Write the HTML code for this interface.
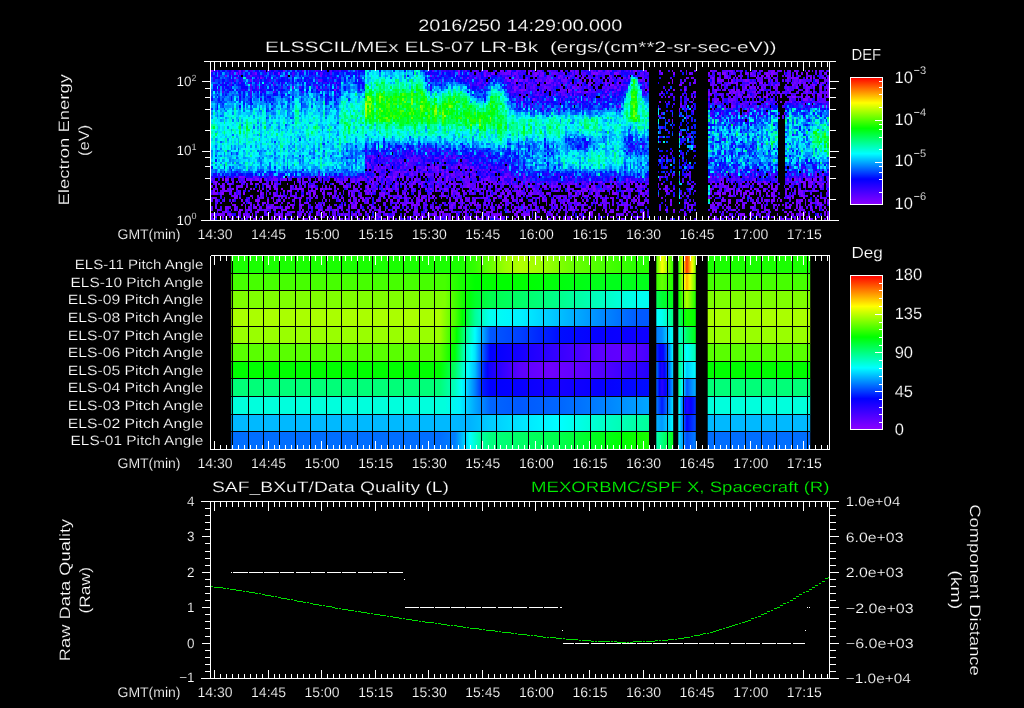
<!DOCTYPE html>
<html><head><meta charset="utf-8"><title>ELS plot</title>
<style>
html,body{margin:0;padding:0;background:#000;}
svg{display:block;will-change:transform;font-family:'Liberation Sans', sans-serif;}
text{text-rendering:geometricPrecision;}
</style></head>
<body>
<svg width="1024" height="708" viewBox="0 0 1024 708" font-family='"Liberation Sans", sans-serif'>
<rect width="1024" height="708" fill="#000"/>
<defs><linearGradient id="cb" x1="0" y1="0" x2="0" y2="1">
<stop offset="0" stop-color="#ff0000"/><stop offset="0.2" stop-color="#ffff00"/><stop offset="0.4" stop-color="#00ff00"/>
<stop offset="0.6" stop-color="#00ffff"/><stop offset="0.8" stop-color="#0000ff"/><stop offset="1" stop-color="#8c00ff"/>
</linearGradient></defs>
<text x="418.2" y="31" font-size="16.5" text-anchor="start" fill="#fff" stroke="#000" stroke-width="0.2" textLength="204" lengthAdjust="spacingAndGlyphs">2016/250 14:29:00.000</text>
<text x="265" y="51.5" font-size="15" text-anchor="start" fill="#fff" stroke="#000" stroke-width="0.2" textLength="511.6" lengthAdjust="spacingAndGlyphs">ELSSCIL/MEx ELS-07 LR-Bk  (ergs/(cm**2-sr-sec-eV))</text>
<g transform="translate(211.3 71.176) scale(1.75 2.3516)" stroke-width="1.02" fill="none" shape-rendering="crispEdges">
<path stroke="#8500ff" d="M0 0h1M141 0h1M157 0h1M165 0h1M170 0h1M182 0h1M200 0h1M205 0h1M221 0h1M242 0h1M248 0h1M256 0h1M285 0h1M321 0h1M327 0h1M341 0h1M38 1h1M141 1h1M181 1h1M185 1h1M218 1h1M220 1h1M230 1h2M264 1h1M292 1h2M308 1h1M317 1h1M320 1h1M334 1h1M340 1h1M351 1h1M125 2h1M156 2h1M158 2h1M185 2h1M199 2h1M227 2h1M299 2h1M310 2h1M314 2h1M317 2h2M320 2h1M323 2h1M335 2h1M28 3h1M168 3h1M198 3h1M208 3h1M212 3h1M271 3h1M286 3h1M311 3h1M332 3h1M334 3h1M340 3h1M342 3h1M170 4h1M173 4h2M176 4h1M191 4h1M193 4h1M213 4h1M216 4h1M227 4h1M263 4h1M284 4h1M289 4h1M295 4h1M297 4h1M305 4h1M318 4h1M336 4h1M35 5h1M191 5h2M205 5h1M232 5h1M261 5h1M275 5h1M297 5h1M307 5h1M313 5h2M336 5h1M343 5h1M346 5h1M349 5h1M176 6h1M216 6h1M225 6h1M228 6h2M267 6h2M291 6h1M322 6h1M332 6h1M338 6h1M343 6h2M60 7h1M206 7h1M305 7h1M323 7h1M334 7h1M348 7h1M70 8h1M173 8h1M177 8h1M179 8h1M204 8h2M216 8h1M264 8h1M270 8h1M288 8h1M297 8h1M314 8h1M340 8h1M352 8h1M204 9h1M209 9h2M214 9h1M225 9h1M276 9h1M296 9h1M298 9h2M303 9h1M340 9h1M348 9h1M207 10h1M226 10h1M285 10h1M301 10h1M320 10h1M343 10h1M215 11h1M310 11h1M313 11h1M316 11h2M323 11h1M325 11h1M332 11h2M341 11h1M352 11h1M177 12h1M184 12h1M199 12h1M208 12h1M289 12h1M338 12h3M288 13h1M331 13h1M233 15h1M297 15h1M343 15h1M267 16h1M271 16h1M306 16h1M114 34h1M133 37h1M89 39h1M126 40h1M142 40h1M99 41h1M122 41h1M128 41h1M169 41h1M93 42h1M102 42h1M115 42h1M129 42h1M131 42h1M166 42h1M309 42h1M94 43h1M107 43h1M134 43h1M148 43h1M122 44h1M131 44h2M349 44h1M16 45h1M35 45h1M46 45h1M67 45h1M93 45h1M96 45h1M100 45h2M104 45h1M109 45h1M128 45h1M130 45h1M134 45h2M146 45h1M158 45h1M165 45h1M167 45h2M178 45h1M285 45h1M306 45h1M339 45h1M6 46h1M8 46h1M26 46h1M28 46h1M49 46h1M61 46h1M104 46h1M116 46h1M134 46h1M157 46h1M237 46h1M291 46h1M329 46h1M333 46h1M336 46h1M340 46h1M344 46h1M348 46h1M2 47h1M34 47h1M50 47h1M66 47h1M81 47h1M83 47h1M92 47h1M115 47h2M128 47h1M134 47h1M136 47h1M159 47h1M171 47h1M180 47h1M191 47h1M222 47h1M239 47h1M241 47h1M316 47h1M337 47h1M342 47h2M2 48h1M4 48h1M23 48h1M34 48h1M43 48h1M47 48h1M55 48h1M69 48h1M74 48h1M92 48h1M115 48h1M119 48h1M137 48h1M140 48h1M147 48h1M156 48h2M159 48h1M169 48h1M177 48h1M187 48h1M203 48h1M208 48h1M216 48h1M224 48h1M240 48h1M242 48h1M255 48h1M257 48h1M290 48h1M292 48h1M309 48h1M312 48h1M317 48h1M334 48h1M347 48h1M349 48h1M15 49h1M31 49h1M36 49h1M48 49h1M57 49h1M67 49h1M79 49h1M81 49h1M89 49h1M120 49h1M128 49h1M146 49h1M155 49h1M174 49h1M190 49h1M194 49h1M199 49h1M204 49h1M215 49h1M218 49h1M226 49h1M229 49h1M247 49h1M259 49h1M288 49h1M293 49h1M295 49h1M304 49h1M320 49h1M341 49h2M348 49h1M3 50h1M6 50h2M12 50h1M19 50h1M33 50h1M37 50h1M40 50h1M48 50h1M50 50h3M60 50h1M62 50h2M67 50h1M89 50h1M98 50h1M122 50h1M125 50h1M133 50h1M154 50h1M203 50h1M212 50h2M215 50h1M218 50h1M228 50h1M237 50h1M240 50h1M259 50h1M296 50h2M301 50h1M308 50h1M310 50h1M316 50h1M329 50h1M1 51h1M8 51h1M11 51h1M26 51h1M44 51h2M57 51h1M70 51h1M83 51h1M88 51h1M90 51h1M101 51h1M128 51h1M137 51h1M148 51h1M152 51h1M168 51h1M176 51h1M209 51h1M211 51h1M214 51h1M218 51h1M221 51h1M224 51h1M236 51h1M245 51h1M259 51h2M262 51h1M301 51h1M306 51h1M312 51h1M322 51h1M333 51h1M1 52h1M6 52h1M18 52h1M28 52h1M35 52h1M54 52h1M58 52h2M68 52h1M78 52h1M89 52h1M91 52h1M98 52h1M119 52h1M131 52h1M137 52h1M141 52h1M159 52h1M166 52h1M169 52h1M175 52h1M179 52h1M182 52h1M204 52h1M208 52h1M217 52h1M229 52h2M245 52h1M289 52h2M296 52h1M305 52h1M308 52h2M320 52h1M335 52h1M14 53h1M36 53h1M38 53h1M52 53h1M80 53h1M91 53h1M118 53h1M126 53h2M133 53h1M160 53h1M164 53h2M176 53h1M188 53h1M199 53h1M207 53h1M213 53h1M215 53h1M249 53h1M290 53h1M296 53h1M318 53h1M332 53h1M337 53h1M344 53h1M13 54h1M23 54h1M48 54h1M86 54h1M104 54h1M120 54h1M131 54h1M145 54h1M147 54h1M161 54h2M167 54h1M189 54h1M199 54h1M211 54h1M219 54h1M228 54h1M236 54h1M241 54h1M284 54h1M304 54h1M329 54h1M338 54h1M25 55h2M32 55h1M38 55h1M50 55h1M67 55h1M75 55h1M79 55h1M84 55h1M86 55h1M100 55h1M103 55h1M106 55h1M111 55h1M118 55h1M124 55h1M136 55h1M143 55h1M177 55h1M191 55h1M207 55h2M214 55h1M223 55h1M242 55h1M244 55h1M262 55h1M292 55h1M295 55h2M302 55h1M311 55h1M320 55h1M323 55h1M325 55h1M334 55h1M337 55h1M346 55h1M350 55h1M11 56h1M21 56h1M29 56h1M36 56h2M44 56h1M55 56h1M80 56h1M82 56h1M117 56h1M138 56h1M143 56h1M149 56h1M158 56h1M165 56h1M183 56h1M203 56h1M213 56h1M246 56h1M296 56h1M300 56h1M309 56h2M332 56h1M342 56h1M346 56h1M352 56h1M13 57h1M17 57h1M26 57h1M31 57h1M45 57h1M51 57h1M67 57h1M82 57h1M85 57h1M91 57h1M95 57h1M107 57h1M109 57h1M114 57h1M116 57h1M118 57h1M137 57h1M150 57h1M201 57h1M209 57h1M222 57h1M234 57h1M262 57h1M287 57h1M289 57h1M293 57h1M295 57h1M299 57h1M304 57h1M334 57h1M348 57h1M19 58h1M25 58h1M32 58h2M42 58h1M44 58h1M51 58h1M55 58h1M81 58h1M104 58h1M128 58h1M141 58h2M164 58h1M171 58h1M178 58h1M208 58h1M272 58h1M330 58h1M336 58h1M342 58h1M345 58h1M350 58h1M11 59h1M13 59h1M16 59h1M21 59h1M27 59h1M36 59h1M40 59h1M42 59h1M52 59h1M61 59h2M70 59h2M84 59h1M95 59h2M99 59h1M105 59h1M110 59h2M134 59h1M169 59h1M176 59h1M183 59h1M185 59h1M190 59h1M199 59h1M207 59h1M211 59h1M213 59h1M223 59h1M225 59h1M236 59h1M259 59h2M264 59h1M288 59h1M295 59h1M298 59h1M311 59h1M317 59h1M322 59h1M343 59h1M347 59h1M8 60h1M16 60h1M26 60h1M47 60h1M54 60h1M64 60h1M67 60h1M88 60h1M96 60h1M103 60h1M111 60h1M127 60h1M130 60h3M139 60h1M144 60h1M147 60h1M151 60h2M157 60h1M172 60h1M174 60h2M190 60h1M195 60h1M203 60h1M213 60h1M216 60h2M225 60h1M229 60h1M236 60h1M241 60h1M247 60h1M288 60h1M312 60h1M339 60h1M350 60h1M4 61h2M10 61h1M18 61h1M23 61h1M60 61h1M74 61h1M118 61h1M124 61h1M128 61h1M136 61h1M140 61h1M164 61h2M181 61h1M191 61h1M194 61h1M237 61h1M270 61h1M296 61h1M302 61h3M329 61h1M332 61h1M336 61h1M338 61h1M2 62h1M6 62h1M20 62h1M28 62h1M36 62h1M39 62h2M49 62h1M68 62h1M71 62h1M96 62h1M101 62h1M112 62h1M120 62h2M130 62h1M144 62h1M151 62h2M158 62h1M174 62h1M199 62h1M204 62h2M215 62h1M228 62h2M244 62h1M247 62h1M293 62h1M315 62h1M321 62h1M352 62h1M25 63h1M34 63h1M53 63h1M60 63h1M67 63h1M70 63h1M99 63h1M116 63h1M125 63h1M135 63h1M153 63h2M165 63h1M173 63h1M185 63h1M188 63h1M196 63h1M201 63h1M203 63h1M210 63h1M234 63h1M286 63h1M288 63h1M295 63h2M304 63h1M323 63h1M340 63h1M342 63h1M345 63h1M352 63h1"/>
<path stroke="#7700ff" d="M16 0h1M151 0h1M169 0h1M179 0h1M187 0h1M208 0h1M217 0h1M226 0h1M228 0h1M239 0h1M263 0h1M296 0h2M311 0h1M320 0h1M333 0h1M347 0h1M14 1h1M25 1h1M156 1h1M160 1h2M168 1h1M170 1h1M173 1h1M186 1h1M189 1h1M217 1h1M219 1h1M232 1h1M257 1h1M273 1h1M284 1h1M289 1h1M305 1h1M321 1h1M327 1h1M337 1h1M8 2h1M172 2h1M188 2h1M192 2h1M205 2h1M238 2h1M293 2h2M301 2h1M143 3h1M146 3h1M150 3h1M169 3h1M192 3h1M202 3h1M204 3h1M224 3h1M228 3h1M233 3h1M274 3h1M294 3h1M300 3h1M316 3h1M318 3h1M329 3h1M331 3h1M333 3h1M344 3h1M352 3h1M169 4h1M177 4h1M179 4h2M194 4h1M201 4h2M225 4h1M245 4h1M247 4h1M286 4h1M290 4h3M306 4h1M323 4h1M345 4h1M352 4h1M11 5h1M157 5h1M186 5h1M193 5h1M198 5h1M217 5h1M225 5h1M263 5h1M295 5h2M299 5h2M308 5h1M310 5h1M333 5h1M338 5h1M156 6h1M196 6h1M199 6h1M201 6h1M215 6h1M234 6h1M288 6h1M294 6h1M300 6h1M306 6h1M315 6h1M320 6h1M324 6h1M340 6h1M348 6h1M46 7h1M173 7h2M190 7h1M207 7h1M209 7h1M230 7h1M308 7h1M310 7h1M312 7h1M314 7h1M321 7h1M340 7h2M344 7h1M352 7h1M176 8h1M178 8h1M199 8h1M207 8h1M232 8h1M249 8h1M293 8h1M298 8h1M300 8h2M303 8h1M306 8h1M315 8h1M329 8h1M229 9h1M284 9h1M288 9h1M301 9h1M304 9h1M310 9h1M319 9h1M321 9h1M324 9h1M330 9h1M351 9h2M196 10h1M205 10h1M284 10h1M306 10h2M311 10h1M315 10h1M317 10h1M337 10h1M346 10h3M352 10h1M181 11h1M191 11h1M259 11h1M261 11h1M276 11h1M302 11h1M308 11h1M330 11h1M337 11h1M348 11h1M195 12h1M213 12h1M295 12h1M297 12h1M342 12h1M209 13h1M256 13h1M287 13h1M306 13h1M325 13h1M328 13h1M347 13h1M268 14h1M287 14h1M308 14h1M318 14h1M350 15h1M293 16h1M313 16h1M315 16h1M320 16h1M275 17h1M306 17h1M305 18h1M290 19h1M324 20h1M263 21h1M259 25h1M92 36h1M138 37h1M260 37h1M91 38h1M107 38h1M132 38h1M108 39h1M110 39h1M112 39h1M141 39h1M148 39h1M89 40h2M100 40h2M132 40h1M295 40h1M89 41h1M95 41h1M97 41h1M126 41h1M129 41h1M139 41h1M145 41h1M149 41h1M103 42h1M117 42h1M121 42h2M132 42h1M149 42h1M302 42h1M340 42h1M105 43h2M110 43h2M138 43h1M161 43h1M287 43h1M295 43h1M345 43h1M114 44h1M129 44h1M137 44h1M150 44h1M175 44h1M297 44h1M338 44h1M17 45h2M61 45h1M85 45h1M89 45h1M94 45h1M105 45h1M142 45h2M202 45h1M205 45h1M259 45h1M287 45h1M345 45h1M9 46h1M20 46h1M22 46h1M25 46h1M31 46h1M36 46h2M41 46h2M70 46h1M72 46h1M76 46h2M84 46h1M86 46h1M91 46h1M99 46h1M107 46h1M129 46h1M131 46h1M147 46h1M156 46h1M165 46h2M175 46h1M310 46h1M323 46h1M331 46h1M345 46h1M1 47h1M12 47h1M18 47h1M28 47h1M47 47h1M53 47h2M59 47h1M73 47h2M76 47h1M80 47h1M90 47h1M120 47h2M131 47h1M145 47h1M154 47h1M160 47h1M162 47h1M177 47h1M179 47h1M216 47h1M218 47h1M228 47h1M230 47h1M240 47h1M275 47h1M286 47h2M304 47h1M308 47h1M310 47h1M315 47h1M336 47h1M338 47h1M346 47h1M6 48h1M9 48h2M22 48h1M36 48h1M52 48h1M79 48h1M105 48h2M108 48h1M118 48h1M124 48h1M138 48h1M146 48h1M152 48h1M161 48h1M166 48h2M171 48h1M179 48h1M182 48h1M186 48h1M197 48h1M205 48h1M230 48h1M243 48h1M245 48h1M249 48h1M288 48h1M295 48h1M302 48h1M316 48h1M335 48h1M338 48h2M343 48h1M2 49h1M6 49h2M17 49h1M20 49h1M27 49h1M32 49h2M45 49h1M55 49h1M70 49h1M75 49h3M100 49h1M105 49h1M114 49h1M129 49h1M147 49h1M152 49h1M162 49h1M173 49h1M182 49h1M191 49h1M196 49h1M214 49h1M217 49h1M227 49h1M231 49h1M245 49h1M260 49h1M274 49h1M322 49h1M338 49h2M345 49h1M14 50h1M22 50h1M36 50h1M49 50h1M55 50h1M65 50h1M72 50h1M94 50h1M100 50h2M110 50h1M115 50h1M128 50h1M134 50h1M149 50h1M164 50h1M171 50h1M176 50h1M180 50h1M184 50h1M204 50h1M206 50h1M219 50h1M285 50h1M291 50h1M295 50h1M320 50h2M351 50h1M3 51h1M7 51h1M15 51h1M41 51h1M58 51h1M62 51h1M75 51h1M87 51h1M93 51h1M102 51h1M139 51h1M143 51h2M157 51h1M163 51h1M166 51h1M170 51h1M174 51h1M182 51h1M197 51h1M213 51h1M240 51h1M244 51h1M248 51h1M285 51h1M294 51h2M315 51h1M318 51h1M336 51h2M340 51h1M344 51h2M2 52h1M5 52h1M13 52h1M31 52h1M39 52h1M63 52h2M80 52h1M96 52h2M106 52h1M110 52h1M140 52h1M174 52h1M183 52h1M186 52h1M192 52h1M210 52h1M212 52h1M220 52h1M231 52h1M235 52h1M246 52h1M292 52h2M300 52h1M302 52h1M304 52h1M307 52h1M313 52h1M317 52h1M328 52h1M337 52h1M12 53h1M22 53h1M26 53h1M39 53h2M47 53h1M51 53h1M56 53h1M58 53h1M70 53h1M84 53h2M97 53h2M102 53h1M116 53h1M121 53h1M132 53h1M141 53h1M169 53h1M206 53h1M214 53h1M218 53h1M220 53h1M238 53h1M242 53h1M244 53h1M247 53h1M255 53h1M272 53h1M304 53h1M307 53h1M320 53h2M338 53h1M346 53h1M1 54h1M16 54h1M27 54h1M29 54h1M35 54h1M42 54h1M44 54h1M47 54h1M50 54h1M64 54h1M69 54h1M74 54h2M81 54h1M85 54h1M90 54h1M108 54h1M110 54h2M113 54h1M117 54h1M124 54h1M126 54h1M136 54h1M151 54h1M157 54h1M168 54h1M171 54h2M186 54h2M195 54h1M202 54h1M223 54h1M225 54h1M229 54h1M238 54h1M257 54h1M292 54h1M303 54h1M308 54h1M327 54h1M332 54h1M348 54h1M7 55h1M17 55h1M27 55h1M35 55h1M41 55h1M73 55h1M78 55h1M89 55h1M94 55h2M107 55h1M120 55h1M122 55h1M139 55h2M146 55h1M150 55h1M166 55h1M168 55h1M172 55h1M189 55h1M203 55h2M224 55h1M233 55h1M237 55h1M287 55h1M317 55h1M321 55h1M336 55h1M18 56h1M30 56h1M32 56h1M53 56h2M59 56h1M64 56h1M79 56h1M83 56h1M89 56h1M93 56h1M111 56h3M132 56h1M135 56h1M150 56h1M194 56h2M199 56h1M201 56h1M207 56h1M210 56h1M220 56h1M237 56h1M239 56h1M243 56h1M245 56h1M247 56h1M270 56h2M286 56h1M290 56h1M295 56h1M313 56h1M315 56h1M336 56h1M339 56h1M347 56h2M12 57h1M22 57h1M34 57h2M50 57h1M62 57h1M76 57h1M81 57h1M90 57h1M105 57h1M110 57h1M115 57h1M143 57h1M148 57h1M152 57h2M166 57h1M178 57h1M182 57h1M197 57h1M212 57h1M221 57h1M224 57h1M229 57h1M236 57h2M246 57h1M285 57h2M303 57h1M314 57h1M321 57h1M324 57h1M328 57h1M330 57h1M8 58h2M21 58h1M24 58h1M31 58h1M37 58h1M39 58h1M43 58h1M46 58h1M66 58h1M73 58h1M78 58h1M80 58h1M92 58h1M96 58h1M106 58h1M129 58h1M136 58h2M157 58h1M159 58h1M165 58h1M173 58h1M197 58h1M202 58h1M205 58h1M216 58h1M236 58h1M274 58h1M285 58h1M294 58h1M303 58h1M309 58h1M314 58h1M323 58h1M334 58h1M347 58h1M8 59h1M17 59h1M31 59h1M66 59h1M90 59h1M101 59h1M116 59h2M122 59h1M129 59h1M145 59h1M160 59h1M163 59h1M175 59h1M177 59h1M184 59h1M205 59h2M209 59h1M218 59h1M237 59h1M286 59h2M293 59h1M318 59h1M323 59h1M333 59h1M335 59h1M338 59h1M351 59h1M15 60h1M25 60h1M30 60h1M38 60h1M43 60h1M45 60h2M60 60h1M63 60h1M78 60h1M83 60h2M98 60h1M112 60h1M116 60h2M145 60h1M158 60h3M186 60h1M193 60h1M211 60h1M228 60h1M238 60h1M273 60h1M315 60h1M328 60h1M330 60h2M336 60h1M343 60h1M0 61h1M15 61h1M20 61h1M32 61h1M37 61h1M39 61h2M50 61h2M53 61h1M56 61h1M64 61h2M81 61h2M85 61h1M94 61h1M100 61h1M126 61h2M134 61h1M145 61h1M151 61h1M156 61h1M161 61h3M173 61h1M178 61h3M202 61h1M210 61h2M217 61h1M221 61h1M231 61h1M234 61h1M246 61h2M309 61h1M311 61h1M318 61h1M323 61h1M331 61h1M337 61h1M352 61h1M15 62h1M22 62h1M38 62h1M42 62h1M55 62h1M57 62h1M63 62h1M92 62h1M95 62h1M119 62h1M124 62h1M131 62h1M136 62h1M138 62h1M140 62h1M146 62h2M155 62h1M161 62h1M163 62h1M179 62h1M186 62h1M196 62h1M213 62h1M231 62h1M291 62h1M328 62h1M336 62h1M340 62h1M19 63h1M24 63h1M37 63h1M52 63h1M73 63h1M76 63h1M78 63h1M98 63h1M110 63h1M136 63h1M140 63h1M145 63h1M164 63h1M192 63h1M204 63h1M212 63h1M246 63h1M271 63h1M311 63h1M326 63h1M333 63h1M335 63h1M338 63h1M350 63h1"/>
<path stroke="#6900ff" d="M3 0h1M41 0h1M162 0h1M166 0h1M174 0h1M188 0h1M193 0h1M222 0h1M241 0h1M271 0h1M276 0h1M287 0h1M294 0h1M300 0h1M310 0h1M314 0h1M318 0h2M323 0h3M330 0h1M343 0h1M345 0h1M16 1h1M35 1h1M166 1h2M169 1h1M174 1h1M184 1h1M188 1h1M194 1h3M201 1h1M206 1h1M208 1h1M211 1h1M227 1h1M297 1h1M306 1h1M316 1h1M318 1h1M350 1h1M22 2h1M42 2h1M62 2h1M174 2h1M184 2h1M187 2h1M189 2h1M193 2h1M198 2h1M200 2h1M209 2h1M212 2h1M215 2h1M228 2h1M231 2h1M287 2h1M303 2h1M312 2h1M315 2h1M326 2h1M330 2h1M332 2h1M341 2h2M352 2h1M14 3h1M175 3h1M193 3h1M200 3h1M220 3h1M235 3h1M238 3h1M246 3h1M275 3h1M289 3h1M293 3h1M296 3h1M314 3h1M319 3h1M335 3h1M349 3h2M22 4h1M61 4h1M185 4h1M188 4h1M200 4h1M218 4h1M244 4h1M276 4h1M304 4h1M312 4h1M314 4h1M320 4h1M329 4h1M333 4h2M337 4h1M346 4h1M350 4h1M153 5h1M171 5h1M173 5h1M178 5h1M181 5h1M202 5h1M209 5h3M215 5h1M223 5h1M248 5h1M269 5h1M276 5h1M286 5h2M335 5h1M339 5h1M22 6h1M173 6h1M175 6h1M184 6h1M188 6h1M204 6h1M210 6h1M232 6h1M248 6h1M285 6h2M292 6h1M305 6h1M309 6h1M316 6h2M351 6h1M72 7h1M184 7h1M191 7h2M199 7h1M203 7h1M215 7h1M231 7h1M291 7h1M303 7h1M316 7h1M329 7h1M189 8h1M193 8h1M201 8h2M226 8h1M233 8h1M295 8h1M304 8h1M311 8h1M313 8h1M322 8h1M348 8h1M35 9h1M173 9h1M177 9h1M189 9h1M199 9h2M207 9h1M248 9h1M257 9h1M297 9h1M300 9h1M309 9h1M312 9h1M317 9h1M323 9h1M335 9h1M339 9h1M342 9h1M344 9h1M186 10h1M201 10h1M287 10h1M290 10h1M295 10h1M299 10h1M302 10h1M325 10h1M331 10h1M177 11h1M202 11h2M223 11h1M268 11h1M274 11h1M291 11h1M296 11h1M298 11h1M301 11h1M304 11h1M306 11h2M315 11h1M340 11h1M346 11h1M351 11h1M284 12h1M287 12h2M298 12h1M303 12h1M307 12h1M320 12h1M323 12h1M330 12h1M346 12h1M199 13h1M207 13h1M274 13h1M296 13h1M310 13h2M316 13h2M330 13h1M336 13h1M302 14h2M323 14h1M338 14h1M178 15h1M189 15h1M231 15h1M268 15h1M293 15h1M295 15h1M298 15h1M310 15h2M189 16h1M286 16h1M303 16h1M310 16h1M291 18h1M298 18h1M311 18h1M327 18h1M255 19h1M302 19h1M326 19h1M267 28h1M273 28h1M134 35h1M159 35h1M90 36h1M111 36h1M115 36h2M133 36h1M139 36h1M143 36h1M92 37h1M95 37h1M97 37h1M112 37h1M128 37h1M257 37h1M101 38h1M103 38h1M114 38h1M117 38h1M141 38h1M162 39h1M94 40h1M103 40h1M110 40h1M129 40h1M141 40h1M158 40h1M93 41h1M108 41h1M118 41h2M137 41h1M146 41h1M148 41h1M95 42h1M99 42h1M107 42h1M112 42h1M126 42h1M134 42h1M155 42h1M99 43h1M114 43h1M117 43h1M119 43h1M123 43h1M129 43h1M132 43h1M142 43h1M145 43h1M157 43h1M273 43h1M300 43h1M311 43h1M352 43h1M104 44h2M108 44h2M117 44h1M120 44h1M123 44h2M135 44h1M138 44h1M143 44h1M149 44h1M168 44h2M178 44h1M263 44h1M312 44h1M330 44h1M345 44h1M24 45h1M55 45h1M76 45h1M102 45h1M108 45h1M121 45h1M139 45h1M145 45h1M153 45h1M170 45h1M179 45h1M229 45h1M257 45h1M347 45h1M21 46h1M35 46h1M39 46h1M52 46h1M56 46h1M81 46h1M85 46h1M92 46h1M94 46h1M96 46h1M118 46h1M127 46h1M143 46h3M154 46h1M158 46h1M163 46h1M171 46h2M239 46h1M290 46h1M292 46h1M295 46h1M339 46h1M341 46h1M352 46h1M16 47h1M19 47h1M22 47h1M27 47h1M71 47h1M98 47h1M100 47h1M105 47h1M110 47h2M127 47h1M146 47h2M152 47h2M166 47h1M197 47h1M221 47h1M232 47h1M235 47h1M272 47h1M292 47h1M294 47h1M297 47h1M306 47h1M322 47h1M341 47h1M345 47h1M352 47h1M11 48h1M20 48h1M25 48h2M30 48h2M85 48h1M94 48h1M109 48h1M114 48h1M120 48h1M129 48h1M132 48h1M136 48h1M148 48h1M163 48h1M180 48h1M194 48h1M200 48h1M212 48h1M231 48h1M273 48h1M285 48h1M313 48h1M320 48h1M323 48h1M331 48h1M342 48h1M346 48h1M0 49h1M14 49h1M16 49h1M58 49h1M65 49h1M84 49h1M88 49h1M91 49h1M111 49h1M138 49h1M144 49h2M150 49h1M158 49h2M176 49h1M179 49h2M183 49h1M189 49h1M201 49h1M203 49h1M211 49h1M236 49h1M242 49h2M287 49h1M318 49h1M330 49h1M1 50h1M9 50h2M24 50h1M27 50h1M29 50h1M45 50h1M68 50h1M81 50h3M85 50h1M102 50h1M105 50h2M119 50h1M131 50h1M138 50h1M141 50h1M151 50h2M169 50h1M194 50h1M198 50h1M211 50h1M216 50h1M239 50h1M243 50h1M247 50h1M256 50h1M264 50h1M273 50h1M294 50h1M298 50h1M312 50h1M322 50h1M331 50h1M335 50h1M5 51h2M43 51h1M55 51h1M59 51h1M71 51h1M78 51h1M81 51h2M114 51h1M123 51h1M130 51h1M134 51h1M138 51h1M155 51h1M159 51h1M175 51h1M180 51h1M185 51h1M187 51h1M196 51h1M203 51h2M219 51h1M223 51h1M229 51h1M249 51h1M300 51h1M302 51h1M305 51h1M316 51h1M328 51h1M335 51h1M339 51h1M352 51h1M3 52h1M10 52h1M36 52h1M56 52h1M66 52h1M73 52h1M85 52h1M112 52h1M118 52h1M125 52h1M144 52h1M149 52h1M155 52h1M162 52h1M177 52h1M189 52h1M191 52h1M193 52h1M205 52h1M238 52h1M248 52h1M311 52h1M321 52h1M336 52h1M351 52h1M13 53h1M28 53h1M37 53h1M46 53h1M69 53h1M81 53h1M101 53h1M106 53h3M122 53h1M124 53h1M131 53h1M135 53h1M180 53h1M182 53h1M190 53h1M196 53h1M200 53h2M204 53h1M208 53h1M221 53h2M234 53h1M246 53h1M297 53h1M299 53h1M340 53h1M2 54h1M14 54h1M34 54h1M51 54h1M54 54h1M57 54h1M60 54h1M98 54h1M101 54h1M107 54h1M121 54h1M128 54h1M139 54h1M149 54h1M155 54h2M198 54h1M243 54h1M285 54h1M312 54h1M321 54h1M324 54h1M330 54h1M350 54h1M2 55h2M12 55h1M20 55h1M47 55h1M82 55h1M87 55h1M96 55h1M102 55h1M117 55h1M142 55h1M147 55h1M156 55h1M167 55h1M169 55h1M176 55h1M194 55h1M196 55h1M201 55h1M212 55h1M220 55h1M229 55h1M241 55h1M247 55h1M249 55h1M293 55h1M303 55h1M314 55h1M316 55h1M339 55h1M341 55h1M3 56h1M40 56h1M106 56h1M108 56h1M114 56h2M121 56h1M139 56h1M147 56h1M152 56h1M156 56h1M170 56h1M178 56h1M185 56h1M187 56h1M191 56h1M217 56h1M223 56h1M225 56h2M249 56h1M262 56h1M272 56h1M288 56h2M304 56h2M334 56h2M343 56h1M19 57h1M43 57h1M46 57h1M52 57h1M60 57h1M64 57h1M71 57h1M117 57h1M122 57h1M138 57h1M156 57h1M160 57h1M164 57h1M168 57h2M181 57h1M191 57h1M196 57h1M202 57h1M227 57h1M235 57h1M239 57h1M244 57h1M259 57h1M272 57h1M274 57h1M301 57h1M310 57h1M326 57h1M331 57h1M339 57h1M341 57h2M346 57h1M2 58h1M13 58h1M27 58h1M34 58h1M36 58h1M60 58h1M67 58h1M82 58h1M89 58h1M91 58h1M116 58h1M125 58h1M145 58h1M151 58h1M160 58h1M175 58h1M180 58h1M185 58h1M189 58h1M212 58h1M215 58h1M227 58h1M232 58h1M239 58h1M286 58h1M295 58h2M308 58h1M316 58h1M328 58h1M3 59h2M19 59h1M26 59h1M30 59h1M35 59h1M41 59h1M65 59h1M86 59h1M131 59h1M133 59h1M152 59h1M189 59h1M196 59h1M204 59h1M212 59h1M228 59h2M231 59h2M297 59h1M299 59h1M316 59h1M336 59h2M349 59h1M19 60h1M51 60h2M70 60h1M90 60h1M137 60h1M153 60h1M155 60h1M178 60h2M183 60h1M187 60h1M198 60h1M207 60h1M242 60h1M245 60h1M286 60h1M292 60h1M300 60h1M308 60h1M314 60h1M327 60h1M338 60h1M352 60h1M1 61h1M6 61h2M9 61h1M11 61h1M31 61h1M36 61h1M43 61h2M70 61h1M76 61h2M99 61h1M104 61h1M110 61h1M116 61h1M120 61h1M130 61h1M132 61h1M143 61h1M157 61h1M160 61h1M174 61h1M177 61h1M216 61h1M232 61h1M285 61h1M307 61h2M313 61h1M317 61h1M341 61h1M346 61h1M350 61h1M8 62h1M10 62h1M12 62h1M18 62h1M21 62h1M25 62h1M34 62h1M62 62h1M64 62h1M82 62h1M89 62h1M102 62h1M114 62h1M117 62h1M129 62h1M145 62h1M159 62h1M162 62h1M165 62h1M167 62h1M187 62h1M194 62h1M198 62h1M203 62h1M219 62h1M241 62h1M246 62h1M267 62h1M284 62h1M288 62h1M305 62h1M316 62h1M333 62h1M341 62h1M346 62h1M0 63h2M8 63h1M38 63h1M40 63h1M54 63h1M84 63h1M86 63h1M88 63h1M93 63h1M95 63h1M101 63h1M103 63h1M107 63h1M130 63h1M141 63h1M146 63h1M166 63h1M182 63h1M235 63h1M262 63h1M307 63h1M317 63h1M329 63h2M336 63h1"/>
<path stroke="#5b00ff" d="M52 0h1M59 0h1M68 0h1M126 0h1M145 0h1M150 0h1M156 0h1M175 0h1M181 0h1M184 0h1M186 0h1M192 0h1M199 0h1M206 0h1M209 0h1M219 0h1M225 0h1M233 0h1M268 0h1M288 0h1M293 0h1M302 0h1M313 0h1M334 0h1M348 0h1M352 0h1M62 1h1M68 1h1M131 1h1M147 1h1M152 1h1M165 1h1M197 1h1M209 1h1M213 1h1M221 1h1M225 1h2M245 1h2M249 1h1M274 1h1M290 1h1M309 1h1M322 1h1M329 1h2M345 1h1M151 2h1M159 2h1M175 2h1M245 2h1M309 2h1M328 2h2M336 2h1M340 2h1M26 3h1M153 3h1M174 3h1M180 3h1M209 3h1M211 3h1M216 3h1M236 3h1M272 3h1M285 3h1M290 3h1M298 3h1M302 3h1M312 3h2M321 3h2M330 3h1M347 3h1M62 4h1M154 4h1M183 4h1M186 4h2M192 4h1M195 4h1M210 4h2M221 4h1M229 4h1M233 4h1M237 4h1M270 4h1M300 4h1M307 4h1M313 4h1M322 4h1M326 4h1M338 4h2M342 4h1M351 4h1M16 5h1M70 5h1M152 5h1M172 5h1M183 5h1M196 5h1M201 5h1M207 5h1M216 5h1M226 5h1M228 5h1M309 5h1M320 5h1M323 5h1M329 5h1M332 5h1M334 5h1M341 5h1M348 5h1M350 5h1M152 6h1M180 6h1M185 6h1M189 6h2M194 6h1M208 6h1M236 6h1M246 6h1M307 6h1M323 6h1M333 6h2M336 6h1M352 6h1M26 7h1M155 7h1M172 7h1M178 7h1M182 7h1M193 7h1M200 7h1M208 7h1M213 7h1M224 7h1M226 7h1M228 7h1M233 7h1M248 7h1M270 7h1M286 7h1M289 7h1M307 7h1M309 7h1M322 7h1M328 7h1M332 7h1M339 7h1M342 7h1M347 7h1M351 7h1M22 8h1M61 8h1M192 8h1M200 8h1M210 8h1M223 8h1M259 8h1M261 8h1M286 8h2M289 8h1M292 8h1M323 8h1M335 8h2M339 8h1M171 9h2M181 9h1M184 9h1M186 9h2M198 9h1M201 9h1M213 9h1M218 9h1M227 9h1M275 9h1M287 9h1M326 9h3M334 9h1M349 9h2M178 10h1M185 10h1M188 10h1M200 10h1M202 10h1M291 10h1M297 10h1M310 10h1M340 10h1M350 10h1M225 11h1M257 11h1M264 11h1M299 11h1M305 11h1M331 11h1M335 11h1M344 11h1M350 11h1M183 12h1M192 12h1M272 12h1M292 12h1M296 12h1M299 12h1M311 12h1M319 12h1M349 12h2M174 13h1M259 13h1M290 13h1M297 13h1M299 13h1M305 13h1M308 13h1M312 13h1M318 13h1M339 13h1M343 13h2M348 13h3M178 14h1M271 14h1M297 14h1M304 14h1M321 14h1M274 15h1M299 15h1M302 15h1M304 15h1M314 15h1M317 15h1M184 16h1M297 16h1M267 17h1M301 17h1M317 18h1M314 19h1M272 20h1M286 20h1M267 26h1M268 27h1M314 31h1M246 32h1M276 32h1M91 33h1M95 34h1M124 34h1M136 34h1M263 34h1M96 35h1M147 35h1M89 36h1M136 36h1M93 37h1M100 37h1M114 37h3M118 37h1M124 37h1M129 37h1M157 37h1M88 38h1M113 38h1M116 38h1M145 38h1M262 38h1M122 39h3M153 39h1M96 40h1M112 40h2M135 40h1M140 40h1M145 40h1M156 40h1M159 40h1M94 41h1M98 41h1M110 41h1M114 41h1M124 41h2M140 41h1M144 41h1M152 41h1M162 41h1M273 41h1M96 42h1M114 42h1M127 42h2M141 42h1M151 42h1M153 42h1M158 42h1M165 42h1M300 42h1M346 42h1M92 43h1M96 43h1M104 43h1M109 43h1M128 43h1M135 43h1M146 43h1M162 43h1M175 43h1M308 43h1M88 44h1M99 44h1M113 44h1M115 44h1M125 44h2M141 44h2M145 44h1M196 44h1M261 44h1M272 44h1M289 44h2M309 44h1M342 44h1M13 45h1M25 45h1M36 45h1M58 45h1M97 45h1M112 45h1M115 45h1M124 45h1M137 45h2M148 45h1M157 45h1M163 45h1M171 45h1M256 45h1M263 45h1M271 45h1M273 45h1M288 45h1M290 45h1M292 45h1M298 45h1M305 45h1M333 45h1M348 45h1M352 45h1M0 46h1M11 46h1M17 46h1M23 46h1M34 46h1M40 46h1M44 46h1M79 46h2M83 46h1M87 46h2M90 46h1M102 46h1M109 46h1M112 46h1M117 46h1M130 46h1M141 46h1M146 46h1M178 46h1M181 46h1M183 46h1M228 46h1M256 46h1M297 46h2M301 46h1M309 46h1M315 46h1M321 46h1M334 46h1M342 46h1M3 47h1M8 47h1M14 47h1M52 47h1M60 47h1M64 47h1M72 47h1M103 47h1M113 47h1M132 47h1M138 47h2M151 47h1M158 47h1M168 47h1M184 47h1M204 47h3M212 47h2M227 47h1M234 47h1M237 47h1M246 47h1M269 47h1M290 47h1M303 47h1M330 47h1M339 47h1M17 48h1M37 48h1M50 48h1M75 48h1M82 48h1M95 48h1M97 48h1M112 48h1M116 48h1M130 48h1M142 48h1M145 48h1M149 48h1M154 48h1M162 48h1M173 48h1M192 48h1M206 48h1M214 48h1M234 48h1M238 48h1M307 48h1M329 48h1M332 48h1M341 48h1M348 48h1M351 48h2M53 49h1M63 49h1M92 49h2M97 49h1M110 49h1M113 49h1M139 49h1M148 49h1M175 49h1M177 49h1M195 49h1M197 49h1M208 49h1M237 49h2M244 49h1M246 49h1M290 49h1M292 49h1M294 49h1M298 49h1M302 49h1M305 49h1M313 49h2M323 49h1M335 49h1M352 49h1M2 50h1M59 50h1M90 50h1M130 50h1M143 50h1M147 50h1M150 50h1M158 50h1M167 50h2M178 50h1M183 50h1M191 50h1M205 50h1M217 50h1M223 50h2M238 50h1M244 50h1M258 50h1M260 50h1M286 50h1M290 50h1M315 50h1M323 50h1M328 50h1M336 50h1M344 50h1M9 51h2M28 51h1M32 51h1M52 51h1M56 51h1M64 51h1M79 51h2M103 51h1M111 51h1M116 51h1M118 51h1M126 51h1M133 51h1M146 51h1M162 51h1M173 51h1M184 51h1M206 51h1M210 51h1M212 51h1M220 51h1M222 51h1M231 51h1M276 51h1M289 51h1M298 51h1M311 51h1M313 51h1M321 51h1M343 51h1M15 52h2M29 52h1M43 52h1M48 52h1M70 52h1M88 52h1M100 52h1M109 52h1M132 52h1M139 52h1M145 52h1M147 52h1M167 52h1M170 52h1M176 52h1M178 52h1M181 52h1M184 52h2M187 52h1M227 52h1M232 52h1M260 52h1M270 52h1M285 52h1M287 52h1M298 52h1M333 52h1M342 52h1M11 53h1M45 53h1M60 53h1M67 53h1M72 53h1M104 53h2M110 53h2M157 53h3M167 53h2M171 53h2M175 53h1M198 53h1M202 53h1M212 53h1M235 53h2M239 53h1M286 53h1M295 53h1M329 53h1M331 53h1M352 53h1M0 54h1M7 54h1M21 54h1M28 54h1M40 54h1M59 54h1M72 54h1M79 54h1M82 54h1M88 54h1M96 54h1M105 54h1M118 54h1M140 54h1M142 54h1M152 54h1M154 54h1M174 54h1M184 54h1M191 54h1M197 54h1M207 54h1M220 54h1M231 54h1M235 54h1M314 54h1M351 54h1M0 55h1M46 55h1M56 55h1M63 55h1M65 55h1M81 55h1M110 55h1M114 55h1M145 55h1M158 55h2M161 55h1M174 55h1M183 55h1M187 55h1M190 55h1M195 55h1M225 55h1M240 55h1M248 55h1M259 55h1M291 55h1M300 55h1M309 55h1M318 55h1M330 55h1M335 55h1M345 55h1M352 55h1M5 56h1M22 56h1M26 56h1M50 56h1M88 56h1M98 56h2M109 56h2M118 56h1M141 56h1M160 56h1M168 56h1M171 56h1M174 56h2M184 56h1M205 56h2M209 56h1M224 56h1M229 56h1M236 56h1M241 56h1M244 56h1M303 56h1M312 56h1M320 56h1M345 56h1M350 56h1M2 57h1M80 57h1M98 57h1M123 57h1M136 57h1M145 57h1M155 57h1M172 57h1M184 57h2M193 57h2M207 57h1M213 57h1M225 57h1M233 57h1M245 57h1M291 57h1M322 57h1M336 57h1M0 58h1M10 58h1M14 58h1M28 58h1M50 58h1M57 58h1M59 58h1M62 58h1M68 58h1M74 58h1M85 58h1M111 58h1M114 58h1M121 58h1M155 58h1M163 58h1M179 58h1M188 58h1M206 58h1M224 58h1M237 58h1M256 58h1M287 58h1M292 58h1M300 58h1M304 58h1M321 58h1M337 58h1M340 58h1M0 59h1M5 59h1M20 59h1M22 59h1M28 59h1M32 59h1M50 59h1M67 59h1M69 59h1M72 59h1M74 59h1M77 59h1M83 59h1M93 59h1M103 59h1M126 59h1M137 59h1M148 59h1M172 59h2M180 59h1M194 59h1M198 59h1M201 59h2M214 59h1M256 59h1M273 59h1M301 59h1M309 59h1M342 59h1M3 60h1M6 60h2M49 60h1M61 60h1M72 60h1M75 60h1M95 60h1M104 60h1M122 60h1M128 60h1M163 60h1M169 60h2M176 60h1M181 60h1M192 60h1M235 60h1M239 60h1M246 60h1M249 60h1M264 60h1M267 60h1M318 60h1M344 60h1M16 61h1M21 61h1M38 61h1M42 61h1M62 61h1M69 61h1M95 61h1M103 61h1M121 61h1M123 61h1M133 61h1M158 61h1M193 61h1M226 61h1M233 61h1M235 61h1M291 61h1M299 61h1M334 61h2M0 62h1M14 62h1M23 62h1M47 62h1M50 62h1M70 62h1M78 62h1M91 62h1M107 62h1M115 62h1M132 62h1M135 62h1M178 62h1M185 62h1M191 62h1M209 62h1M295 62h1M298 62h1M302 62h1M308 62h1M313 62h1M318 62h1M320 62h1M347 62h1M11 63h2M27 63h1M42 63h1M45 63h1M56 63h1M58 63h1M69 63h1M74 63h1M80 63h1M105 63h1M108 63h1M119 63h1M127 63h1M133 63h1M148 63h1M152 63h1M157 63h1M163 63h1M206 63h1M215 63h1M242 63h1M291 63h1M325 63h1M343 63h1"/>
<path stroke="#4d00ff" d="M12 0h1M18 0h1M23 0h1M73 0h1M154 0h1M176 0h1M194 0h1M196 0h1M227 0h1M232 0h1M237 0h1M244 0h1M246 0h2M286 0h1M292 0h1M295 0h1M303 0h1M329 0h1M339 0h1M349 0h1M11 1h1M24 1h1M46 1h1M63 1h1M149 1h1M172 1h1M212 1h1M223 1h2M241 1h1M243 1h1M271 1h1M298 1h1M302 1h1M319 1h1M332 1h1M347 1h2M141 2h1M148 2h1M152 2h2M164 2h1M203 2h1M206 2h1M216 2h1M220 2h1M223 2h1M235 2h1M242 2h1M244 2h1M246 2h1M284 2h2M302 2h1M308 2h1M348 2h2M29 3h1M68 3h1M71 3h1M187 3h2M190 3h2M199 3h1M215 3h1M217 3h1M219 3h1M226 3h1M262 3h1M13 4h1M131 4h1M145 4h1M153 4h1M167 4h1M190 4h1M197 4h1M203 4h1M228 4h1M232 4h1M234 4h1M246 4h1M249 4h1M302 4h1M309 4h1M328 4h1M332 4h1M340 4h1M147 5h2M167 5h1M182 5h1M189 5h1M220 5h1M231 5h1M268 5h1M273 5h1M291 5h1M293 5h1M298 5h1M316 5h1M324 5h1M11 6h1M35 6h1M148 6h1M171 6h1M178 6h1M181 6h1M203 6h1M205 6h1M218 6h1M235 6h1M302 6h1M314 6h1M328 6h1M339 6h1M342 6h1M347 6h1M50 7h1M65 7h1M153 7h1M169 7h1M175 7h1M180 7h1M183 7h1M189 7h1M194 7h1M204 7h1M210 7h2M219 7h2M223 7h1M227 7h1M229 7h1M304 7h1M330 7h1M333 7h1M338 7h1M350 7h1M174 8h2M180 8h1M184 8h2M187 8h1M195 8h1M225 8h1M246 8h2M284 8h1M308 8h1M310 8h1M318 8h1M330 8h2M337 8h1M341 8h1M6 9h1M22 9h1M52 9h1M194 9h1M205 9h1M208 9h1M212 9h1M215 9h3M219 9h1M230 9h1M307 9h2M320 9h1M338 9h1M341 9h1M177 10h1M179 10h1M189 10h1M194 10h1M223 10h2M231 10h2M256 10h1M263 10h1M271 10h1M292 10h1M300 10h1M318 10h1M332 10h2M344 10h1M187 11h1M206 11h1M222 11h1M231 11h1M271 11h1M287 11h1M312 11h1M329 11h1M334 11h1M336 11h1M339 11h1M347 11h1M185 12h1M191 12h1M201 12h1M216 12h1M223 12h1M228 12h1M275 12h1M286 12h1M331 12h1M333 12h1M335 12h1M348 12h1M210 13h1M261 13h1M270 13h1M295 13h1M309 13h1M313 13h1M334 13h1M340 13h1M346 13h1M351 13h1M182 14h1M186 14h1M285 14h1M288 14h2M292 14h1M298 14h1M301 14h1M327 14h1M333 14h1M345 14h1M199 15h1M270 15h1M305 15h1M307 15h1M316 15h1M326 15h1M338 15h1M348 15h1M352 15h1M198 16h1M301 16h1M337 16h1M198 17h1M303 17h1M311 17h1M257 18h1M275 18h1M285 18h1M297 18h1M263 19h1M271 19h1M329 19h1M326 20h1M261 21h1M299 21h1M257 24h1M273 27h1M272 28h1M292 29h1M101 33h1M124 33h2M132 34h1M111 35h1M262 35h1M91 36h1M97 36h1M121 36h1M138 36h1M145 36h1M155 36h1M258 36h1M99 37h1M101 37h1M117 37h1M119 37h1M123 37h1M127 37h1M136 37h1M139 37h1M142 37h1M149 37h1M92 38h1M95 38h1M108 38h1M119 38h1M130 38h1M144 38h1M88 39h1M91 39h1M95 39h1M98 39h1M105 39h1M113 39h1M119 39h1M144 39h1M154 39h1M114 40h1M130 40h1M134 40h1M335 40h1M345 40h1M90 41h2M101 41h1M113 41h1M117 41h1M120 41h1M138 41h1M142 41h2M160 41h1M167 41h1M260 41h1M89 42h1M94 42h1M104 42h1M120 42h1M139 42h1M143 42h2M150 42h1M164 42h1M169 42h1M308 42h1M108 43h1M113 43h1M116 43h1M120 43h1M127 43h1M133 43h1M140 43h1M149 43h1M160 43h1M170 43h1M288 43h1M318 43h1M329 43h1M61 44h1M83 44h1M93 44h1M97 44h2M134 44h1M136 44h1M140 44h1M156 44h1M158 44h1M167 44h1M170 44h1M259 44h1M273 44h1M307 44h1M320 44h2M339 44h1M9 45h1M29 45h1M33 45h1M43 45h1M52 45h1M62 45h1M69 45h1M81 45h1M87 45h1M90 45h1M111 45h1M114 45h1M149 45h2M166 45h1M175 45h1M182 45h1M216 45h1M228 45h1M309 45h1M311 45h1M336 45h1M338 45h1M12 46h1M15 46h1M18 46h1M30 46h1M45 46h1M50 46h1M55 46h1M59 46h1M74 46h1M95 46h1M98 46h1M103 46h1M111 46h1M114 46h1M136 46h1M140 46h1M149 46h1M159 46h1M161 46h1M186 46h1M203 46h1M207 46h1M243 46h1M248 46h2M269 46h1M284 46h2M289 46h1M299 46h1M302 46h1M328 46h1M335 46h1M347 46h1M32 47h1M39 47h1M58 47h1M93 47h2M96 47h1M117 47h1M125 47h2M130 47h1M133 47h1M144 47h1M161 47h1M164 47h1M167 47h1M181 47h1M183 47h1M188 47h1M194 47h2M209 47h1M220 47h1M223 47h1M225 47h1M244 47h1M284 47h2M312 47h2M318 47h1M331 47h1M333 47h1M347 47h2M7 48h1M29 48h1M32 48h1M39 48h1M58 48h1M98 48h1M113 48h1M125 48h2M133 48h1M144 48h1M150 48h1M155 48h1M165 48h1M172 48h1M201 48h1M204 48h1M207 48h1M222 48h1M237 48h1M248 48h1M262 48h1M291 48h1M297 48h1M299 48h1M306 48h1M324 48h1M328 48h1M5 49h1M10 49h1M35 49h1M50 49h2M56 49h1M124 49h1M136 49h1M142 49h1M149 49h1M165 49h2M172 49h1M209 49h1M219 49h1M222 49h1M224 49h2M228 49h1M232 49h1M275 49h1M291 49h1M306 49h1M308 49h1M347 49h1M46 50h2M57 50h1M64 50h1M66 50h1M77 50h1M91 50h1M93 50h1M96 50h1M114 50h1M124 50h1M132 50h1M137 50h1M140 50h1M155 50h2M163 50h1M165 50h1M173 50h1M186 50h1M190 50h1M199 50h1M214 50h1M221 50h1M226 50h1M245 50h1M303 50h1M348 50h1M16 51h1M18 51h1M37 51h1M84 51h1M89 51h1M92 51h1M106 51h1M109 51h1M115 51h1M119 51h1M140 51h1M153 51h1M160 51h1M164 51h1M177 51h1M198 51h1M200 51h1M217 51h1M234 51h2M237 51h2M242 51h2M290 51h2M293 51h1M296 51h1M331 51h1M338 51h1M0 52h1M33 52h1M45 52h1M67 52h1M115 52h1M124 52h1M157 52h1M161 52h1M165 52h1M215 52h1M221 52h1M268 52h1M288 52h1M324 52h1M352 52h1M5 53h1M23 53h1M31 53h1M41 53h1M64 53h1M120 53h1M137 53h2M155 53h1M163 53h1M174 53h1M181 53h1M195 53h1M225 53h1M284 53h1M313 53h1M315 53h1M322 53h1M328 53h1M336 53h1M348 53h1M55 54h2M95 54h1M112 54h1M115 54h1M134 54h1M138 54h1M146 54h1M205 54h1M216 54h1M222 54h1M226 54h1M239 54h1M244 54h1M345 54h1M349 54h1M37 55h1M39 55h1M71 55h1M119 55h1M127 55h1M149 55h1M173 55h1M182 55h1M198 55h3M273 55h1M275 55h1M308 55h1M312 55h1M61 56h1M87 56h1M102 56h2M136 56h2M142 56h1M148 56h1M196 56h1M200 56h1M208 56h1M219 56h1M231 56h2M234 56h1M276 56h1M328 56h1M344 56h1M24 57h1M29 57h1M33 57h1M39 57h1M55 57h1M70 57h1M78 57h1M99 57h1M121 57h1M126 57h1M134 57h1M139 57h1M142 57h1M146 57h1M151 57h1M162 57h1M204 57h1M210 57h1M273 57h1M275 57h1M290 57h1M317 57h1M347 57h1M5 58h1M35 58h1M38 58h1M72 58h1M93 58h1M99 58h1M105 58h1M112 58h1M117 58h1M119 58h1M126 58h1M139 58h1M144 58h1M153 58h1M174 58h1M176 58h1M182 58h1M194 58h2M199 58h2M219 58h1M225 58h1M240 58h1M242 58h1M288 58h1M329 58h1M29 59h1M63 59h1M78 59h1M87 59h1M91 59h1M94 59h1M113 59h1M146 59h1M149 59h1M155 59h1M161 59h1M219 59h1M246 59h1M268 59h2M284 59h1M310 59h1M326 59h1M20 60h1M22 60h1M33 60h1M40 60h1M44 60h1M69 60h1M92 60h1M97 60h1M105 60h1M138 60h1M141 60h2M227 60h1M270 60h1M294 60h1M319 60h1M19 61h1M49 61h1M78 61h1M80 61h1M84 61h1M89 61h1M117 61h1M183 61h1M197 61h1M206 61h1M240 61h1M243 61h1M249 61h1M301 61h1M312 61h1M16 62h1M66 62h1M103 62h1M127 62h1M150 62h1M160 62h1M166 62h1M169 62h1M211 62h1M217 62h1M222 62h1M245 62h1M297 62h1M351 62h1M20 63h1M46 63h1M71 63h1M77 63h1M89 63h1M91 63h1M94 63h1M115 63h1M118 63h1M128 63h2M143 63h1M193 63h1M221 63h1M239 63h1M289 63h1M300 63h1M302 63h1"/>
<path stroke="#3f00ff" d="M22 0h1M30 0h1M32 0h1M36 0h1M60 0h1M131 0h1M133 0h1M140 0h1M149 0h1M152 0h1M171 0h1M178 0h1M195 0h1M212 0h1M214 0h1M218 0h1M223 0h1M261 0h1M335 0h1M23 1h1M43 1h1M58 1h1M151 1h1M155 1h1M157 1h2M176 1h2M198 1h3M203 1h1M222 1h1M233 1h1M248 1h1M256 1h1M286 1h1M294 1h1M296 1h1M310 1h1M313 1h1M323 1h1M4 2h1M21 2h1M28 2h1M46 2h1M65 2h1M84 2h1M128 2h1M157 2h1M166 2h1M168 2h1M170 2h1M177 2h1M182 2h2M194 2h1M204 2h1M210 2h1M224 2h1M247 2h2M290 2h1M295 2h2M344 2h1M20 3h1M60 3h1M171 3h1M173 3h1M184 3h1M186 3h1M189 3h1M197 3h1M214 3h1M230 3h1M248 3h2M287 3h1M295 3h1M317 3h1M33 4h1M140 4h1M168 4h1M172 4h1M178 4h1M189 4h1M219 4h1M235 4h1M268 4h1M287 4h1M298 4h1M301 4h1M303 4h1M330 4h1M341 4h1M21 5h1M26 5h1M55 5h1M65 5h1M72 5h1M124 5h1M131 5h1M150 5h1M154 5h1M175 5h1M184 5h1M194 5h1M197 5h1M227 5h1M234 5h1M285 5h1M290 5h1M294 5h1M305 5h1M319 5h1M331 5h1M337 5h1M10 6h1M30 6h1M36 6h1M59 6h1M150 6h1M169 6h1M182 6h1M192 6h1M195 6h1M198 6h1M207 6h1M212 6h1M221 6h1M230 6h1M237 6h1M273 6h1M303 6h2M311 6h1M313 6h1M22 7h1M40 7h1M148 7h1M170 7h1M177 7h1M185 7h1M187 7h2M225 7h1M237 7h1M249 7h1M258 7h1M293 7h2M298 7h1M315 7h1M327 7h1M331 7h1M4 8h1M26 8h1M62 8h1M182 8h1M218 8h1M230 8h1M271 8h1M290 8h1M309 8h1M319 8h1M332 8h1M344 8h1M347 8h1M28 9h1M36 9h1M170 9h1M175 9h2M178 9h1M180 9h1M196 9h1M211 9h1M286 9h1M302 9h1M347 9h1M22 10h1M70 10h1M171 10h1M181 10h1M184 10h1M198 10h1M208 10h1M212 10h1M215 10h2M229 10h1M247 10h1M262 10h1M269 10h1M274 10h1M294 10h1M309 10h1M328 10h1M22 11h1M173 11h1M175 11h1M182 11h1M200 11h1M300 11h1M309 11h1M174 12h1M187 12h1M215 12h1M300 12h1M315 12h1M317 12h1M332 12h1M341 12h1M187 13h1M190 13h1M215 13h1M220 13h1M222 13h1M268 13h1M289 13h1M292 13h1M298 13h1M303 13h2M320 13h1M322 13h1M329 13h1M335 13h1M341 13h1M352 13h1M184 14h1M264 14h1M290 14h1M299 14h1M305 14h1M337 14h1M350 14h1M352 14h1M182 15h1M223 15h1M269 15h1M284 15h1M309 15h1M327 15h1M256 16h1M311 16h1M274 17h1M307 17h1M285 19h1M303 19h1M313 19h1M257 20h1M289 20h1M339 20h1M290 21h1M296 21h1M297 22h1M298 23h1M267 24h1M274 24h1M284 25h1M268 26h1M256 28h1M291 28h1M270 29h1M243 30h1M242 31h1M95 33h1M103 33h1M106 33h1M111 33h1M120 33h1M122 33h1M239 33h1M88 34h1M105 34h1M107 34h1M115 34h1M123 34h1M151 34h1M240 34h1M275 34h1M98 35h1M123 35h1M103 36h1M118 36h1M127 36h1M130 36h1M140 36h1M154 36h1M156 36h1M276 36h1M299 36h1M89 37h1M102 37h1M105 37h1M113 37h1M134 37h1M137 37h1M99 38h1M104 38h1M106 38h1M109 38h1M120 38h1M127 38h1M133 38h1M143 38h1M146 38h1M157 38h1M286 38h1M92 39h1M102 39h1M114 39h2M125 39h1M128 39h1M131 39h1M147 39h1M167 39h1M99 40h1M116 40h1M125 40h1M136 40h1M138 40h2M144 40h1M150 40h1M155 40h1M166 40h1M175 40h1M96 41h1M105 41h1M109 41h1M111 41h2M127 41h1M151 41h1M109 42h1M111 42h1M130 42h1M154 42h1M156 42h1M90 43h1M103 43h1M141 43h1M147 43h1M154 43h1M159 43h1M165 43h1M167 43h1M169 43h1M185 43h1M271 43h1M30 44h1M74 44h1M101 44h1M103 44h1M106 44h1M116 44h1M119 44h1M128 44h1M139 44h1M155 44h1M163 44h1M174 44h1M198 44h1M206 44h1M231 44h1M264 44h1M271 44h1M285 44h1M294 44h1M304 44h1M315 44h1M318 44h1M333 44h1M347 44h1M4 45h1M15 45h1M26 45h1M57 45h1M64 45h1M66 45h1M71 45h1M77 45h1M103 45h1M117 45h1M126 45h1M132 45h1M140 45h1M160 45h2M164 45h1M169 45h1M172 45h2M260 45h1M270 45h1M293 45h1M301 45h1M304 45h1M319 45h2M329 45h1M334 45h1M351 45h1M1 46h1M16 46h1M24 46h1M33 46h1M62 46h1M64 46h1M67 46h1M73 46h1M82 46h1M119 46h1M133 46h1M138 46h1M150 46h1M155 46h1M160 46h1M180 46h1M198 46h1M206 46h1M215 46h1M225 46h1M238 46h1M242 46h1M245 46h1M286 46h2M300 46h1M305 46h1M320 46h1M31 47h1M37 47h1M79 47h1M84 47h1M88 47h2M101 47h1M123 47h1M150 47h1M156 47h1M170 47h1M196 47h1M229 47h1M262 47h1M301 47h1M314 47h1M329 47h1M332 47h1M350 47h1M1 48h1M12 48h1M57 48h1M73 48h1M77 48h1M89 48h1M91 48h1M100 48h1M102 48h1M135 48h1M139 48h1M141 48h1M164 48h1M168 48h1M176 48h1M188 48h1M191 48h1M195 48h1M202 48h1M213 48h1M218 48h1M223 48h1M233 48h1M276 48h1M301 48h1M319 48h1M37 49h1M46 49h1M59 49h1M104 49h1M130 49h2M133 49h2M170 49h1M184 49h1M186 49h1M193 49h1M235 49h1M255 49h1M303 49h1M327 49h1M349 49h1M11 50h1M70 50h1M92 50h1M99 50h1M104 50h1M126 50h1M135 50h1M153 50h1M162 50h1M185 50h1M220 50h1M225 50h1M227 50h1M231 50h1M311 50h1M343 50h1M51 51h1M97 51h1M99 51h1M105 51h1M110 51h1M124 51h1M129 51h1M135 51h1M169 51h1M172 51h1M186 51h1M188 51h1M195 51h1M207 51h1M227 51h1M239 51h1M273 51h1M342 51h1M346 51h1M11 52h1M37 52h1M81 52h1M90 52h1M101 52h1M138 52h1M148 52h1M150 52h1M153 52h2M171 52h1M188 52h1M239 52h1M249 52h1M261 52h1M330 52h1M338 52h1M29 53h1M35 53h1M42 53h1M48 53h1M78 53h1M96 53h1M142 53h1M144 53h1M178 53h1M187 53h1M197 53h1M209 53h1M219 53h1M259 53h1M269 53h1M306 53h1M317 53h1M330 53h1M26 54h1M32 54h1M70 54h1M89 54h1M125 54h1M141 54h1M150 54h1M153 54h1M183 54h1M185 54h1M201 54h1M248 54h1M268 54h1M289 54h1M6 55h1M10 55h1M157 55h1M181 55h1M202 55h1M234 55h1M271 55h1M301 55h1M306 55h1M342 55h1M2 56h1M43 56h1M47 56h1M62 56h1M104 56h2M126 56h1M144 56h1M169 56h1M204 56h1M227 56h1M32 57h1M47 57h1M61 57h1M74 57h1M111 57h1M125 57h1M131 57h1M133 57h1M171 57h1M175 57h1M177 57h1M199 57h1M205 57h1M208 57h1M211 57h1M214 57h1M243 57h1M256 57h1M349 57h1M22 58h1M40 58h1M63 58h1M107 58h1M122 58h1M130 58h1M152 58h1M186 58h1M270 58h1M289 58h1M310 58h1M348 58h1M9 59h1M14 59h1M33 59h1M55 59h1M143 59h1M156 59h1M167 59h1M181 59h2M186 59h1M276 59h1M312 59h1M9 60h1M50 60h1M56 60h1M150 60h1M165 60h1M202 60h1M316 60h1M2 61h2M25 61h1M30 61h1M61 61h1M73 61h1M96 61h1M98 61h1M125 61h1M135 61h1M148 61h1M192 61h1M292 61h1M108 62h1M122 62h1M128 62h1M157 62h1M201 62h1M212 62h1M242 62h1M255 62h1M294 62h1M325 62h1M6 63h1M17 63h1M43 63h1M112 63h1M131 63h1M147 63h1M159 63h1M162 63h1M179 63h1M236 63h1M255 63h1M267 63h1M276 63h1M287 63h1M292 63h1"/>
<path stroke="#3100ff" d="M11 0h1M15 0h1M33 0h1M64 0h1M71 0h1M82 0h1M124 0h1M132 0h1M136 0h2M144 0h1M177 0h1M197 0h1M203 0h1M216 0h1M236 0h1M243 0h1M298 0h1M309 0h1M351 0h1M12 1h1M30 1h1M47 1h1M79 1h1M123 1h1M137 1h1M144 1h1M153 1h1M164 1h1M178 1h1M183 1h1M187 1h1M214 1h1M239 1h1M312 1h1M20 2h1M23 2h3M56 2h1M130 2h1M133 2h1M147 2h1M163 2h1M167 2h1M191 2h1M201 2h1M213 2h1M217 2h1M286 2h1M306 2h1M1 3h1M21 3h1M36 3h1M126 3h2M148 3h1M152 3h1M163 3h1M177 3h1M181 3h1M196 3h1M205 3h1M221 3h1M223 3h1M232 3h1M323 3h1M338 3h1M348 3h1M11 4h1M17 4h1M25 4h2M37 4h1M59 4h1M63 4h1M67 4h1M147 4h1M181 4h1M204 4h1M207 4h1M220 4h1M223 4h1M335 4h1M41 5h1M64 5h1M168 5h1M212 5h1M221 5h1M224 5h1M303 5h2M318 5h1M321 5h1M352 5h1M1 6h1M58 6h1M60 6h1M70 6h1M151 6h1M153 6h1M170 6h1M177 6h1M191 6h1M193 6h1M197 6h1M219 6h2M231 6h1M233 6h1M287 6h1M293 6h1M295 6h2M318 6h1M345 6h1M44 7h1M125 7h1M154 7h1M181 7h1M196 7h1M198 7h1M212 7h1M214 7h1M216 7h1M236 7h1M246 7h1M271 7h1M300 7h1M319 7h1M11 8h1M18 8h1M30 8h1M36 8h1M84 8h1M169 8h1M171 8h2M183 8h1M190 8h1M194 8h1M211 8h1M220 8h2M235 8h2M268 8h1M296 8h1M305 8h1M316 8h1M328 8h1M350 8h1M169 9h1M174 9h1M183 9h1M202 9h1M220 9h2M232 9h1M246 9h1M306 9h1M329 9h1M16 10h1M172 10h1M174 10h1M187 10h1M222 10h1M234 10h1M246 10h1M248 10h1M289 10h1M322 10h1M193 11h1M210 11h1M284 11h1M288 11h1M292 11h1M295 11h1M319 11h1M321 11h1M171 12h1M188 12h1M193 12h1M309 12h1M337 12h1M347 12h1M179 13h1M189 13h1M198 13h1M203 13h1M205 13h1M271 13h1M300 13h1M319 13h1M332 13h1M338 13h1M345 13h1M176 14h1M194 14h1M198 14h1M206 14h1M215 14h1M220 14h1M233 14h1M284 14h1M295 14h1M306 14h1M314 14h3M328 14h1M332 14h1M335 14h1M342 14h1M349 14h1M174 15h1M225 15h1M232 15h1M255 15h1M263 15h1M287 15h1M318 15h1M333 15h2M341 15h1M182 16h1M193 16h1M222 16h1M289 16h1M296 16h1M189 17h1M231 17h1M262 17h1M271 17h1M286 17h1M291 17h1M286 18h1M292 18h1M306 18h1M315 18h1M324 18h1M256 19h1M272 19h1M295 19h1M306 19h1M308 19h1M293 20h1M274 21h1M287 21h1M304 21h1M299 23h1M261 26h1M332 27h1M286 29h1M247 31h1M298 31h1M123 32h1M115 33h1M126 33h1M307 33h1M91 34h1M103 34h1M112 34h1M122 34h1M126 34h2M153 34h1M175 34h1M293 34h1M107 35h1M109 35h1M113 35h2M116 35h1M124 35h1M133 35h1M138 35h1M155 35h1M269 35h1M88 36h1M93 36h1M110 36h1M112 36h2M119 36h1M124 36h2M131 36h1M135 36h1M150 36h1M269 36h1M91 37h1M98 37h1M107 37h2M111 37h1M122 37h1M125 37h1M130 37h1M148 37h1M161 37h1M163 37h1M96 38h2M100 38h1M105 38h1M118 38h1M122 38h1M134 38h1M149 38h1M151 38h1M172 38h1M175 38h1M255 38h1M258 38h1M269 38h1M97 39h1M99 39h1M116 39h1M120 39h1M145 39h1M168 39h1M284 39h1M92 40h2M105 40h2M109 40h1M115 40h1M120 40h1M131 40h1M147 40h2M152 40h1M169 40h1M272 40h1M299 40h1M100 41h1M121 41h1M135 41h2M158 41h2M164 41h1M172 41h1M290 41h1M299 41h2M319 41h1M330 41h1M335 41h1M337 41h2M91 42h2M97 42h2M105 42h2M108 42h1M124 42h1M135 42h1M137 42h1M146 42h1M157 42h1M175 42h1M180 42h1M293 42h1M89 43h1M95 43h1M112 43h1M122 43h1M126 43h1M131 43h1M156 43h1M192 43h1M319 43h1M323 43h1M331 43h3M340 43h1M348 43h1M4 44h1M34 44h1M38 44h1M65 44h1M96 44h1M102 44h1M144 44h1M146 44h1M154 44h1M159 44h1M172 44h1M177 44h1M192 44h1M212 44h1M298 44h1M322 44h1M344 44h1M40 45h1M51 45h1M53 45h2M68 45h1M78 45h1M83 45h2M86 45h1M92 45h1M107 45h1M113 45h1M125 45h1M131 45h1M133 45h1M155 45h1M181 45h1M198 45h1M203 45h1M209 45h1M220 45h1M223 45h1M267 45h1M299 45h2M308 45h1M312 45h1M314 45h1M332 45h1M341 45h2M344 45h1M346 45h1M27 46h1M65 46h1M100 46h2M125 46h2M135 46h1M169 46h1M174 46h1M187 46h1M194 46h1M199 46h1M202 46h1M209 46h1M212 46h1M214 46h1M219 46h1M227 46h1M241 46h1M273 46h1M294 46h1M306 46h1M308 46h1M17 47h1M49 47h1M106 47h1M114 47h1M118 47h1M122 47h1M149 47h1M174 47h1M185 47h1M189 47h2M192 47h1M201 47h2M210 47h2M248 47h2M302 47h1M317 47h1M323 47h1M328 47h1M344 47h1M349 47h1M18 48h1M38 48h1M53 48h1M84 48h1M93 48h1M101 48h1M110 48h1M174 48h1M196 48h1M209 48h1M215 48h1M221 48h1M235 48h1M344 48h1M78 49h1M101 49h1M103 49h1M118 49h1M121 49h1M126 49h1M143 49h1M160 49h1M185 49h1M187 49h1M198 49h1M210 49h1M248 49h1M286 49h1M289 49h1M299 49h1M331 49h1M351 49h1M31 50h1M88 50h1M111 50h2M116 50h1M159 50h1M192 50h1M249 50h1M272 50h1M293 50h1M333 50h1M349 50h1M0 51h1M14 51h1M21 51h1M49 51h1M147 51h1M194 51h1M208 51h1M216 51h1M226 51h1M263 51h1M268 51h1M307 51h1M309 51h1M341 51h1M14 52h1M41 52h1M75 52h1M92 52h1M99 52h1M135 52h1M209 52h1M216 52h1M219 52h1M247 52h1M332 52h1M348 52h1M130 53h1M140 53h1M193 53h1M232 53h1M237 53h1M264 53h1M271 53h1M298 53h1M339 53h1M5 54h1M38 54h1M49 54h1M92 54h1M164 54h2M177 54h1M190 54h1M214 54h1M224 54h1M288 54h1M307 54h1M328 54h1M19 55h1M21 55h1M72 55h1M88 55h1M112 55h1M185 55h1M218 55h1M270 55h1M81 56h1M128 56h1M133 56h1M155 56h1M218 56h1M222 56h1M291 56h1M317 56h1M329 56h1M27 57h1M56 57h1M102 57h1M130 57h1M157 57h2M219 57h1M238 57h1M276 57h1M316 57h1M352 57h1M103 58h1M138 58h1M147 58h1M161 58h1M68 59h1M127 59h1M136 59h1M168 59h1M178 59h1M187 59h1M235 59h1M272 59h1M115 60h1M180 60h1M206 60h1M260 60h1M290 60h1M45 61h1M55 61h1M72 61h1M75 61h1M88 61h1M108 61h1M115 61h1M185 61h1M297 61h1M94 62h1M113 62h1M133 62h1M154 62h1M183 62h1M208 62h1M221 62h1M327 62h1M332 62h1M155 63h1M232 63h1M328 63h1"/>
<path stroke="#2300ff" d="M1 0h1M9 0h1M29 0h1M56 0h1M61 0h1M63 0h1M70 0h1M72 0h1M77 0h1M134 0h1M155 0h1M189 0h1M202 0h1M213 0h1M215 0h1M230 0h2M238 0h1M240 0h1M301 0h1M4 1h1M10 1h1M15 1h1M17 1h1M20 1h1M33 1h1M52 1h1M65 1h1M148 1h1M163 1h1M175 1h1M205 1h1M207 1h1M229 1h1M235 1h1M238 1h1M240 1h1M299 1h1M12 2h2M26 2h1M38 2h1M59 2h1M68 2h1M137 2h1M143 2h1M149 2h1M155 2h1M169 2h1M171 2h1M173 2h1M180 2h2M195 2h1M197 2h1M207 2h1M219 2h1M221 2h1M229 2h1M243 2h1M249 2h1M346 2h1M12 3h1M15 3h1M22 3h1M32 3h1M59 3h1M73 3h1M83 3h1M129 3h1M134 3h1M140 3h1M149 3h1M155 3h2M166 3h1M176 3h1M179 3h1M195 3h1M201 3h1M207 3h1M229 3h1M237 3h1M247 3h1M256 3h1M1 4h1M10 4h1M32 4h1M44 4h1M55 4h1M84 4h1M125 4h1M129 4h1M133 4h1M143 4h1M148 4h1M150 4h1M158 4h1M171 4h1M182 4h1M196 4h1M198 4h1M208 4h1M222 4h1M236 4h1M308 4h1M310 4h1M6 5h1M8 5h1M30 5h1M68 5h1M156 5h1M180 5h1M188 5h1M195 5h1M199 5h1M219 5h1M246 5h1M289 5h1M306 5h1M344 5h1M5 6h1M25 6h1M33 6h1M149 6h1M155 6h1M172 6h1M206 6h1M214 6h1M319 6h1M321 6h1M23 7h1M25 7h1M28 7h1M195 7h1M232 7h1M235 7h1M343 7h1M6 8h1M14 8h1M17 8h1M20 8h1M25 8h1M29 8h1M39 8h1M64 8h1M71 8h1M156 8h1M170 8h1M181 8h1M188 8h1M209 8h1M212 8h1M217 8h1M224 8h1M24 9h1M30 9h1M39 9h1M70 9h1M185 9h1M192 9h1M206 9h1M224 9h1M226 9h1M235 9h1M270 9h1M313 9h1M315 9h1M175 10h1M192 10h1M204 10h1M209 10h3M214 10h1M218 10h2M288 10h1M303 10h1M176 11h1M185 11h1M213 11h1M217 11h1M219 11h1M270 11h1M176 12h1M178 12h1M206 12h1M220 12h1M232 12h1M264 12h1M268 12h1M270 12h2M293 12h1M302 12h1M344 12h1M176 13h1M184 13h2M193 13h1M213 13h1M217 13h1M286 13h1M294 13h1M301 13h1M321 13h1M179 14h1M192 14h1M208 14h1M212 14h1M218 14h1M225 14h1M260 14h1M270 14h1M309 14h1M311 14h1M331 14h1M183 15h1M194 15h2M205 15h1M213 15h1M229 15h1M276 15h1M306 15h1M308 15h1M313 15h1M344 15h1M346 15h1M34 16h1M212 16h1M312 16h1M328 16h1M341 16h1M192 17h1M260 17h1M270 17h1M289 17h1M292 17h1M312 17h1M299 18h1M304 18h1M268 19h1M296 19h1M300 19h1M300 20h1M305 20h1M271 21h1M300 21h1M306 21h1M305 22h1M308 22h1M310 22h1M271 23h1M263 24h1M271 26h1M302 26h1M257 28h1M293 29h1M256 30h1M269 30h1M213 31h1M245 31h1M268 31h1M309 31h1M115 32h1M118 32h1M121 32h1M214 32h1M238 32h1M241 32h1M286 32h1M93 33h1M130 33h1M99 34h1M104 34h1M109 34h1M111 34h1M119 34h1M130 34h1M140 34h1M142 34h1M238 34h1M121 35h1M154 35h1M268 35h1M307 35h1M96 36h1M101 36h2M122 36h1M141 36h1M146 36h1M153 36h1M256 36h1M292 36h1M311 36h1M88 37h1M90 37h1M143 37h1M275 37h1M98 38h1M111 38h1M115 38h1M125 38h1M131 38h1M136 38h1M139 38h1M152 38h1M154 38h1M166 38h1M267 38h1M335 38h1M93 39h1M103 39h1M107 39h1M117 39h1M140 39h1M142 39h1M146 39h1M159 39h1M164 39h1M169 39h1M175 39h1M256 39h1M293 39h1M108 40h1M118 40h1M121 40h1M128 40h1M133 40h1M143 40h1M162 40h2M171 40h1M178 40h1M259 40h1M269 40h1M102 41h1M130 41h1M150 41h1M161 41h1M166 41h1M178 41h1M310 41h1M101 42h1M125 42h1M138 42h1M168 42h1M173 42h1M305 42h1M307 42h1M311 42h1M339 42h1M344 42h1M349 42h1M61 43h1M88 43h1M91 43h1M98 43h1M115 43h1M118 43h1M121 43h1M125 43h1M144 43h1M150 43h1M168 43h1M186 43h1M255 43h1M260 43h1M314 43h1M322 43h1M15 44h1M51 44h1M73 44h1M91 44h1M133 44h1M151 44h1M166 44h1M184 44h1M190 44h1M222 44h1M230 44h1M300 44h1M306 44h1M314 44h1M337 44h1M0 45h2M5 45h2M11 45h1M14 45h1M19 45h1M21 45h1M32 45h1M34 45h1M37 45h1M48 45h1M74 45h1M79 45h1M106 45h1M123 45h1M136 45h1M141 45h1M156 45h1M162 45h1M185 45h1M194 45h1M213 45h1M230 45h1M235 45h1M240 45h1M245 45h1M249 45h1M286 45h1M303 45h1M307 45h1M321 45h1M331 45h1M337 45h1M340 45h1M4 46h1M32 46h1M105 46h1M122 46h1M137 46h1M151 46h1M162 46h1M167 46h2M170 46h1M176 46h2M193 46h1M222 46h1M236 46h1M240 46h1M244 46h1M246 46h1M288 46h1M296 46h1M316 46h1M330 46h1M349 46h1M36 47h1M56 47h1M62 47h1M82 47h1M108 47h1M119 47h1M172 47h1M182 47h1M187 47h1M214 47h1M226 47h1M231 47h1M236 47h1M238 47h1M274 47h1M288 47h1M320 47h1M335 47h1M64 48h1M78 48h1M90 48h1M185 48h1M193 48h1M333 48h1M106 49h1M156 49h1M213 49h1M233 49h1M264 49h1M344 49h1M103 50h1M123 50h1M148 50h1M174 50h1M188 50h1M233 50h1M261 50h1M317 50h1M31 51h1M98 51h1M158 51h1M178 51h1M202 51h1M4 52h1M51 52h1M71 52h1M84 52h1M93 52h1M123 52h1M234 52h1M273 52h1M275 52h1M16 53h1M74 53h1M134 53h1M189 53h1M302 53h1M20 54h1M122 54h1M180 54h1M237 54h1M4 55h1M13 55h1M92 55h1M63 56h1M74 56h1M122 56h1M257 56h1M217 57h1M232 57h1M270 57h1M56 58h1M61 58h1M100 58h1M168 58h1M196 58h1M204 58h1M211 58h1M248 58h1M57 59h1M208 59h1M243 59h1M249 59h1M10 60h1M31 60h1M36 60h1M57 60h1M80 60h1M121 60h1M341 60h1M12 61h1M101 61h2M271 61h1M348 61h1M76 62h1M224 62h1M249 62h1M317 62h1M113 63h1M120 63h1M167 63h1"/>
<path stroke="#1500ff" d="M2 0h1M17 0h1M21 0h1M25 0h1M39 0h1M46 0h1M49 0h1M54 0h1M62 0h1M67 0h1M76 0h1M86 0h1M129 0h1M135 0h1M172 0h1M207 0h1M220 0h1M224 0h1M234 0h1M305 0h1M0 1h1M22 1h1M27 1h1M31 1h1M37 1h1M42 1h1M51 1h1M54 1h1M61 1h1M82 1h1M84 1h1M125 1h4M138 1h1M159 1h1M190 1h1M204 1h1M216 1h1M234 1h1M236 1h2M247 1h1M287 1h1M0 2h2M14 2h1M29 2h1M63 2h2M67 2h1M73 2h1M135 2h1M138 2h1M142 2h1M150 2h1M154 2h1M160 2h1M165 2h1M222 2h1M264 2h1M347 2h1M3 3h1M17 3h1M33 3h1M41 3h1M54 3h1M70 3h1M145 3h1M147 3h1M167 3h1M16 4h1M24 4h1M31 4h1M51 4h1M69 4h1M144 4h1M151 4h2M155 4h2M159 4h1M162 4h1M165 4h1M184 4h1M199 4h1M230 4h1M238 4h1M28 5h1M31 5h1M40 5h1M46 5h1M59 5h1M66 5h1M69 5h1M73 5h1M85 5h1M151 5h1M166 5h1M170 5h1M200 5h1M204 5h1M208 5h1M235 5h1M255 5h1M311 5h1M345 5h1M2 6h1M18 6h1M40 6h1M54 6h2M63 6h1M68 6h1M123 6h1M154 6h1M174 6h1M224 6h1M2 7h1M4 7h1M6 7h1M8 7h1M33 7h1M43 7h1M63 7h1M151 7h1M167 7h2M217 7h1M234 7h1M335 7h1M2 8h1M66 8h1M72 8h1M125 8h1M150 8h1M152 8h1M215 8h1M222 8h1M228 8h1M231 8h1M317 8h1M9 9h1M154 9h1M188 9h1M191 9h1M195 9h1M233 9h1M322 9h1M345 9h1M73 10h1M170 10h1M183 10h1M199 10h1M217 10h1M225 10h1M258 10h1M276 10h1M308 10h1M186 11h1M199 11h1M201 11h1M208 11h1M216 11h1M218 11h1M227 11h1M16 12h1M28 12h1M65 12h1M186 12h1M194 12h1M198 12h1M210 12h1M212 12h1M222 12h1M224 12h3M233 12h1M294 12h1M313 12h1M321 12h1M172 13h1M191 13h1M200 13h2M208 13h1M211 13h1M226 13h1M228 13h1M231 13h1M293 13h1M333 13h1M342 13h1M65 14h1M174 14h1M205 14h1M207 14h1M222 14h1M261 14h1M300 14h1M320 14h1M334 14h1M210 15h1M212 15h1M217 15h1M291 15h1M322 15h1M330 15h1M339 15h1M342 15h1M345 15h1M179 16h1M192 16h1M201 16h1M207 16h1M216 16h1M270 16h1M276 16h1M288 16h1M290 16h1M348 16h1M31 17h1M285 17h1M288 17h1M316 17h1M319 17h1M334 17h1M341 17h1M267 18h1M286 19h2M298 19h1M309 19h1M322 19h1M338 19h1M310 20h1M259 21h1M310 21h1M341 21h1M299 22h1M264 23h1M268 23h1M308 23h1M256 25h1M291 27h1M239 28h2M261 28h1M213 30h2M268 30h1M93 31h1M239 31h1M246 31h1M275 31h1M297 31h1M101 32h1M107 32h1M128 32h1M144 32h1M175 32h1M213 32h1M240 32h1M308 32h1M88 33h1M107 33h1M113 33h1M128 33h1M135 33h1M241 33h1M323 33h1M102 34h1M149 34h1M256 34h1M94 35h1M105 35h1M110 35h1M112 35h1M118 35h1M129 35h1M148 35h2M152 35h1M163 35h1M170 35h1M175 35h1M293 35h1M106 36h1M117 36h1M120 36h1M126 36h1M137 36h1M144 36h1M151 36h1M158 36h2M164 36h1M167 36h1M260 36h1M263 36h1M319 36h1M104 37h1M110 37h1M131 37h1M135 37h1M150 37h1M152 37h1M158 37h1M160 37h1M170 37h1M175 37h1M263 37h1M288 37h1M123 38h1M128 38h1M167 38h1M173 38h1M285 38h1M339 38h1M90 39h1M101 39h1M104 39h1M106 39h1M111 39h1M121 39h1M132 39h1M134 39h2M138 39h1M151 39h1M157 39h2M270 39h1M340 39h1M119 40h1M122 40h1M160 40h1M172 40h1M257 40h1M267 40h1M270 40h1M323 40h1M334 40h1M337 40h1M343 40h2M104 41h1M131 41h1M147 41h1M154 41h2M165 41h1M173 41h1M175 41h1M257 41h1M287 41h1M292 41h1M295 41h1M305 41h1M52 42h1M118 42h2M133 42h1M140 42h1M147 42h1M152 42h1M160 42h3M167 42h1M172 42h1M178 42h1M272 42h1M290 42h1M310 42h1M319 42h1M337 42h1M14 43h1M97 43h1M100 43h1M102 43h1M152 43h1M155 43h1M173 43h1M194 43h1M230 43h1M236 43h1M269 43h1M293 43h1M299 43h1M310 43h1M317 43h1M337 43h1M1 44h2M16 44h1M33 44h1M63 44h1M85 44h2M90 44h1M110 44h2M148 44h1M152 44h2M160 44h2M171 44h1M189 44h1M191 44h1M197 44h1M200 44h1M214 44h1M219 44h1M269 44h2M286 44h1M292 44h1M299 44h1M303 44h1M329 44h1M350 44h1M2 45h2M8 45h1M12 45h1M20 45h1M23 45h1M27 45h1M38 45h1M45 45h1M56 45h1M60 45h1M70 45h1M72 45h1M95 45h1M98 45h1M188 45h1M191 45h1M210 45h1M219 45h1M225 45h1M232 45h1M237 45h1M239 45h1M241 45h1M295 45h1M297 45h1M318 45h1M38 46h1M66 46h1M71 46h1M97 46h1M148 46h1M191 46h2M195 46h2M205 46h1M210 46h1M217 46h2M307 46h1M312 46h2M318 46h1M337 46h1M0 47h1M102 47h1M143 47h1M165 47h1M169 47h1M200 47h1M203 47h1M217 47h1M247 47h1M258 47h1M289 47h1M298 47h1M300 47h1M56 48h1M123 48h1M128 48h1M170 48h1M178 48h1M232 48h1M305 48h1M336 48h1M29 49h1M60 49h1M94 49h1M122 49h1M125 49h1M135 49h1M212 49h1M220 49h1M301 49h1M332 49h1M336 49h1M76 50h1M196 50h1M241 50h1M352 50h1M19 51h1M132 51h1M150 51h2M52 52h1M55 52h1M160 52h1M264 52h1M205 53h1M351 53h1M109 54h1M194 54h1M204 54h1M213 54h1M232 54h1M272 54h1M215 55h1M76 56h1M92 56h1M73 57h1M92 57h1M345 57h1M109 58h1M260 58h1M108 59h1M121 59h1M296 59h1M120 60h1M140 60h1M13 61h1M141 61h1M146 61h1M212 61h1M56 62h1M80 62h1M2 63h1M41 63h1M109 63h1M132 63h1M309 63h1"/>
<path stroke="#0700ff" d="M4 0h1M6 0h2M10 0h1M13 0h2M26 0h1M34 0h2M38 0h1M40 0h1M47 0h1M65 0h1M69 0h1M84 0h2M87 0h1M96 0h1M125 0h1M138 0h1M142 0h1M146 0h2M161 0h1M173 0h1M183 0h1M235 0h1M2 1h1M36 1h1M39 1h1M50 1h1M57 1h1M59 1h1M66 1h1M72 1h1M77 1h2M122 1h1M124 1h1M129 1h1M132 1h1M135 1h2M145 1h1M171 1h1M179 1h1M228 1h1M328 1h1M10 2h1M16 2h1M19 2h1M33 2h1M75 2h1M131 2h1M136 2h1M140 2h1M144 2h1M146 2h1M161 2h2M179 2h1M186 2h1M234 2h1M237 2h1M241 2h1M334 2h1M2 3h1M4 3h1M25 3h1M27 3h1M35 3h1M40 3h1M43 3h1M46 3h1M55 3h1M63 3h1M69 3h1M128 3h1M130 3h1M138 3h1M157 3h1M160 3h1M306 3h1M6 4h1M40 4h1M46 4h1M53 4h1M64 4h2M72 4h2M76 4h1M142 4h1M205 4h1M285 4h1M299 4h1M319 4h1M38 5h1M71 5h1M82 5h1M84 5h1M86 5h1M145 5h1M176 5h2M179 5h1M185 5h1M213 5h1M222 5h1M230 5h1M245 5h1M8 6h1M12 6h1M15 6h1M17 6h1M29 6h1M56 6h1M72 6h1M86 6h1M213 6h1M9 7h1M11 7h1M17 7h4M36 7h2M52 7h1M61 7h1M86 7h1M149 7h2M171 7h1M176 7h1M186 7h1M245 7h1M10 8h1M28 8h1M33 8h1M40 8h1M51 8h1M54 8h1M57 8h1M69 8h1M149 8h1M206 8h1M227 8h1M229 8h1M307 8h1M54 9h1M72 9h1M146 9h1M197 9h1M223 9h1M247 9h1M249 9h1M28 10h1M35 10h2M40 10h2M62 10h1M65 10h1M155 10h1M190 10h1M206 10h1M16 11h1M18 11h1M32 11h2M40 11h1M46 11h1M66 11h1M72 11h1M170 11h1M172 11h1M179 11h1M184 11h1M190 11h1M197 11h1M212 11h1M214 11h1M226 11h1M229 11h2M0 12h1M11 12h1M22 12h1M70 12h1M156 12h1M182 12h1M200 12h1M205 12h1M207 12h1M217 12h1M221 12h1M314 12h1M22 13h1M31 13h1M71 13h1M175 13h1M178 13h1M192 13h1M194 13h1M212 13h1M227 13h1M284 13h1M34 14h1M180 14h1M189 14h1M191 14h1M201 14h1M224 14h1M226 14h1M231 14h1M276 14h1M348 14h1M16 15h1M180 15h1M214 15h1M216 15h1M224 15h1M292 15h1M300 15h1M315 15h1M320 15h1M340 15h1M176 16h1M180 16h1M206 16h1M226 16h1M284 16h1M307 16h1M322 16h1M329 16h1M335 16h1M350 16h1M352 16h1M201 17h1M263 17h1M295 17h1M313 17h1M329 17h1M290 18h1M294 18h1M309 18h1M313 18h1M316 18h1M319 18h1M328 18h1M338 18h1M292 19h1M319 19h1M348 19h1M290 20h1M298 21h1M302 21h2M268 22h1M272 22h1M287 22h1M306 22h1M275 23h1M284 23h2M287 23h1M293 23h1M296 23h1M302 23h1M321 23h1M295 24h1M298 24h1M272 27h1M275 27h1M303 27h1M212 29h2M238 29h1M240 29h1M255 29h1M268 29h1M98 30h1M238 30h1M273 30h1M289 30h1M303 30h1M95 31h1M123 31h1M190 31h1M214 31h1M240 31h1M274 31h1M88 32h1M95 32h1M98 32h1M106 32h1M112 32h1M192 32h1M195 32h1M209 32h2M297 32h1M299 32h1M109 33h1M134 33h1M139 33h1M158 33h1M169 33h1M181 33h1M192 33h1M209 33h1M246 33h1M262 33h1M291 33h1M321 33h1M93 34h1M98 34h1M113 34h1M118 34h1M128 34h1M138 34h1M145 34h1M157 34h1M170 34h1M181 34h1M260 34h1M303 34h1M332 34h1M91 35h1M93 35h1M99 35h1M119 35h1M125 35h1M130 35h1M153 35h1M173 35h1M183 35h1M192 35h1M237 35h1M245 35h1M290 35h1M297 35h1M301 35h1M100 36h1M105 36h1M108 36h2M114 36h1M128 36h1M132 36h1M142 36h1M148 36h1M161 36h1M175 36h1M190 36h1M297 36h1M328 36h1M330 36h1M94 37h1M96 37h1M109 37h1M145 37h2M151 37h1M159 37h1M162 37h1M168 37h1M285 37h1M293 37h1M90 38h1M93 38h2M121 38h1M124 38h1M126 38h1M135 38h1M165 38h1M170 38h1M257 38h1M271 38h1M291 38h1M297 38h1M331 38h1M340 38h1M94 39h1M96 39h1M109 39h1M143 39h1M150 39h1M160 39h1M165 39h1M192 39h1M260 39h1M290 39h1M334 39h1M347 39h1M88 40h1M102 40h1M104 40h1M117 40h1M137 40h1M151 40h1M153 40h1M164 40h1M167 40h1M192 40h1M255 40h1M273 40h1M275 40h1M288 40h1M290 40h1M298 40h1M301 40h1M311 40h1M123 41h1M163 41h1M174 41h1M196 41h1M268 41h1M272 41h1M275 41h1M306 41h1M312 41h1M328 41h1M339 41h1M344 41h1M136 42h1M171 42h1M192 42h1M262 42h1M270 42h1M291 42h1M329 42h1M345 42h1M7 43h1M36 43h1M124 43h1M153 43h1M158 43h1M164 43h1M171 43h1M177 43h1M181 43h1M187 43h1M189 43h1M208 43h1M210 43h1M228 43h1M302 43h1M305 43h1M330 43h1M11 44h1M13 44h1M17 44h1M22 44h2M25 44h1M39 44h3M52 44h1M67 44h1M70 44h2M89 44h1M112 44h1M157 44h1M165 44h1M187 44h1M202 44h1M204 44h1M216 44h1M249 44h1M284 44h1M296 44h1M313 44h1M336 44h1M340 44h1M351 44h2M28 45h1M31 45h1M39 45h1M73 45h1M82 45h1M91 45h1M119 45h1M176 45h1M180 45h1M184 45h1M195 45h2M201 45h1M206 45h2M214 45h1M236 45h1M238 45h1M258 45h1M328 45h1M343 45h1M89 46h1M124 46h1M153 46h1M197 46h1M204 46h1M211 46h1M213 46h1M220 46h1M223 46h1M226 46h1M232 46h1M304 46h1M317 46h1M215 47h1M219 47h1M242 47h1M296 47h1M311 47h1M321 47h1M104 48h1M121 48h1M131 48h1M211 48h1M96 49h1M99 49h1M309 49h1M246 50h1M271 50h1M122 51h1M232 51h1M272 51h1M114 52h1M244 52h1M99 54h1M342 54h1M54 55h1M86 58h1M343 58h1M102 59h1M193 59h1M348 59h1M82 60h1M67 61h1M208 61h1M345 61h1M96 63h1"/>
<path stroke="#000dff" d="M28 0h1M43 0h1M51 0h1M74 0h2M110 0h1M121 0h1M168 0h1M229 0h1M5 1h1M19 1h1M26 1h1M45 1h1M56 1h1M64 1h1M70 1h2M75 1h1M81 1h1M87 1h1M134 1h1M142 1h1M154 1h1M215 1h1M244 1h1M269 1h1M27 2h1M37 2h1M43 2h1M50 2h1M66 2h1M70 2h1M79 2h2M82 2h1M112 2h1M127 2h1M132 2h1M145 2h1M176 2h1M190 2h1M10 3h1M16 3h1M30 3h1M51 3h1M53 3h1M61 3h1M64 3h2M76 3h1M78 3h2M84 3h1M122 3h1M125 3h1M133 3h1M141 3h1M144 3h1M154 3h1M161 3h1M218 3h1M227 3h1M7 4h1M12 4h1M28 4h1M30 4h1M38 4h2M41 4h1M43 4h1M49 4h1M56 4h2M82 4h1M85 4h1M122 4h1M126 4h1M137 4h1M139 4h1M141 4h1M146 4h1M160 4h1M231 4h1M344 4h1M4 5h1M9 5h1M13 5h1M15 5h1M17 5h2M22 5h1M25 5h1M34 5h1M43 5h1M52 5h1M54 5h1M58 5h1M61 5h1M63 5h1M142 5h1M144 5h1M158 5h1M161 5h1M169 5h1M236 5h3M322 5h1M6 6h2M16 6h1M65 6h1M73 6h1M84 6h1M125 6h1M130 6h2M157 6h1M167 6h1M226 6h1M249 6h1M349 6h1M1 7h1M29 7h1M31 7h1M68 7h1M70 7h1M76 7h1M84 7h1M146 7h1M197 7h1M202 7h1M205 7h1M247 7h1M1 8h1M7 8h1M12 8h1M19 8h1M23 8h2M32 8h1M34 8h1M38 8h1M41 8h1M50 8h1M52 8h1M55 8h1M60 8h1M68 8h1M76 8h1M87 8h1M234 8h1M15 9h2M18 9h1M26 9h1M29 9h1M37 9h1M57 9h1M60 9h2M73 9h1M153 9h1M234 9h1M260 9h1M3 10h1M8 10h1M18 10h1M30 10h1M37 10h1M44 10h1M63 10h1M66 10h1M149 10h1M173 10h1M191 10h1M195 10h1M230 10h1M233 10h1M236 10h1M11 11h1M26 11h1M70 11h1M152 11h1M156 11h1M183 11h1M189 11h1M194 11h1M198 11h1M232 11h1M4 12h1M30 12h1M35 12h1M68 12h1M180 12h1M189 12h1M203 12h1M235 12h1M305 12h1M318 12h1M65 13h1M171 13h1M182 13h1M188 13h1M195 13h2M214 13h1M229 13h1M232 13h1M307 13h1M337 13h1M18 14h1M22 14h2M51 14h1M195 14h3M200 14h1M204 14h1M210 14h1M213 14h1M216 14h1M219 14h1M291 14h1M294 14h1M310 14h1M329 14h2M346 14h2M3 15h1M191 15h1M201 15h1M226 15h1M260 15h1M286 15h1M303 15h1M321 15h1M323 15h1M328 15h1M332 15h1M3 16h1M175 16h1M188 16h1M202 16h1M205 16h1M208 16h1M215 16h1M223 16h1M232 16h1M272 16h1M275 16h1M300 16h1M319 16h1M321 16h1M336 16h1M338 16h1M349 16h1M188 17h1M191 17h1M290 17h1M294 17h1M296 17h2M308 17h1M315 17h1M336 17h1M274 18h1M287 18h1M300 18h1M320 18h2M344 18h1M348 18h1M289 19h1M310 19h1M317 19h1M271 20h1M288 20h1M294 21h1M302 22h1M286 23h1M306 23h1M339 23h2M258 24h1M306 24h1M336 24h1M285 25h1M289 25h1M312 25h1M336 25h1M341 25h1M263 26h1M296 26h1M239 27h1M284 27h1M338 27h1M238 28h1M271 28h1M297 28h1M306 28h1M190 29h1M204 29h1M236 29h1M239 29h1M245 29h1M274 29h1M206 30h1M215 30h1M288 30h1M290 30h1M298 30h1M302 30h1M101 31h1M119 31h1M143 31h1M170 31h1M175 31h1M237 31h1M270 31h1M93 32h1M105 32h1M108 32h1M113 32h1M143 32h1M181 32h1M190 32h1M239 32h1M291 32h1M304 32h1M311 32h1M100 33h1M104 33h1M114 33h1M136 33h1M138 33h1M143 33h1M145 33h1M170 33h1M243 33h1M298 33h1M303 33h1M305 33h1M309 33h1M87 34h1M90 34h1M92 34h1M94 34h1M97 34h1M100 34h1M110 34h1M116 34h1M139 34h1M144 34h1M239 34h1M248 34h1M257 34h1M268 34h1M276 34h1M318 34h1M88 35h1M95 35h1M128 35h1M139 35h1M143 35h1M145 35h2M158 35h1M168 35h2M194 35h1M303 35h1M315 35h1M94 36h1M129 36h1M152 36h1M168 36h1M171 36h1M173 36h2M243 36h1M307 36h1M309 36h1M77 37h1M120 37h2M126 37h1M132 37h1M147 37h1M154 37h2M174 37h1M183 37h1M264 37h1M2 38h1M129 38h1M147 38h2M155 38h2M160 38h1M169 38h1M293 38h1M306 38h1M342 38h1M136 39h2M139 39h1M152 39h1M155 39h1M178 39h1M257 39h1M291 39h1M300 39h1M313 39h1M319 39h1M341 39h3M91 40h1M98 40h1M107 40h1M149 40h1M157 40h1M161 40h1M165 40h1M292 40h2M318 40h1M322 40h1M338 40h1M350 40h1M0 41h1M88 41h1M92 41h1M106 41h2M115 41h1M153 41h1M156 41h1M168 41h1M179 41h1M264 41h1M294 41h1M298 41h1M316 41h1M320 41h1M345 41h1M11 42h1M110 42h1M195 42h1M269 42h1M284 42h1M289 42h1M304 42h1M306 42h1M314 42h1M322 42h1M333 42h1M347 42h1M352 42h1M27 43h1M33 43h2M42 43h1M48 43h1M130 43h1M139 43h1M163 43h1M197 43h2M203 43h1M206 43h1M222 43h1M225 43h1M249 43h1M257 43h1M284 43h1M290 43h1M312 43h2M315 43h1M320 43h1M339 43h1M6 44h1M12 44h1M20 44h2M28 44h1M45 44h1M48 44h1M181 44h1M185 44h1M201 44h1M205 44h1M223 44h1M233 44h1M243 44h2M248 44h1M308 44h1M310 44h1M323 44h1M10 45h1M22 45h1M63 45h1M65 45h1M154 45h1M159 45h1M177 45h1M183 45h1M197 45h1M215 45h1M218 45h1M226 45h1M310 45h1M330 45h1M335 45h1M349 45h1M75 46h1M185 46h1M190 46h1M201 46h1M221 46h1M231 46h1M235 46h1M260 46h1M319 46h1M351 46h1M9 47h1M124 47h1M198 47h2M207 47h1M224 47h1M245 47h1M68 48h1M25 49h1M108 49h1M221 49h1M339 50h1M125 51h1M103 53h1M106 54h1M158 54h1M290 54h1M20 56h1M123 59h1M150 59h1M92 61h1M155 61h1M310 62h1M160 63h2M264 63h1"/>
<path stroke="#0026ff" d="M37 0h1M44 0h1M50 0h1M57 0h2M79 0h1M104 0h1M139 0h1M245 0h1M8 1h1M29 1h1M34 1h1M48 1h1M67 1h1M74 1h1M80 1h1M86 1h1M115 1h1M2 2h1M47 2h1M52 2h1M57 2h2M69 2h1M134 2h1M202 2h1M236 2h1M351 2h1M9 3h1M38 3h1M42 3h1M57 3h1M62 3h1M67 3h1M72 3h1M82 3h1M87 3h1M124 3h1M131 3h1M135 3h2M139 3h1M162 3h1M165 3h1M206 3h1M4 4h1M9 4h1M35 4h1M42 4h1M50 4h1M54 4h1M66 4h1M68 4h1M128 4h1M134 4h2M164 4h1M166 4h1M175 4h1M32 5h1M48 5h1M50 5h1M56 5h1M76 5h1M81 5h1M83 5h1M128 5h1M146 5h1M149 5h1M203 5h1M249 5h1M3 6h1M14 6h1M28 6h1M42 6h1M46 6h1M52 6h1M62 6h1M87 6h1M128 6h1M133 6h1M146 6h1M165 6h1M183 6h1M247 6h1M10 7h1M30 7h1M51 7h1M54 7h2M58 7h1M73 7h1M131 7h1M147 7h1M152 7h1M166 7h1M9 8h1M16 8h1M65 8h1M153 8h1M155 8h1M157 8h1M167 8h1M196 8h1M2 9h1M4 9h1M8 9h1M21 9h1M40 9h1M51 9h1M63 9h1M66 9h1M85 9h1M150 9h1M156 9h1M179 9h1M222 9h1M231 9h1M6 10h1M21 10h1M26 10h1M156 10h1M182 10h1M203 10h1M220 10h1M235 10h1M0 11h1M4 11h1M30 11h1M65 11h1M67 11h1M153 11h1M155 11h1M188 11h1M204 11h1M233 11h2M6 12h1M21 12h1M33 12h2M44 12h1M46 12h1M51 12h1M60 12h1M66 12h1M78 12h1M170 12h1M202 12h1M204 12h1M209 12h1M229 12h2M343 12h1M4 13h2M16 13h1M18 13h1M33 13h1M44 13h1M173 13h1M180 13h2M197 13h1M221 13h1M224 13h1M230 13h1M235 13h1M273 13h1M3 14h1M6 14h1M70 14h2M181 14h1M214 14h1M223 14h1M230 14h1M319 14h1M340 14h1M351 14h1M43 15h1M176 15h1M190 15h1M204 15h1M331 15h1M335 15h1M0 16h1M173 16h1M177 16h1M187 16h1M197 16h1M209 16h1M217 16h2M221 16h1M234 16h1M295 16h1M298 16h2M304 16h1M317 16h2M331 16h1M334 16h1M340 16h1M180 17h1M184 17h1M208 17h3M233 17h1M298 17h1M331 17h1M349 17h1M182 18h1M189 18h1M198 18h1M212 18h1M293 18h1M295 18h1M332 18h2M337 18h1M339 18h1M312 19h1M351 19h1M31 20h1M274 20h1M296 20h1M312 20h1M317 20h1M350 20h1M276 21h1M291 21h1M301 21h1M313 21h1M319 21h1M329 21h1M351 21h1M290 22h1M300 22h1M303 22h1M309 22h1M314 22h1M276 23h1M272 24h1M276 24h1M285 24h1M260 25h1M287 25h1M302 25h1M304 25h1M306 25h1M275 26h2M291 26h1M238 27h1M295 27h1M207 28h1M260 28h1M276 28h1M286 28h1M50 29h1M98 29h1M202 29h1M209 29h1M216 29h1M249 29h1M269 29h1M275 29h1M297 29h1M300 29h1M309 29h1M36 30h1M118 30h1M202 30h1M207 30h1M210 30h1M246 30h2M310 30h1M64 31h1M88 31h1M91 31h1M98 31h1M105 31h1M112 31h1M118 31h1M128 31h1M142 31h1M169 31h1M179 31h1M205 31h1M210 31h2M244 31h1M248 31h1M304 31h1M328 31h1M82 32h1M102 32h1M111 32h1M114 32h1M124 32h2M132 32h1M208 32h1M211 32h1M243 32h1M301 32h3M309 32h1M92 33h1M98 33h1M121 33h1M146 33h1M148 33h3M155 33h1M157 33h1M164 33h1M175 33h1M206 33h1M213 33h1M240 33h1M249 33h1M273 33h1M319 33h1M77 34h1M86 34h1M121 34h1M134 34h2M143 34h1M154 34h3M166 34h1M169 34h1M179 34h1M183 34h1M190 34h1M236 34h1M242 34h1M244 34h1M247 34h1M272 34h1M290 34h1M296 34h2M306 34h3M334 34h1M11 35h1M92 35h1M104 35h1M120 35h1M137 35h1M144 35h1M162 35h1M164 35h1M172 35h1M179 35h1M242 35h1M247 35h1M286 35h1M289 35h1M302 35h1M310 35h1M50 36h1M80 36h1M98 36h1M147 36h1M160 36h1M162 36h1M180 36h2M195 36h1M295 36h1M301 36h1M103 37h1M140 37h1M153 37h1M156 37h1M166 37h2M173 37h1M195 37h1M289 37h1M323 37h1M335 37h1M82 38h1M89 38h1M137 38h2M150 38h1M163 38h1M178 38h1M190 38h1M261 38h1M299 38h1M170 39h1M172 39h1M183 39h1M245 39h1M249 39h1M271 39h1M276 39h1M288 39h1M292 39h1M305 39h1M318 39h1M330 39h1M345 39h1M352 39h1M146 40h1M185 40h1M198 40h1M297 40h1M300 40h1M310 40h1M313 40h2M319 40h1M7 41h1M36 41h1M43 41h1M171 41h1M182 41h1M236 41h1M258 41h1M309 41h1M343 41h1M70 42h1M77 42h1M163 42h1M183 42h1M206 42h1M288 42h1M294 42h1M299 42h1M332 42h1M334 42h1M11 43h1M13 43h1M26 43h1M29 43h1M32 43h1M50 43h2M143 43h1M166 43h1M172 43h1M176 43h1M178 43h1M184 43h1M190 43h2M202 43h1M205 43h1M213 43h1M219 43h1M229 43h1M239 43h1M262 43h1M303 43h1M334 43h1M344 43h1M346 43h1M8 44h2M18 44h1M31 44h1M46 44h1M54 44h3M78 44h1M84 44h1M92 44h1M182 44h2M193 44h1M199 44h1M208 44h1M213 44h1M224 44h3M236 44h1M239 44h1M241 44h1M288 44h1M291 44h1M331 44h1M334 44h1M348 44h1M30 45h1M47 45h1M49 45h1M75 45h1M80 45h1M88 45h1M190 45h1M204 45h1M217 45h1M221 45h1M224 45h1M227 45h1M234 45h1M243 45h1M248 45h1M294 45h1M142 46h1M182 46h1M188 46h2M229 46h1M234 46h1M303 46h1M314 46h1M322 46h1M97 47h1M173 47h1M186 47h1M193 47h1M272 48h1M97 50h1M202 50h1M300 50h1M233 51h1M255 51h1M71 54h1M235 56h1M274 59h1"/>
<path stroke="#0040ff" d="M5 0h1M8 0h1M24 0h1M80 0h1M83 0h1M127 0h1M130 0h1M143 0h1M211 0h1M9 1h1M40 1h1M69 1h1M73 1h1M83 1h1M85 1h1M193 1h1M5 2h1M7 2h1M18 2h1M30 2h1M32 2h1M36 2h1M54 2h2M61 2h1M71 2h1M74 2h1M76 2h1M126 2h1M6 3h1M8 3h1M39 3h1M56 3h1M85 3h1M164 3h1M0 4h1M2 4h2M5 4h1M8 4h1M15 4h1M21 4h1M27 4h1M29 4h1M34 4h1M60 4h1M71 4h1M78 4h1M127 4h1M130 4h1M136 4h1M209 4h1M10 5h1M14 5h1M36 5h2M44 5h2M57 5h1M62 5h1M87 5h1M133 5h1M141 5h1M155 5h1M162 5h1M244 5h1M247 5h1M24 6h1M32 6h1M38 6h1M61 6h1M83 6h1M129 6h1M145 6h1M158 6h1M161 6h1M15 7h2M24 7h1M34 7h1M38 7h2M64 7h1M66 7h1M75 7h1M78 7h1M83 7h1M134 7h1M156 7h2M262 7h1M3 8h1M15 8h1M27 8h1M31 8h1M42 8h3M46 8h1M63 8h1M123 8h1M131 8h1M148 8h1M158 8h1M237 8h1M0 9h1M43 9h1M58 9h1M78 9h1M84 9h1M151 9h1M168 9h1M228 9h1M236 9h1M12 10h1M25 10h1M32 10h3M39 10h1M43 10h1M50 10h3M71 10h1M151 10h1M197 10h1M228 10h1M2 11h1M7 11h1M31 11h1M60 11h1M62 11h2M68 11h1M71 11h1M171 11h1M174 11h1M180 11h1M192 11h1M196 11h1M205 11h1M207 11h1M236 11h1M248 11h1M3 12h1M14 12h1M18 12h1M31 12h2M67 12h1M175 12h1M197 12h1M218 12h1M234 12h1M7 13h1M20 13h1M35 13h1M51 13h1M66 13h1M223 13h1M233 13h2M21 14h1M40 14h1M66 14h1M72 14h1M171 14h1M193 14h1M235 14h1M275 14h1M286 14h1M336 14h1M6 15h1M18 15h1M31 15h1M44 15h1M51 15h1M57 15h1M68 15h1M171 15h1M184 15h1M186 15h1M198 15h1M203 15h1M215 15h1M221 15h2M227 15h1M336 15h1M7 16h1M22 16h1M31 16h2M51 16h1M65 16h1M71 16h1M174 16h1M185 16h1M210 16h1M291 16h1M294 16h1M339 16h1M32 17h1M174 17h3M178 17h1M186 17h1M193 17h1M196 17h1M205 17h1M212 17h1M215 17h2M287 17h1M293 17h1M335 17h1M184 18h1M208 18h1M216 18h1M303 18h1M310 18h1M334 18h1M340 18h1M346 18h1M191 19h2M273 19h1M293 19h1M304 19h1M333 19h1M345 19h1M45 20h1M287 20h1M302 20h1M315 20h1M319 20h1M346 20h1M312 21h1M317 21h1M340 21h1M72 22h1M260 22h1M284 22h1M289 22h1M293 22h1M312 22h1M315 22h1M332 22h1M42 23h1M255 23h1M289 23h2M300 23h1M310 23h2M315 23h1M338 23h1M341 23h1M239 24h1M256 24h1M259 24h1M292 24h1M314 24h1M329 24h1M334 24h1M238 25h1M286 25h1M296 25h1M338 25h1M274 26h1M289 26h1M305 26h1M309 26h1M328 26h1M334 26h1M242 27h1M290 27h1M299 27h1M306 27h1M312 27h1M334 27h1M339 27h1M113 28h1M223 28h1M243 28h1M290 28h1M295 28h1M299 28h1M310 28h1M314 28h1M328 28h1M340 28h1M205 29h2M243 29h1M290 29h1M318 29h1M340 29h1M95 30h1M175 30h1M190 30h1M208 30h1M216 30h1M236 30h2M239 30h3M275 30h1M309 30h1M110 31h1M121 31h1M124 31h1M134 31h1M184 31h1M204 31h1M207 31h3M216 31h1M285 31h1M290 31h1M299 31h1M303 31h1M310 31h1M330 31h1M341 31h1M92 32h1M136 32h1M149 32h1M151 32h1M176 32h1M179 32h1M184 32h1M203 32h1M206 32h1M247 32h1M285 32h1M296 32h1M314 32h1M319 32h1M334 32h1M15 33h1M97 33h1M105 33h1M119 33h1M123 33h1M127 33h1M133 33h1M151 33h1M159 33h1M166 33h2M210 33h3M238 33h1M242 33h1M244 33h1M286 33h1M331 33h1M335 33h1M3 34h1M64 34h1M89 34h1M101 34h1M131 34h1M133 34h1M146 34h1M152 34h1M158 34h3M168 34h1M173 34h1M193 34h1M197 34h1M214 34h1M246 34h1M289 34h1M14 35h1M75 35h1M79 35h1M82 35h1M89 35h1M97 35h1M101 35h1M108 35h1M127 35h1M136 35h1M140 35h1M151 35h1M160 35h1M167 35h1M177 35h1M180 35h1M195 35h1M239 35h1M249 35h1M287 35h1M296 35h1M304 35h1M308 35h1M319 35h1M322 35h1M334 35h1M336 35h1M2 36h1M68 36h1M99 36h1M104 36h1M149 36h1M163 36h1M166 36h1M169 36h1M179 36h1M193 36h1M239 36h1M27 37h1M58 37h1M74 37h1M79 37h2M106 37h1M141 37h1M144 37h1M165 37h1M169 37h1M172 37h1M239 37h1M295 37h1M297 37h1M304 37h1M310 37h1M312 37h1M340 37h1M344 37h1M352 37h1M102 38h1M158 38h1M164 38h1M168 38h1M264 38h1M284 38h1M287 38h1M77 39h1M156 39h1M161 39h1M171 39h1M173 39h1M176 39h1M236 39h1M264 39h1M267 39h1M287 39h1M296 39h1M309 39h1M328 39h1M337 39h2M351 39h1M154 40h1M199 40h1M236 40h1M249 40h1M285 40h1M291 40h1M306 40h1M309 40h1M330 40h1M333 40h1M347 40h1M10 41h1M33 41h1M157 41h1M192 41h1M239 41h1M246 41h1M259 41h1M274 41h1M288 41h2M291 41h1M293 41h1M311 41h1M331 41h1M347 41h1M2 42h1M28 42h1M43 42h1M75 42h1M174 42h1M182 42h1M191 42h1M202 42h1M218 42h1M228 42h1M287 42h1M296 42h1M316 42h1M320 42h1M336 42h1M2 43h1M5 43h1M15 43h2M21 43h2M28 43h1M35 43h1M44 43h1M46 43h1M55 43h1M76 43h1M78 43h1M80 43h1M82 43h1M179 43h1M183 43h1M188 43h1M195 43h1M200 43h1M204 43h1M217 43h1M227 43h1M233 43h1M243 43h1M245 43h1M258 43h1M292 43h1M309 43h1M350 43h1M19 44h1M53 44h1M58 44h1M68 44h1M81 44h1M87 44h1M179 44h1M203 44h1M211 44h1M218 44h1M227 44h2M237 44h1M302 44h1M328 44h1M50 45h1M174 45h1M186 45h1M192 45h2M212 45h1M222 45h1M233 45h1M317 45h1M184 46h1M208 46h1M224 46h1M129 47h1M178 47h1M208 47h1M233 47h1M228 48h1M222 50h1M306 54h1M177 58h1M245 59h1M168 60h1"/>
<path stroke="#0059ff" d="M27 0h1M42 0h1M115 0h1M119 0h2M122 0h1M128 0h1M1 1h1M18 1h1M130 1h1M133 1h1M6 2h1M34 2h2M45 2h1M48 2h1M53 2h1M60 2h1M87 2h1M110 2h1M122 2h1M129 2h1M0 3h1M37 3h1M50 3h1M58 3h1M80 3h1M102 3h1M132 3h1M142 3h1M151 3h1M243 3h1M14 4h1M18 4h2M36 4h1M45 4h1M48 4h1M52 4h1M74 4h1M80 4h1M86 4h1M123 4h1M163 4h1M2 5h2M5 5h1M12 5h1M20 5h1M33 5h1M47 5h1M67 5h1M77 5h1M126 5h1M129 5h1M132 5h1M136 5h2M143 5h1M164 5h2M4 6h1M9 6h1M19 6h1M26 6h1M31 6h1M44 6h1M57 6h1M71 6h1M78 6h1M85 6h1M126 6h1M132 6h1M137 6h1M202 6h1M7 7h1M35 7h1M41 7h2M48 7h1M57 7h1M59 7h1M67 7h1M77 7h1M85 7h1M87 7h1M123 7h1M132 7h1M0 8h1M8 8h1M37 8h1M47 8h1M58 8h1M67 8h1M73 8h1M78 8h1M83 8h1M86 8h1M151 8h1M208 8h1M7 9h1M11 9h1M13 9h1M25 9h1M41 9h2M46 9h1M50 9h1M59 9h1M65 9h1M68 9h1M71 9h1M83 9h1M129 9h1M148 9h1M152 9h1M0 10h1M2 10h1M4 10h1M7 10h1M9 10h1M14 10h2M17 10h1M29 10h1M31 10h1M46 10h1M54 10h2M60 10h1M72 10h1M148 10h1M150 10h1M152 10h1M157 10h1M227 10h1M249 10h1M6 11h1M10 11h1M12 11h1M17 11h1M20 11h2M25 11h1M28 11h1M34 11h2M41 11h3M55 11h1M87 11h1M150 11h1M154 11h1M169 11h1M209 11h1M224 11h1M246 11h2M249 11h1M1 12h1M10 12h1M12 12h1M17 12h1M24 12h1M36 12h1M43 12h1M52 12h1M63 12h1M172 12h1M227 12h1M231 12h1M249 12h1M2 13h2M6 13h1M8 13h1M21 13h1M30 13h1M36 13h1M156 13h1M169 13h1M216 13h1M5 14h1M41 14h1M46 14h1M52 14h2M59 14h1M63 14h1M175 14h1M183 14h1M185 14h1M187 14h2M203 14h1M209 14h1M211 14h1M217 14h1M229 14h1M232 14h1M5 15h1M22 15h1M35 15h2M40 15h1M52 15h2M70 15h1M185 15h1M187 15h2M197 15h1M209 15h1M218 15h1M228 15h1M289 15h1M301 15h1M337 15h1M2 16h1M16 16h1M27 16h1M35 16h1M43 16h1M67 16h1M72 16h1M186 16h1M190 16h1M199 16h2M203 16h1M213 16h2M219 16h2M224 16h1M231 16h1M269 16h1M305 16h1M316 16h1M346 16h1M351 16h1M18 17h1M51 17h1M179 17h1M187 17h1M194 17h1M199 17h1M214 17h1M221 17h1M309 17h1M339 17h1M345 17h1M348 17h1M351 17h2M35 18h1M43 18h1M65 18h1M191 18h1M193 18h1M206 18h2M215 18h1M219 18h2M263 18h1M268 18h1M271 18h1M288 18h1M307 18h1M336 18h1M347 18h1M352 18h1M5 19h1M184 19h1M294 19h1M315 19h1M334 19h1M352 19h1M32 20h1M46 20h1M65 20h1M256 20h1M291 20h1M299 20h1M309 20h1M314 20h1M338 20h1M341 20h1M345 20h1M269 21h1M285 21h1M292 21h1M297 21h1M311 21h1M332 21h1M334 21h1M342 21h1M348 21h1M46 22h1M259 22h1M263 22h1M298 22h1M318 22h1M322 22h1M329 22h1M334 22h1M339 22h1M259 23h1M262 23h1M292 23h1M295 23h1M316 23h1M343 23h1M24 24h1M296 24h1M310 24h2M323 24h1M333 24h1M63 25h1M268 25h1M272 25h1M322 25h1M83 26h1M225 26h1M238 26h1M256 26h1M317 26h1M337 26h1M12 27h1M240 27h1M263 27h1M294 27h1M130 28h1M204 28h1M209 28h1M213 28h1M225 28h1M236 28h1M242 28h1M247 28h1M249 28h1M307 28h1M175 29h1M180 29h1M203 29h1M208 29h1M210 29h2M224 29h1M242 29h1M246 29h2M285 29h1M291 29h1M295 29h1M306 29h1M314 29h1M338 29h1M5 30h1M66 30h1M93 30h2M107 30h1M114 30h2M130 30h1M149 30h1M169 30h1M177 30h1M179 30h1M183 30h1M195 30h1M204 30h2M212 30h1M218 30h1M224 30h1M235 30h1M242 30h1M244 30h1M260 30h1M274 30h1M293 30h1M311 30h1M63 31h1M77 31h1M79 31h1M92 31h1M99 31h1M114 31h1M125 31h1M136 31h1M146 31h1M174 31h1M180 31h1M183 31h1M192 31h1M194 31h1M215 31h1M238 31h1M243 31h1M311 31h1M103 32h1M117 32h1M120 32h1M122 32h1M126 32h1M135 32h1M138 32h1M147 32h1M164 32h1M177 32h1M180 32h1M185 32h1M197 32h1M205 32h1M218 32h1M236 32h2M242 32h1M244 32h1M275 32h1M305 32h1M61 33h1M75 33h1M77 33h1M89 33h1M112 33h1M118 33h1M129 33h1M152 33h3M156 33h1M176 33h1M184 33h1M186 33h1M193 33h2M203 33h1M218 33h1M220 33h1M247 33h2M296 33h1M306 33h1M310 33h2M345 33h1M9 34h1M26 34h1M47 34h1M79 34h2M82 34h2M108 34h1M125 34h1M129 34h1M137 34h1M147 34h1M161 34h1M167 34h1M177 34h1M185 34h1M191 34h2M195 34h1M213 34h1M235 34h1M295 34h1M298 34h1M309 34h1M311 34h1M27 35h1M36 35h1M56 35h1M58 35h1M80 35h1M84 35h1M106 35h1M117 35h1M126 35h1M156 35h2M184 35h1M240 35h1M244 35h1M248 35h1M271 35h1M299 35h1M306 35h1M318 35h1M343 35h1M46 36h1M52 36h1M64 36h1M75 36h1M82 36h1M134 36h1M178 36h1M247 36h1M289 36h1M310 36h1M316 36h3M323 36h1M332 36h1M341 36h1M14 37h1M36 37h1M78 37h1M82 37h1M84 37h1M177 37h2M180 37h3M198 37h1M269 37h1M286 37h2M300 37h2M318 37h1M322 37h1M50 38h1M112 38h1M153 38h1M174 38h1M176 38h1M179 38h1M184 38h2M243 38h1M260 38h1M298 38h1M300 38h1M313 38h1M347 38h1M28 39h1M33 39h1M75 39h1M82 39h1M100 39h1M118 39h1M126 39h1M130 39h1M149 39h1M166 39h1M174 39h1M179 39h1M182 39h1M289 39h1M299 39h1M302 39h1M314 39h1M335 39h1M346 39h1M349 39h2M7 40h1M33 40h1M78 40h1M173 40h1M176 40h1M187 40h3M239 40h1M243 40h1M245 40h1M284 40h1M294 40h1M315 40h1M321 40h1M339 40h1M352 40h1M12 41h1M41 41h1M71 41h1M80 41h1M134 41h1M177 41h1M183 41h1M185 41h1M195 41h1M198 41h1M205 41h1M210 41h1M267 41h1M296 41h1M303 41h1M332 41h1M340 41h2M351 41h1M10 42h1M14 42h3M21 42h1M26 42h1M29 42h1M33 42h1M54 42h1M58 42h1M61 42h1M66 42h1M72 42h1M76 42h1M181 42h1M188 42h3M199 42h1M227 42h1M233 42h1M240 42h1M243 42h1M245 42h1M285 42h2M295 42h1M297 42h1M313 42h1M348 42h1M12 43h1M18 43h1M20 43h1M23 43h1M38 43h1M47 43h1M57 43h1M68 43h2M77 43h1M86 43h1M180 43h1M182 43h1M196 43h1M201 43h1M207 43h1M211 43h2M214 43h1M216 43h1M221 43h1M223 43h1M231 43h1M240 43h1M247 43h1M289 43h1M296 43h1M304 43h1M341 43h1M347 43h1M0 44h1M10 44h1M14 44h1M32 44h1M35 44h1M43 44h1M75 44h2M79 44h1M173 44h1M194 44h1M217 44h1M232 44h1M245 44h1M287 44h1M316 44h1M335 44h1M44 45h1M247 45h1M291 45h1M179 46h1M233 46h1M267 46h1M334 47h1M189 48h1M181 49h1M274 50h1"/>
<path stroke="#0073ff" d="M19 0h2M45 0h1M48 0h1M55 0h1M78 0h1M90 0h1M21 1h1M28 1h1M32 1h1M49 1h1M55 1h1M76 1h1M96 1h1M121 1h1M139 1h2M146 1h1M9 2h1M11 2h1M15 2h1M31 2h1M41 2h1M49 2h1M51 2h1M83 2h1M85 2h2M96 2h1M5 3h1M7 3h1M24 3h1M31 3h1M44 3h2M66 3h1M74 3h2M110 3h1M137 3h1M159 3h1M194 3h1M239 3h1M23 4h1M70 4h1M75 4h1M87 4h1M138 4h1M239 4h1M0 5h2M24 5h1M39 5h1M51 5h1M80 5h1M125 5h1M127 5h1M130 5h1M134 5h1M140 5h1M13 6h1M20 6h1M23 6h1M37 6h1M39 6h1M41 6h1M47 6h2M50 6h1M66 6h1M77 6h1M127 6h1M147 6h1M159 6h2M168 6h1M238 6h1M13 7h2M21 7h1M49 7h1M62 7h1M71 7h1M81 7h1M122 7h1M126 7h1M130 7h1M137 7h1M159 7h1M59 8h1M75 8h1M77 8h1M124 8h1M127 8h1M132 8h1M154 8h1M159 8h1M164 8h1M10 9h1M17 9h1M19 9h2M33 9h2M182 9h1M237 9h1M11 10h1M13 10h1M19 10h1M24 10h1M38 10h1M45 10h1M48 10h1M61 10h1M68 10h1M74 10h1M153 10h2M167 10h1M169 10h1M221 10h1M5 11h1M8 11h1M23 11h1M44 11h1M51 11h1M58 11h1M73 11h1M77 11h1M84 11h1M151 11h1M235 11h1M2 12h1M5 12h1M9 12h1M19 12h2M25 12h2M40 12h1M42 12h1M57 12h1M62 12h1M71 12h2M152 12h1M154 12h1M181 12h1M190 12h1M214 12h1M248 12h1M11 13h1M13 13h1M32 13h1M34 13h1M39 13h1M50 13h1M57 13h1M70 13h1M72 13h1M151 13h1M186 13h1M206 13h1M28 14h1M31 14h2M35 14h1M37 14h1M43 14h2M169 14h2M190 14h1M202 14h1M317 14h1M344 14h1M2 15h1M20 15h1M24 15h2M32 15h1M46 15h1M54 15h1M71 15h1M172 15h1M175 15h1M193 15h1M196 15h1M208 15h1M219 15h2M290 15h1M312 15h1M347 15h1M12 16h1M18 16h1M23 16h1M44 16h1M61 16h1M170 16h1M172 16h1M191 16h1M211 16h1M228 16h1M233 16h1M308 16h1M2 17h1M8 17h1M27 17h2M33 17h1M44 17h1M53 17h1M61 17h1M72 17h1M177 17h1M182 17h2M203 17h1M223 17h2M300 17h1M314 17h1M333 17h1M340 17h1M0 18h1M12 18h1M31 18h1M34 18h1M36 18h1M46 18h1M179 18h1M183 18h1M186 18h1M197 18h1M199 18h1M205 18h1M209 18h1M214 18h1M217 18h1M222 18h1M231 18h1M258 18h1M322 18h1M329 18h1M341 18h1M349 18h2M3 19h1M6 19h1M43 19h1M46 19h1M194 19h1M216 19h1M221 19h1M269 19h1M291 19h1M318 19h1M328 19h1M335 19h1M339 19h1M342 19h1M350 19h1M258 20h1M298 20h1M304 20h1M306 20h1M316 20h1M321 20h1M336 20h1M12 21h1M15 21h1M199 21h1M316 21h1M26 22h1M205 22h2M285 22h1M294 22h1M296 22h1M319 22h1M321 22h1M323 22h1M338 22h1M348 22h1M17 23h1M33 23h1M288 23h1M291 23h1M301 23h1M303 23h1M313 23h2M323 23h1M332 23h1M38 24h1M70 24h1M289 24h1M294 24h1M300 24h1M304 24h1M307 24h1M340 24h1M239 25h1M249 25h1M270 25h1M295 25h1M305 25h1M308 25h1M209 26h1M227 26h1M235 26h2M242 26h1M290 26h1M303 26h2M306 26h1M310 26h1M314 26h1M320 26h1M338 26h1M72 27h1M88 27h1M202 27h1M205 27h1M208 27h1M212 27h1M244 27h1M247 27h1M314 27h1M317 27h1M333 27h1M103 28h1M122 28h1M143 28h1M202 28h1M227 28h1M237 28h1M246 28h1M274 28h1M287 28h1M311 28h1M317 28h1M82 29h1M89 29h1M91 29h1M113 29h1M115 29h1M149 29h1M298 29h2M303 29h1M335 29h1M82 30h1M88 30h1M99 30h1M101 30h1M104 30h1M133 30h2M182 30h1M186 30h1M188 30h1M192 30h1M209 30h1M272 30h1M286 30h1M306 30h2M313 30h1M315 30h1M332 30h1M335 30h1M337 30h2M89 31h1M103 31h1M106 31h2M111 31h1M133 31h1M149 31h2M154 31h1M157 31h2M171 31h1M181 31h1M185 31h1M195 31h1M212 31h1M225 31h1M241 31h1M249 31h1M286 31h1M308 31h1M334 31h1M339 31h1M2 32h1M11 32h1M19 32h1M47 32h1M77 32h1M104 32h1M110 32h1M131 32h1M133 32h1M139 32h1M141 32h1M145 32h1M152 32h1M167 32h1M170 32h1M174 32h1M182 32h1M187 32h1M191 32h1M207 32h1M212 32h1M248 32h1M290 32h1M293 32h1M300 32h1M306 32h1M310 32h1M331 32h1M340 32h1M5 33h1M11 33h1M13 33h1M41 33h1M58 33h1M79 33h2M87 33h1M108 33h1M116 33h1M131 33h1M142 33h1M144 33h1M147 33h1M173 33h1M187 33h1M190 33h1M195 33h1M207 33h1M229 33h1M235 33h1M237 33h1M245 33h1M255 33h1M330 33h1M332 33h1M338 33h1M0 34h1M28 34h1M30 34h1M58 34h1M85 34h1M120 34h1M164 34h2M172 34h1M174 34h1M184 34h1M186 34h1M188 34h1M194 34h1M203 34h1M241 34h1M249 34h1M328 34h1M345 34h1M7 35h1M69 35h1M72 35h1M83 35h1M85 35h1M90 35h1M100 35h1M115 35h1M131 35h2M135 35h1M171 35h1M198 35h1M238 35h1M243 35h1M246 35h1M298 35h1M312 35h1M5 36h1M34 36h1M61 36h1M76 36h1M78 36h1M86 36h1M107 36h1M123 36h1M172 36h1M176 36h1M183 36h1M192 36h1M245 36h1M288 36h1M291 36h1M302 36h1M308 36h1M320 36h1M331 36h1M338 36h1M29 37h1M43 37h1M63 37h1M71 37h1M75 37h1M81 37h1M164 37h1M186 37h1M192 37h1M237 37h1M248 37h1M306 37h1M311 37h1M320 37h1M330 37h1M332 37h1M334 37h1M10 38h1M27 38h2M41 38h1M52 38h1M69 38h1M74 38h1M140 38h1M161 38h2M195 38h2M198 38h1M236 38h1M256 38h1M289 38h2M304 38h2M308 38h1M312 38h1M317 38h1M319 38h1M330 38h1M337 38h1M345 38h1M0 39h1M12 39h1M14 39h2M50 39h1M79 39h1M81 39h1M85 39h1M177 39h1M180 39h1M191 39h1M198 39h1M210 39h1M239 39h1M241 39h1M295 39h1M298 39h1M311 39h1M316 39h1M320 39h1M323 39h1M344 39h1M2 40h1M16 40h1M28 40h1M43 40h1M77 40h1M82 40h1M111 40h1M170 40h1M177 40h1M196 40h1M200 40h1M241 40h1M248 40h1M302 40h1M305 40h1M308 40h1M328 40h2M340 40h1M342 40h1M32 41h1M59 41h1M180 41h1M191 41h1M216 41h1M228 41h1M234 41h1M237 41h1M244 41h1M271 41h1M307 41h1M315 41h1M322 41h1M342 41h1M352 41h1M0 42h2M5 42h1M27 42h1M38 42h1M41 42h1M44 42h1M48 42h1M57 42h1M65 42h1M74 42h1M80 42h1M176 42h1M196 42h1M205 42h1M208 42h1M210 42h1M212 42h3M224 42h2M230 42h1M234 42h1M236 42h1M328 42h1M331 42h1M0 43h1M6 43h1M9 43h2M25 43h1M31 43h1M40 43h2M43 43h1M45 43h1M49 43h1M53 43h2M58 43h1M62 43h1M66 43h2M71 43h1M74 43h1M79 43h1M220 43h1M226 43h1M235 43h1M237 43h1M241 43h1M264 43h1M298 43h1M342 43h2M3 44h1M7 44h1M24 44h1M26 44h1M60 44h1M66 44h1M69 44h1M72 44h1M80 44h1M82 44h1M215 44h1M229 44h1M238 44h1M242 44h1M305 44h1M332 44h1M189 45h1M208 45h1M211 45h1M289 45h1M323 45h1M267 51h1M255 52h1"/>
<path stroke="#008cff" d="M53 0h1M81 0h1M98 0h2M102 0h1M107 0h1M112 0h1M114 0h1M123 0h1M3 1h1M7 1h1M13 1h1M89 1h1M102 1h1M117 1h1M119 1h1M3 2h1M77 2h1M99 2h1M121 2h1M124 2h1M13 3h1M49 3h1M123 3h1M77 4h1M79 4h1M81 4h1M112 4h1M132 4h1M161 4h1M7 5h1M23 5h1M49 5h1M75 5h1M79 5h1M123 5h1M139 5h1M159 5h1M34 6h1M45 6h1M64 6h1M69 6h1M75 6h2M82 6h1M138 6h1M140 6h1M142 6h3M245 6h1M5 7h1M53 7h1M79 7h2M82 7h1M124 7h1M133 7h1M142 7h1M165 7h1M5 8h1M79 8h1M82 8h1M145 8h2M165 8h1M168 8h1M12 9h1M31 9h1M45 9h1M47 9h2M53 9h1M67 9h1M75 9h1M79 9h1M81 9h1M86 9h1M125 9h2M155 9h1M1 10h1M10 10h1M27 10h1M47 10h1M58 10h1M125 10h1M168 10h1M9 11h1M14 11h1M19 11h1M24 11h1M27 11h1M36 11h4M48 11h1M52 11h2M59 11h1M64 11h1M69 11h1M195 11h1M228 11h1M7 12h2M45 12h1M50 12h1M54 12h1M73 12h1M79 12h1M173 12h1M179 12h1M247 12h1M0 13h2M10 13h1M12 13h1M19 13h1M25 13h2M28 13h2M37 13h1M40 13h1M45 13h1M53 13h1M62 13h1M148 13h1M170 13h1M177 13h1M202 13h1M218 13h1M225 13h1M248 13h2M2 14h1M20 14h1M25 14h1M29 14h1M36 14h1M39 14h1M55 14h1M62 14h1M172 14h1M8 15h3M12 15h1M14 15h1M27 15h1M34 15h1M62 15h1M65 15h1M72 15h1M173 15h1M177 15h1M179 15h1M181 15h1M192 15h1M202 15h1M206 15h1M211 15h1M230 15h1M285 15h1M329 15h1M14 16h1M38 16h1M42 16h1M63 16h1M66 16h1M196 16h1M229 16h1M309 16h1M323 16h1M330 16h1M342 16h1M5 17h1M22 17h1M35 17h1M43 17h1M45 17h1M50 17h1M65 17h1M67 17h1M173 17h1M181 17h1M202 17h1M206 17h2M217 17h1M222 17h1M226 17h3M230 17h1M232 17h1M318 17h1M3 18h1M6 18h1M44 18h1M53 18h1M63 18h1M66 18h1M71 18h2M174 18h1M180 18h1M190 18h1M192 18h1M196 18h1M200 18h3M223 18h1M233 18h1M284 18h1M301 18h1M331 18h1M343 18h1M351 18h1M24 19h1M32 19h1M44 19h1M50 19h1M72 19h1M182 19h2M202 19h1M217 19h1M234 19h1M267 19h1M321 19h1M323 19h1M332 19h1M341 19h1M344 19h1M0 20h1M8 20h1M34 20h1M36 20h1M42 20h1M70 20h1M72 20h1M216 20h1M223 20h1M313 20h1M5 21h1M31 21h1M206 21h1M225 21h1M228 21h1M314 21h1M339 21h1M344 21h1M349 21h1M34 22h1M56 22h1M301 22h1M311 22h1M337 22h1M340 22h1M28 23h1M322 23h1M329 23h1M352 23h1M9 24h1M26 24h1M42 24h1M63 24h1M202 24h1M255 24h1M287 24h1M302 24h1M312 24h1M316 24h1M328 24h1M332 24h1M11 25h1M43 25h1M122 25h1M223 25h1M242 25h1M247 25h1M269 25h1M299 25h1M303 25h1M314 25h1M321 25h1M329 25h1M349 25h1M72 26h1M190 26h1M202 26h1M234 26h1M243 26h1M247 26h1M285 26h1M298 26h1M307 26h1M311 26h1M329 26h1M332 26h1M26 27h1M28 27h1M143 27h1M151 27h1M170 27h1M175 27h1M211 27h1M235 27h1M246 27h1M285 27h1M310 27h1M329 27h1M50 28h1M139 28h1M149 28h1M210 28h1M212 28h1M217 28h1M224 28h1M235 28h1M241 28h1M258 28h1M293 28h1M298 28h1M302 28h1M318 28h1M2 29h1M9 29h1M47 29h1M56 29h1M64 29h1M103 29h1M118 29h1M130 29h1M133 29h1M138 29h1M169 29h2M183 29h1M225 29h1M227 29h1M237 29h1M248 29h1M284 29h1M311 29h1M313 29h1M332 29h1M34 30h1M91 30h1M103 30h1M106 30h1M112 30h1M123 30h1M140 30h1M145 30h1M151 30h1M181 30h1M184 30h1M187 30h1M196 30h1M203 30h1M211 30h1M217 30h1M219 30h1M221 30h2M227 30h1M245 30h1M287 30h1M297 30h1M308 30h1M341 30h2M45 31h1M47 31h1M55 31h1M72 31h1M80 31h1M100 31h1M102 31h1M131 31h1M135 31h1M138 31h1M152 31h1M155 31h1M172 31h1M177 31h1M188 31h1M202 31h2M206 31h1M217 31h1M236 31h1M267 31h1M284 31h1M301 31h2M305 31h2M332 31h1M340 31h1M13 32h1M22 32h1M25 32h1M44 32h1M46 32h1M58 32h1M64 32h1M69 32h1M80 32h1M89 32h1M99 32h1M109 32h1M116 32h1M119 32h1M129 32h2M142 32h1M146 32h1M161 32h1M169 32h1M178 32h1M183 32h1M202 32h1M216 32h1M249 32h1M288 32h1M307 32h1M322 32h1M341 32h1M32 33h1M36 33h1M45 33h1M52 33h1M69 33h1M82 33h2M86 33h1M96 33h1M165 33h1M179 33h1M182 33h2M185 33h1M191 33h1M197 33h1M202 33h1M205 33h1M208 33h1M214 33h2M223 33h3M234 33h1M285 33h1M290 33h1M292 33h1M297 33h1M308 33h1M2 34h1M4 34h1M15 34h1M18 34h1M44 34h1M50 34h1M52 34h1M56 34h1M61 34h1M74 34h2M78 34h1M81 34h1M106 34h1M141 34h1M150 34h1M162 34h1M171 34h1M204 34h1M209 34h1M225 34h1M237 34h1M243 34h1M245 34h1M299 34h1M302 34h1M310 34h1M314 34h1M319 34h2M335 34h1M0 35h1M2 35h1M12 35h1M28 35h1M57 35h1M64 35h1M74 35h1M86 35h2M141 35h1M161 35h1M166 35h1M181 35h1M185 35h1M189 35h2M196 35h1M202 35h2M213 35h1M285 35h1M294 35h2M316 35h1M339 35h3M0 36h1M7 36h1M31 36h1M33 36h1M38 36h1M41 36h1M58 36h1M77 36h1M79 36h1M81 36h1M83 36h1M157 36h1M165 36h1M186 36h1M189 36h1M194 36h1M207 36h1M233 36h1M238 36h1M242 36h1M249 36h1M286 36h1M290 36h1M293 36h1M303 36h1M333 36h1M339 36h2M342 36h1M346 36h1M10 37h1M18 37h2M37 37h1M46 37h1M48 37h1M52 37h1M57 37h1M68 37h1M76 37h1M176 37h1M185 37h1M187 37h1M210 37h1M213 37h1M236 37h1M245 37h1M284 37h1M291 37h1M299 37h1M309 37h1M321 37h1M339 37h1M348 37h1M6 38h1M12 38h1M26 38h1M36 38h1M43 38h1M56 38h1M77 38h1M80 38h1M159 38h1M177 38h1M189 38h1M192 38h1M247 38h3M309 38h3M334 38h1M338 38h1M349 38h1M352 38h1M5 39h1M18 39h1M43 39h1M52 39h1M55 39h1M78 39h1M163 39h1M181 39h1M185 39h1M193 39h1M195 39h1M200 39h1M235 39h1M243 39h1M294 39h1M310 39h1M312 39h1M315 39h1M317 39h1M46 40h1M74 40h1M80 40h1M186 40h1M190 40h1M194 40h1M287 40h1M331 40h1M341 40h1M348 40h1M4 41h1M18 41h1M22 41h1M26 41h1M28 41h2M52 41h2M58 41h1M60 41h1M66 41h1M69 41h1M74 41h2M82 41h1M85 41h1M176 41h1M184 41h1M200 41h1M204 41h1M213 41h1M227 41h1M241 41h1M286 41h1M297 41h1M318 41h1M323 41h1M3 42h1M6 42h2M13 42h1M17 42h1M36 42h1M42 42h1M46 42h1M51 42h1M60 42h1M78 42h1M84 42h1M87 42h1M184 42h1M193 42h1M201 42h1M203 42h2M207 42h1M209 42h1M222 42h2M237 42h1M239 42h1M247 42h3M292 42h1M301 42h1M315 42h1M317 42h2M342 42h2M351 42h1M1 43h1M17 43h1M19 43h1M39 43h1M52 43h1M60 43h1M65 43h1M70 43h1M75 43h1M81 43h1M83 43h3M199 43h1M209 43h1M215 43h1M218 43h1M234 43h1M301 43h1M351 43h1M5 44h1M57 44h1M59 44h1M62 44h1M77 44h1M180 44h1M186 44h1M209 44h1M234 44h1M240 44h1M247 44h1M293 44h1M319 44h1M343 44h1M231 45h1M242 45h1M244 45h1M200 46h1M216 46h1M247 46h1M267 48h1M267 50h1"/>
<path stroke="#00a6ff" d="M101 0h1M108 0h1M6 1h1M41 1h1M53 1h1M60 1h1M99 1h1M103 1h1M110 1h1M143 1h1M40 2h1M72 2h1M78 2h1M100 2h1M103 2h1M11 3h1M81 3h1M90 3h1M99 3h1M113 3h1M172 3h1M242 3h1M58 4h1M89 4h1M115 4h1M124 4h1M149 4h1M27 5h1M42 5h1M60 5h1M78 5h1M102 5h1M104 5h1M138 5h1M160 5h1M163 5h1M51 6h1M67 6h1M81 6h1M134 6h2M141 6h1M244 6h1M0 7h1M12 7h1M27 7h1M74 7h1M128 7h1M143 7h1M158 7h1M161 7h1M163 7h1M21 8h1M74 8h1M81 8h1M85 8h1M128 8h2M142 8h1M3 9h1M5 9h1M14 9h1M32 9h1M38 9h1M49 9h1M56 9h1M74 9h1M76 9h1M80 9h1M87 9h1M123 9h1M147 9h1M157 9h1M167 9h1M59 10h1M75 10h1M78 10h1M83 10h3M29 11h1M49 11h1M54 11h1M78 11h1M86 11h1M15 12h1M29 12h1M37 12h3M61 12h1M69 12h1M84 12h1M153 12h1M219 12h1M9 13h1M15 13h1M24 13h1M43 13h1M52 13h1M59 13h1M61 13h1M63 13h1M73 13h1M78 13h1M83 13h1M219 13h1M4 14h1M7 14h1M9 14h1M11 14h2M14 14h3M24 14h1M27 14h1M30 14h1M47 14h1M57 14h1M60 14h2M173 14h1M177 14h1M221 14h1M227 14h1M247 14h1M0 15h1M7 15h1M11 15h1M15 15h1M29 15h1M55 15h1M63 15h1M235 15h1M272 15h1M349 15h1M5 16h2M9 16h1M20 16h2M36 16h1M40 16h2M46 16h1M54 16h1M62 16h1M69 16h1M171 16h1M194 16h2M204 16h1M227 16h1M230 16h1M235 16h1M314 16h1M0 17h1M7 17h1M16 17h1M23 17h1M34 17h1M36 17h1M41 17h1M66 17h1M190 17h1M197 17h1M200 17h1M204 17h1M213 17h1M218 17h1M225 17h1M229 17h1M338 17h1M343 17h1M346 17h1M15 18h2M22 18h1M26 18h1M28 18h1M32 18h1M39 18h1M51 18h1M62 18h1M176 18h1M185 18h1M188 18h1M218 18h1M232 18h1M312 18h1M2 19h1M21 19h1M31 19h1M35 19h2M45 19h1M62 19h1M65 19h1M70 19h1M189 19h1M212 19h1M218 19h1M233 19h1M297 19h1M299 19h1M307 19h1M316 19h1M336 19h1M347 19h1M3 20h1M11 20h1M14 20h1M24 20h1M38 20h1M43 20h1M202 20h1M231 20h1M284 20h1M292 20h1M322 20h1M328 20h1M332 20h1M349 20h1M6 21h1M17 21h1M26 21h1M32 21h1M43 21h1M51 21h1M62 21h1M72 21h1M207 21h1M224 21h1M230 21h1M318 21h1M19 22h1M31 22h1M37 22h2M43 22h1M199 22h1M227 22h1M232 22h1M291 22h1M307 22h1M313 22h1M330 22h1M342 22h1M349 22h1M24 23h1M38 23h1M43 23h2M61 23h1M63 23h1M85 23h1M93 23h1M305 23h1M309 23h1M312 23h1M317 23h1M342 23h1M344 23h1M32 24h1M46 24h1M64 24h1M66 24h1M122 24h1M190 24h1M236 24h1M303 24h1M305 24h1M313 24h1M338 24h1M341 24h1M346 24h1M31 25h1M38 25h1M40 25h1M152 25h1M229 25h1M236 25h1M294 25h1M298 25h1M309 25h1M331 25h1M2 26h1M23 26h1M46 26h1M50 26h1M52 26h1M61 26h1M66 26h1M68 26h1M95 26h1M152 26h1M203 26h1M219 26h1M222 26h1M224 26h1M228 26h1M240 26h1M287 26h2M293 26h1M295 26h1M301 26h1M315 26h1M31 27h1M51 27h1M71 27h1M93 27h1M138 27h1M150 27h1M190 27h1M204 27h1M206 27h2M228 27h3M236 27h1M243 27h1M286 27h1M292 27h1M296 27h2M304 27h1M313 27h1M316 27h1M340 27h1M14 28h1M31 28h1M45 28h1M49 28h1M52 28h1M71 28h1M89 28h1M95 28h1M98 28h1M118 28h1M129 28h1M138 28h1M180 28h1M186 28h1M201 28h1M211 28h1M214 28h1M216 28h1M221 28h1M228 28h1M269 28h1M309 28h1M337 28h1M15 29h1M34 29h1M53 29h1M69 29h1M72 29h1M88 29h1M104 29h1M107 29h1M111 29h1M114 29h1M121 29h1M131 29h1M145 29h1M182 29h1M195 29h1M207 29h1M217 29h1M219 29h1M222 29h1M229 29h1M231 29h1M234 29h1M244 29h1M272 29h1M304 29h1M310 29h1M316 29h1M321 29h1M333 29h1M6 30h1M15 30h1M25 30h1M31 30h1M38 30h1M63 30h1M69 30h1M89 30h1M100 30h1M102 30h1M105 30h1M109 30h1M116 30h1M121 30h1M124 30h2M127 30h2M137 30h1M143 30h1M150 30h1M152 30h1M154 30h1M160 30h1M170 30h1M176 30h1M180 30h1M194 30h1M201 30h1M223 30h1M225 30h1M248 30h2M304 30h1M329 30h1M334 30h1M15 31h1M18 31h2M28 31h1M36 31h1M61 31h1M68 31h1M74 31h1M78 31h1M85 31h1M97 31h1M104 31h1M108 31h2M113 31h1M117 31h1M126 31h2M129 31h2M151 31h1M159 31h1M161 31h1M173 31h1M176 31h1M186 31h1M191 31h1M193 31h1M197 31h1M199 31h1M220 31h1M228 31h1M288 31h1M291 31h3M296 31h1M315 31h2M318 31h1M321 31h1M335 31h1M15 32h1M37 32h1M50 32h1M61 32h1M76 32h1M90 32h2M100 32h1M127 32h1M137 32h1M150 32h1M159 32h1M173 32h1M198 32h1M200 32h2M204 32h1M221 32h1M225 32h1M235 32h1M273 32h1M313 32h1M328 32h1M2 33h1M29 33h1M57 33h1M68 33h1M72 33h1M90 33h1M117 33h1M137 33h1M141 33h1M160 33h1M162 33h2M168 33h1M196 33h1M200 33h1M228 33h1M233 33h1M293 33h1M299 33h1M302 33h1M314 33h2M318 33h1M322 33h1M343 33h1M10 34h1M22 34h1M27 34h1M29 34h1M33 34h1M35 34h2M38 34h1M46 34h1M84 34h1M96 34h1M117 34h1M148 34h1M163 34h1M176 34h1M178 34h1M180 34h1M189 34h1M198 34h1M202 34h1M218 34h1M226 34h1M286 34h1M294 34h1M313 34h1M316 34h1M330 34h1M343 34h1M13 35h1M15 35h1M63 35h1M70 35h1M78 35h1M176 35h1M188 35h1M197 35h1M210 35h1M225 35h1M236 35h1M305 35h1M311 35h1M313 35h2M329 35h1M331 35h2M342 35h1M4 36h1M9 36h1M11 36h1M14 36h1M18 36h1M28 36h1M36 36h1M44 36h1M54 36h1M84 36h1M170 36h1M191 36h1M206 36h1M214 36h1M236 36h2M241 36h1M244 36h1M300 36h1M304 36h1M313 36h2M321 36h2M0 37h1M11 37h1M15 37h1M20 37h1M26 37h1M33 37h1M41 37h1M44 37h1M49 37h1M61 37h1M69 37h1M85 37h2M171 37h1M189 37h1M193 37h1M209 37h1M240 37h1M244 37h1M247 37h1M290 37h1M292 37h1M298 37h1M316 37h1M319 37h1M329 37h1M341 37h2M349 37h1M4 38h1M7 38h1M11 38h1M13 38h1M15 38h1M21 38h1M46 38h1M70 38h1M72 38h2M76 38h1M79 38h1M87 38h1M182 38h2M188 38h1M210 38h1M244 38h2M307 38h1M318 38h1M344 38h1M350 38h1M9 39h2M24 39h1M29 39h1M36 39h1M41 39h1M61 39h1M63 39h1M80 39h1M186 39h1M189 39h1M199 39h1M202 39h1M212 39h1M237 39h1M244 39h1M285 39h1M306 39h1M322 39h1M329 39h1M336 39h1M15 40h1M17 40h1M23 40h1M31 40h1M50 40h3M55 40h1M58 40h1M71 40h1M73 40h1M75 40h1M79 40h1M84 40h2M87 40h1M174 40h1M179 40h2M183 40h1M195 40h1M197 40h1M204 40h1M206 40h1M210 40h1M217 40h1M222 40h1M227 40h2M242 40h1M286 40h1M317 40h1M332 40h1M346 40h1M14 41h1M19 41h1M21 41h1M45 41h1M57 41h1M76 41h3M86 41h1M181 41h1M187 41h1M189 41h1M193 41h1M206 41h1M208 41h1M225 41h1M233 41h1M243 41h1M245 41h1M248 41h2M270 41h1M285 41h1M301 41h1M304 41h1M313 41h2M336 41h1M349 41h1M9 42h1M22 42h2M31 42h2M47 42h1M50 42h1M69 42h1M73 42h1M86 42h1M170 42h1M177 42h1M187 42h1M197 42h2M200 42h1M220 42h2M242 42h1M298 42h1M321 42h1M330 42h1M338 42h1M350 42h1M37 43h1M56 43h1M63 43h1M72 43h2M193 43h1M224 43h1M238 43h1M248 43h1M297 43h1M316 43h1M338 43h1M50 44h1M176 44h1M195 44h1M210 44h1M220 44h1M235 44h1M267 44h1M311 44h1M200 45h1M315 45h1M284 51h1M267 52h1"/>
<path stroke="#00bfff" d="M100 0h1M109 0h1M113 0h1M44 1h1M101 1h1M107 1h1M112 1h1M120 1h1M39 2h1M89 2h1M98 2h1M102 2h1M104 2h1M107 2h2M113 2h3M139 2h1M240 2h1M23 3h1M34 3h1M48 3h1M52 3h1M77 3h1M89 3h1M105 3h1M107 3h2M20 4h1M47 4h1M107 4h2M121 4h1M89 5h1M0 6h1M27 6h1M43 6h1M49 6h1M53 6h1M74 6h1M79 6h1M90 6h1M163 6h1M166 6h1M32 7h1M45 7h1M113 7h1M129 7h1M162 7h1M239 7h1M13 8h1M35 8h1M49 8h1M137 8h1M144 8h1M163 8h1M245 8h1M23 9h1M27 9h1M55 9h1M64 9h1M116 9h1M130 9h1M5 10h1M20 10h1M23 10h1M49 10h1M53 10h1M67 10h1M77 10h1M87 10h1M158 10h2M243 10h1M3 11h1M15 11h1M47 11h1M56 11h1M61 11h1M148 11h2M157 11h1M168 11h1M41 12h1M53 12h1M56 12h1M59 12h1M64 12h1M83 12h1M151 12h1M155 12h1M157 12h1M236 12h1M23 13h1M27 13h1M41 13h1M46 13h1M54 13h2M58 13h1M60 13h1M67 13h3M84 13h1M152 13h2M167 13h2M204 13h1M0 14h1M10 14h1M26 14h1M33 14h1M45 14h1M54 14h1M67 14h1M69 14h1M73 14h1M228 14h1M234 14h1M248 14h1M1 15h1M60 15h1M66 15h2M69 15h1M77 15h1M169 15h2M234 15h1M249 15h1M351 15h1M1 16h1M4 16h1M8 16h1M29 16h1M37 16h1M45 16h1M52 16h2M57 16h1M60 16h1M73 16h1M225 16h1M248 16h1M273 16h1M343 16h2M3 17h1M6 17h1M12 17h1M15 17h1M25 17h2M39 17h2M54 17h1M56 17h1M59 17h1M62 17h2M84 17h1M170 17h1M219 17h2M235 17h1M299 17h1M328 17h1M330 17h1M342 17h1M350 17h1M2 18h1M5 18h1M20 18h2M33 18h1M40 18h2M54 18h1M58 18h2M68 18h1M170 18h1M173 18h1M203 18h1M210 18h1M221 18h1M224 18h1M289 18h1M296 18h1M314 18h1M0 19h1M4 19h1M15 19h1M26 19h1M34 19h1M41 19h1M53 19h1M57 19h1M63 19h1M71 19h1M174 19h3M179 19h1M198 19h2M203 19h1M205 19h2M209 19h1M211 19h1M214 19h2M222 19h1M225 19h1M229 19h3M288 19h1M349 19h1M9 20h1M15 20h1M51 20h1M62 20h1M83 20h1M174 20h1M186 20h1M189 20h2M205 20h2M212 20h1M249 20h1M270 20h1M285 20h1M294 20h1M297 20h1M308 20h1M318 20h1M331 20h1M334 20h1M342 20h2M8 21h1M14 21h1M44 21h1M46 21h2M50 21h1M80 21h1M209 21h1M289 21h1M293 21h1M335 21h1M338 21h1M28 22h1M57 22h1M68 22h1M71 22h1M189 22h1M209 22h1M234 22h1M242 22h1M295 22h1M343 22h1M351 22h2M31 23h2M53 23h1M62 23h1M65 23h1M68 23h5M169 23h1M180 23h1M221 23h1M224 23h1M239 23h2M294 23h1M304 23h1M328 23h1M336 23h2M345 23h1M347 23h1M4 24h1M17 24h1M28 24h1M31 24h1M33 24h1M37 24h1M52 24h1M54 24h1M62 24h1M81 24h1M89 24h1M130 24h1M169 24h1M184 24h1M189 24h1M195 24h1M209 24h1M212 24h1M228 24h1M234 24h1M238 24h1M240 24h1M242 24h1M247 24h1M288 24h1M290 24h1M317 24h2M322 24h1M335 24h1M343 24h1M347 24h1M3 25h1M23 25h1M26 25h1M28 25h1M32 25h1M36 25h1M46 25h1M50 25h1M72 25h1M93 25h1M162 25h1M184 25h1M190 25h1M202 25h1M219 25h1M224 25h1M227 25h1M290 25h1M292 25h1M310 25h2M313 25h1M318 25h1M335 25h1M339 25h1M342 25h1M11 26h1M28 26h1M38 26h1M42 26h1M63 26h1M69 26h2M103 26h1M117 26h1M122 26h1M134 26h1M151 26h1M175 26h1M205 26h1M208 26h1M211 26h1M221 26h1M223 26h1M237 26h1M245 26h1M248 26h2M255 26h1M299 26h1M308 26h1M312 26h1M319 26h1M339 26h1M343 26h1M14 27h1M19 27h1M24 27h1M47 27h1M49 27h1M63 27h2M80 27h1M115 27h1M160 27h1M162 27h1M191 27h1M209 27h1M216 27h1M223 27h3M227 27h1M233 27h2M249 27h1M335 27h1M341 27h1M8 28h1M28 28h1M30 28h1M37 28h1M43 28h1M53 28h1M64 28h1M68 28h1M82 28h1M104 28h1M119 28h1M154 28h1M158 28h1M162 28h1M179 28h1M183 28h2M190 28h2M203 28h1M208 28h1M215 28h1M231 28h1M234 28h1M248 28h1M285 28h1M289 28h1M292 28h1M296 28h1M301 28h1M305 28h1M313 28h1M321 28h1M0 29h1M3 29h1M23 29h1M37 29h1M45 29h1M58 29h1M79 29h1M95 29h1M102 29h1M110 29h1M122 29h1M129 29h1M141 29h1M147 29h1M158 29h2M179 29h1M181 29h1M192 29h1M200 29h2M218 29h1M221 29h1M223 29h1M228 29h1M235 29h1M287 29h2M294 29h1M296 29h1M307 29h1M331 29h1M341 29h1M2 30h1M9 30h1M11 30h1M13 30h1M45 30h1M49 30h1M54 30h1M64 30h1M84 30h1M97 30h1M110 30h1M119 30h1M122 30h1M126 30h1M135 30h1M144 30h1M171 30h1M191 30h1M198 30h1M220 30h1M234 30h1M291 30h1M296 30h1M314 30h1M323 30h1M2 31h2M25 31h1M38 31h1M50 31h1M58 31h1M82 31h3M90 31h1M94 31h1M115 31h1M120 31h1M122 31h1M144 31h1M147 31h1M160 31h1M198 31h1M201 31h1M218 31h2M233 31h1M235 31h1M289 31h1M295 31h1M307 31h1M323 31h1M5 32h1M16 32h2M28 32h1M32 32h1M34 32h1M49 32h1M53 32h1M56 32h1M65 32h2M68 32h1M74 32h2M78 32h2M81 32h1M83 32h3M87 32h1M134 32h1M153 32h1M155 32h1M157 32h1M160 32h1M165 32h1M186 32h1M194 32h1M215 32h1M217 32h1M219 32h2M229 32h1M234 32h1M272 32h1M294 32h1M298 32h1M317 32h2M335 32h1M351 32h1M12 33h1M16 33h1M28 33h1M44 33h1M49 33h1M51 33h1M53 33h1M70 33h1M81 33h1M84 33h1M99 33h1M102 33h1M132 33h1M161 33h1M174 33h1M180 33h1M189 33h1M201 33h1M204 33h1M236 33h1M289 33h1M294 33h1M304 33h1M328 33h1M333 33h1M340 33h2M5 34h2M31 34h1M41 34h1M71 34h2M76 34h1M182 34h1M187 34h1M196 34h1M201 34h1M210 34h1M212 34h1M215 34h1M221 34h1M230 34h2M291 34h1M323 34h1M336 34h1M338 34h1M349 34h1M3 35h1M9 35h1M18 35h2M21 35h1M29 35h1M45 35h1M49 35h2M66 35h2M76 35h1M81 35h1M102 35h1M142 35h1M150 35h1M174 35h1M178 35h1M182 35h1M187 35h1M191 35h1M193 35h1M200 35h1M211 35h1M226 35h2M229 35h1M233 35h1M241 35h1M284 35h1M291 35h1M309 35h1M330 35h1M345 35h1M347 35h1M351 35h1M8 36h1M10 36h1M29 36h2M32 36h1M45 36h1M57 36h1M60 36h1M63 36h1M66 36h1M69 36h1M177 36h1M182 36h1M185 36h1M196 36h1M203 36h1M213 36h1M225 36h2M229 36h1M235 36h1M240 36h1M246 36h1M294 36h1M305 36h1M329 36h1M336 36h1M349 36h1M3 37h1M7 37h1M9 37h1M21 37h1M25 37h1M28 37h1M32 37h1M38 37h1M45 37h1M47 37h1M50 37h2M55 37h1M64 37h1M70 37h1M72 37h2M83 37h1M184 37h1M188 37h1M190 37h1M196 37h1M202 37h1M216 37h1M227 37h1M231 37h1M242 37h2M249 37h1M302 37h1M305 37h1M307 37h1M313 37h1M317 37h1M343 37h1M351 37h1M14 38h1M16 38h1M29 38h1M35 38h1M37 38h1M45 38h1M49 38h1M51 38h1M64 38h2M75 38h1M84 38h2M171 38h1M180 38h1M193 38h1M197 38h1M199 38h1M213 38h1M225 38h1M228 38h1M235 38h1M241 38h1M292 38h1M301 38h1M303 38h1M315 38h2M320 38h1M323 38h1M343 38h1M351 38h1M26 39h1M38 39h1M64 39h1M72 39h1M87 39h1M214 39h1M226 39h1M229 39h1M231 39h1M238 39h1M247 39h1M273 39h1M301 39h1M308 39h1M6 40h1M13 40h2M18 40h1M30 40h1M36 40h1M38 40h1M41 40h1M54 40h1M56 40h2M70 40h1M182 40h1M193 40h1M205 40h1M207 40h1M234 40h1M237 40h1M244 40h1M307 40h1M320 40h1M349 40h1M3 41h1M11 41h1M13 41h1M16 41h2M23 41h2M40 41h1M42 41h1M46 41h1M48 41h1M54 41h1M61 41h1M64 41h2M67 41h2M87 41h1M170 41h1M188 41h1M190 41h1M194 41h1M226 41h1M230 41h1M247 41h1M284 41h1M302 41h1M334 41h1M19 42h1M30 42h1M34 42h1M55 42h1M59 42h1M62 42h1M81 42h2M85 42h1M179 42h1M185 42h2M194 42h1M215 42h3M226 42h1M229 42h1M231 42h1M241 42h1M303 42h1M341 42h1M3 43h2M8 43h1M64 43h1M87 43h1M242 43h1M246 43h1M306 43h1M335 43h1M29 44h1M37 44h1M42 44h1M49 44h1M188 44h1M207 44h1M246 44h1M341 44h1"/>
<path stroke="#00d9ff" d="M92 0h1M94 0h1M97 0h1M105 0h2M92 1h1M94 1h2M100 1h1M104 1h1M106 1h1M108 1h1M113 1h2M81 2h1M120 2h1M47 3h1M86 3h1M95 3h1M103 3h1M119 3h3M83 4h1M90 4h1M92 4h1M243 4h1M19 5h1M53 5h1M88 5h1M122 5h1M135 5h1M80 6h1M93 6h1M113 6h1M121 6h2M136 6h1M139 6h1M162 6h1M164 6h1M3 7h1M69 7h1M92 7h1M140 7h1M164 7h1M80 8h1M126 8h1M133 8h1M140 8h1M166 8h1M238 8h1M44 9h1M62 9h1M133 9h1M137 9h1M144 9h2M158 9h2M165 9h1M42 10h1M57 10h1M64 10h1M69 10h1M79 10h1M129 10h2M146 10h1M245 10h1M1 11h1M13 11h1M50 11h1M76 11h1M81 11h2M126 11h1M131 11h1M211 11h1M23 12h1M27 12h1M47 12h1M55 12h1M74 12h1M76 12h1M80 12h1M85 12h1M149 12h2M158 12h1M169 12h1M211 12h1M246 12h1M38 13h1M47 13h1M80 13h2M154 13h1M247 13h1M1 14h1M8 14h1M17 14h1M38 14h1M68 14h1M77 14h1M154 14h1M168 14h1M249 14h1M23 15h1M30 15h1M33 15h1M37 15h2M41 15h2M45 15h1M61 15h1M200 15h1M245 15h1M10 16h1M15 16h1M33 16h1M50 16h1M55 16h1M68 16h1M70 16h1M78 16h1M19 17h1M52 17h1M57 17h1M60 17h1M71 17h1M73 17h1M78 17h1M171 17h1M195 17h1M211 17h1M234 17h1M249 17h1M255 17h1M323 17h1M4 18h1M9 18h1M14 18h1M17 18h3M23 18h1M27 18h1M37 18h1M45 18h1M60 18h2M67 18h1M175 18h1M178 18h1M195 18h1M204 18h1M211 18h1M225 18h1M227 18h1M308 18h1M318 18h1M14 19h1M18 19h2M28 19h1M38 19h1M47 19h1M51 19h1M55 19h1M66 19h1M169 19h1M177 19h1M190 19h1M200 19h1M227 19h2M245 19h1M305 19h1M337 19h1M343 19h1M4 20h1M6 20h1M17 20h1M35 20h1M40 20h1M44 20h1M53 20h1M55 20h1M59 20h1M61 20h1M73 20h1M183 20h1M191 20h1M201 20h1M230 20h1M233 20h1M295 20h1M311 20h1M340 20h1M348 20h1M2 21h1M4 21h1M28 21h1M34 21h1M38 21h1M42 21h1M55 21h1M58 21h1M63 21h1M65 21h1M70 21h1M81 21h1M83 21h1M223 21h1M226 21h1M231 21h2M235 21h1M247 21h1M336 21h1M347 21h1M350 21h1M0 22h1M3 22h1M13 22h1M17 22h1M23 22h1M32 22h2M45 22h1M61 22h2M184 22h1M202 22h1M223 22h2M228 22h1M230 22h1M236 22h1M239 22h1M243 22h1M249 22h1M316 22h1M344 22h1M3 23h2M12 23h1M26 23h1M40 23h1M51 23h1M225 23h1M238 23h1M246 23h2M249 23h1M6 24h1M19 24h1M39 24h1M43 24h2M48 24h1M50 24h1M71 24h1M103 24h1M144 24h1M206 24h1M211 24h1M235 24h1M237 24h1M297 24h1M299 24h1M308 24h2M348 24h1M4 25h1M6 25h1M14 25h1M41 25h2M47 25h3M69 25h1M71 25h1M83 25h1M130 25h2M149 25h1M160 25h1M207 25h1M288 25h1M307 25h1M323 25h1M332 25h1M337 25h1M340 25h1M343 25h1M4 26h2M29 26h1M33 26h1M47 26h1M51 26h1M65 26h1M92 26h2M112 26h1M119 26h1M123 26h1M129 26h1M136 26h1M143 26h1M157 26h1M162 26h1M184 26h1M204 26h1M207 26h1M229 26h1M239 26h1M241 26h1M292 26h1M297 26h1M323 26h1M341 26h2M347 26h1M352 26h1M6 27h1M8 27h1M11 27h1M25 27h1M33 27h1M41 27h1M52 27h2M56 27h1M62 27h1M69 27h1M77 27h1M112 27h1M137 27h1M144 27h2M157 27h1M169 27h1M183 27h2M241 27h1M267 27h1M302 27h1M308 27h1M315 27h1M322 27h1M328 27h1M3 28h1M5 28h1M10 28h1M15 28h1M19 28h1M41 28h1M48 28h1M59 28h1M77 28h1M90 28h1M111 28h1M114 28h1M126 28h1M142 28h1M151 28h1M160 28h1M173 28h1M196 28h1M199 28h1M206 28h1M218 28h1M220 28h1M226 28h1M230 28h1M245 28h1M255 28h1M288 28h1M300 28h1M304 28h1M329 28h2M343 28h1M7 29h1M11 29h1M13 29h1M19 29h1M21 29h2M28 29h1M32 29h1M35 29h2M61 29h1M66 29h1M77 29h1M83 29h1M92 29h1M94 29h1M100 29h1M119 29h1M124 29h2M128 29h1M134 29h1M142 29h3M151 29h1M155 29h2M167 29h1M177 29h1M186 29h1M220 29h1M232 29h2M312 29h1M328 29h1M343 29h1M7 30h1M19 30h1M27 30h2M32 30h1M41 30h1M46 30h1M50 30h1M53 30h1M58 30h1M60 30h2M68 30h1M75 30h1M79 30h1M92 30h1M96 30h1M117 30h1M131 30h1M136 30h1M138 30h2M156 30h1M167 30h1M173 30h2M178 30h1M185 30h1M189 30h1M193 30h1M197 30h1M200 30h1M228 30h1M231 30h1M295 30h1M299 30h1M318 30h1M330 30h1M5 31h1M9 31h1M11 31h1M13 31h1M26 31h1M43 31h1M52 31h3M56 31h2M66 31h2M69 31h1M71 31h1M87 31h1M96 31h1M132 31h1M139 31h1M141 31h1M145 31h1M153 31h1M164 31h1M166 31h1M168 31h1M182 31h1M189 31h1M196 31h1M200 31h1M230 31h1M234 31h1M300 31h1M337 31h1M342 31h1M349 31h1M351 31h1M1 32h1M3 32h1M7 32h1M12 32h1M14 32h1M18 32h1M36 32h1M41 32h2M45 32h1M52 32h1M63 32h1M67 32h1M86 32h1M140 32h1M154 32h1M158 32h1M171 32h1M189 32h1M193 32h1M227 32h1M231 32h1M245 32h1M274 32h1M284 32h1M321 32h1M329 32h1M332 32h2M337 32h2M0 33h1M25 33h2M33 33h2M37 33h1M47 33h1M50 33h1M56 33h1M60 33h1M64 33h2M71 33h1M74 33h1M78 33h1M94 33h1M110 33h1M140 33h1M188 33h1M199 33h1M219 33h1M227 33h1M231 33h1M274 33h1M284 33h1M301 33h1M313 33h1M317 33h1M336 33h1M342 33h1M37 34h1M54 34h1M206 34h1M211 34h1M216 34h1M227 34h1M288 34h1M300 34h2M312 34h1M315 34h1M317 34h1M339 34h2M342 34h1M347 34h1M5 35h1M10 35h1M24 35h1M30 35h1M35 35h1M44 35h1M46 35h1M48 35h1M51 35h1M55 35h1M59 35h1M68 35h1M71 35h1M77 35h1M122 35h1M186 35h1M212 35h1M216 35h1M220 35h1M300 35h1M328 35h1M333 35h1M335 35h1M338 35h1M348 35h1M350 35h1M6 36h1M12 36h2M16 36h1M27 36h1M37 36h1M43 36h1M55 36h1M59 36h1M74 36h1M87 36h1M187 36h1M198 36h1M200 36h1M209 36h2M212 36h1M216 36h1M234 36h1M248 36h1M284 36h2M287 36h1M306 36h1M315 36h1M334 36h1M350 36h1M2 37h1M4 37h1M12 37h1M17 37h1M22 37h1M34 37h1M39 37h1M67 37h1M87 37h1M194 37h1M199 37h1M206 37h1M208 37h1M308 37h1M314 37h1M338 37h1M0 38h1M17 38h3M22 38h1M24 38h1M32 38h1M38 38h1M40 38h1M58 38h1M61 38h1M67 38h2M78 38h1M83 38h1M86 38h1M186 38h1M191 38h1M194 38h1M239 38h1M242 38h1M246 38h1M288 38h1M296 38h1M322 38h1M333 38h1M348 38h1M2 39h2M7 39h1M16 39h1M21 39h1M27 39h1M30 39h1M45 39h1M51 39h1M53 39h2M69 39h1M74 39h1M83 39h2M194 39h1M204 39h1M216 39h1M240 39h1M246 39h1M286 39h1M321 39h1M332 39h2M0 40h1M4 40h1M9 40h1M12 40h1M21 40h1M27 40h1M40 40h1M53 40h1M61 40h1M63 40h1M181 40h1M226 40h1M231 40h1M262 40h1M303 40h1M312 40h1M316 40h1M9 41h1M27 41h1M30 41h1M35 41h1M37 41h1M50 41h1M79 41h1M197 41h1M203 41h1M222 41h1M229 41h1M231 41h1M235 41h1M308 41h1M317 41h1M321 41h1M348 41h1M12 42h1M24 42h1M39 42h2M45 42h1M49 42h1M63 42h1M67 42h2M235 42h1M244 42h1M246 42h1M24 43h1M59 43h1M174 43h1M244 43h1M291 43h1M27 44h1M36 44h1M268 48h1M284 56h1"/>
<path stroke="#00f2ff" d="M89 0h1M93 0h1M103 0h1M90 1h1M98 1h1M105 1h1M109 1h1M90 2h1M92 2h2M97 2h1M118 2h1M123 2h1M93 3h2M101 3h1M115 3h1M241 3h1M96 4h1M104 4h1M110 4h1M116 4h1M100 5h1M103 5h1M107 5h1M240 5h1M115 6h1M124 6h1M107 7h1M127 7h1M136 7h1M139 7h1M144 7h2M244 7h1M48 8h1M56 8h1M130 8h1M134 8h1M239 8h1M69 9h1M77 9h1M82 9h1M131 9h2M134 9h1M56 10h1M76 10h1M80 10h2M123 10h1M131 10h1M147 10h1M45 11h1M57 11h1M74 11h1M79 11h2M83 11h1M125 11h1M128 11h1M239 11h1M243 11h1M49 12h1M81 12h1M196 12h1M14 13h1M17 13h1M42 13h1M77 13h1M79 13h1M236 13h1M245 13h1M13 14h1M19 14h1M42 14h1M49 14h1M78 14h1M81 14h1M85 14h1M341 14h1M4 15h1M17 15h1M19 15h1M21 15h1M26 15h1M28 15h1M39 15h1M47 15h1M50 15h1M59 15h1M82 15h2M11 16h1M26 16h1M47 16h1M59 16h1M77 16h1M84 16h1M151 16h1M178 16h1M181 16h1M333 16h1M345 16h1M11 17h1M14 17h1M20 17h2M30 17h1M37 17h1M47 17h1M55 17h1M69 17h1M310 17h1M322 17h1M337 17h1M347 17h1M11 18h1M25 18h1M47 18h1M50 18h1M52 18h1M69 18h2M80 18h2M172 18h1M213 18h1M228 18h1M230 18h1M245 18h1M323 18h1M345 18h1M1 19h1M8 19h1M16 19h1M23 19h1M27 19h1M37 19h1M39 19h2M42 19h1M61 19h1M68 19h1M85 19h1M170 19h1M180 19h2M193 19h1M210 19h1M219 19h1M223 19h2M232 19h1M301 19h1M1 20h1M7 20h1M26 20h1M37 20h1M50 20h1M54 20h1M57 20h1M63 20h1M66 20h1M68 20h1M84 20h1M175 20h1M179 20h2M184 20h1M188 20h1M197 20h2M207 20h2M210 20h1M227 20h1M234 20h1M246 20h1M301 20h1M320 20h1M351 20h1M0 21h1M3 21h1M9 21h1M21 21h1M23 21h1M33 21h1M37 21h1M40 21h1M54 21h1M68 21h2M86 21h1M174 21h1M189 21h1M192 21h1M212 21h1M221 21h1M234 21h1M236 21h1M295 21h1M315 21h1M2 22h1M4 22h1M6 22h1M8 22h1M11 22h1M27 22h1M39 22h2M51 22h2M64 22h2M67 22h1M69 22h1M87 22h1M180 22h1M231 22h1M235 22h1M238 22h1M240 22h1M255 22h1M304 22h1M317 22h1M336 22h1M341 22h1M347 22h1M6 23h1M8 23h1M13 23h1M15 23h1M34 23h1M36 23h1M49 23h1M57 23h1M64 23h1M73 23h1M86 23h2M89 23h1M130 23h1M151 23h1M183 23h2M202 23h1M205 23h2M208 23h1M212 23h1M334 23h1M5 24h1M11 24h1M13 24h1M23 24h1M35 24h2M45 24h1M57 24h1M72 24h2M88 24h1M93 24h1M104 24h1M113 24h1M136 24h1M180 24h1M183 24h1M205 24h1M221 24h1M223 24h3M286 24h1M291 24h1M293 24h1M331 24h1M337 24h1M8 25h1M15 25h1M17 25h1M19 25h1M51 25h2M57 25h1M61 25h1M65 25h1M70 25h1M75 25h1M80 25h1M84 25h1M98 25h1M103 25h1M115 25h1M138 25h1M158 25h1M169 25h1M186 25h1M189 25h1M199 25h1M204 25h1M209 25h1M228 25h1M234 25h2M237 25h1M243 25h1M300 25h1M315 25h2M17 26h1M19 26h1M31 26h1M37 26h1M39 26h1M44 26h1M59 26h1M62 26h1M64 26h1M89 26h2M97 26h1M108 26h1M110 26h1M114 26h1M120 26h1M130 26h1M137 26h2M141 26h2M145 26h2M149 26h1M183 26h1M186 26h1M195 26h1M199 26h1M206 26h1M217 26h1M232 26h1M294 26h1M4 27h2M17 27h1M32 27h1M35 27h2M42 27h1M48 27h1M50 27h1M61 27h1M65 27h2M70 27h1M73 27h1M81 27h1M89 27h1M92 27h1M95 27h1M104 27h2M127 27h1M131 27h1M136 27h1M146 27h2M152 27h1M158 27h1M181 27h1M199 27h2M210 27h1M213 27h1M248 27h1M287 27h2M293 27h1M298 27h1M336 27h2M6 28h2M11 28h1M24 28h1M27 28h1M42 28h1M44 28h1M56 28h3M60 28h1M63 28h1M65 28h2M70 28h1M72 28h1M78 28h1M83 28h1M85 28h1M87 28h2M96 28h2M108 28h1M110 28h1M120 28h1M124 28h1M127 28h1M134 28h1M136 28h1M140 28h1M146 28h1M175 28h1M195 28h1M205 28h1M229 28h1M233 28h1M244 28h1M303 28h1M308 28h1M332 28h1M334 28h2M4 29h1M18 29h1M26 29h1M29 29h1M31 29h1M42 29h1M44 29h1M49 29h1M52 29h1M57 29h1M65 29h1M68 29h1M74 29h1M80 29h1M93 29h1M96 29h2M101 29h1M106 29h1M109 29h1M112 29h1M117 29h1M123 29h1M127 29h1M139 29h1M166 29h1M173 29h1M176 29h1M184 29h1M189 29h1M191 29h1M193 29h2M196 29h3M214 29h2M301 29h2M305 29h1M315 29h1M329 29h1M336 29h2M10 30h1M14 30h1M23 30h1M30 30h1M35 30h1M37 30h1M47 30h1M52 30h1M57 30h1M70 30h3M80 30h1M85 30h1M90 30h1M108 30h1M111 30h1M113 30h1M120 30h1M132 30h1M142 30h1M146 30h1M153 30h1M155 30h1M168 30h1M172 30h1M199 30h1M230 30h1M284 30h1M300 30h2M322 30h1M336 30h1M340 30h1M0 31h1M7 31h1M22 31h2M27 31h1M31 31h1M33 31h2M44 31h1M48 31h2M75 31h2M81 31h1M116 31h1M137 31h1M140 31h1M148 31h1M167 31h1M187 31h1M227 31h1M231 31h1M294 31h1M312 31h2M319 31h1M322 31h1M331 31h1M336 31h1M348 31h1M0 32h1M27 32h1M29 32h2M35 32h1M38 32h1M57 32h1M59 32h1M71 32h1M94 32h1M156 32h1M162 32h2M188 32h1M226 32h1M228 32h1M233 32h1M316 32h1M323 32h1M347 32h1M4 33h1M8 33h1M22 33h1M24 33h1M30 33h1M38 33h1M42 33h1M46 33h1M59 33h1M66 33h1M76 33h1M85 33h1M172 33h1M178 33h1M198 33h1M216 33h2M221 33h2M226 33h1M288 33h1M334 33h1M1 34h1M11 34h2M14 34h1M17 34h1M19 34h1M43 34h1M45 34h1M51 34h1M53 34h1M55 34h1M57 34h1M69 34h2M199 34h1M207 34h2M220 34h1M233 34h1M267 34h1M292 34h1M321 34h1M331 34h1M341 34h1M6 35h1M34 35h1M37 35h1M41 35h1M52 35h1M205 35h1M207 35h1M214 35h1M288 35h1M320 35h1M323 35h1M3 36h1M15 36h1M23 36h4M47 36h2M53 36h1M56 36h1M62 36h1M70 36h2M184 36h1M188 36h1M197 36h1M204 36h1M219 36h1M222 36h1M228 36h1M231 36h1M267 36h1M296 36h1M298 36h1M312 36h1M343 36h1M351 36h1M1 37h1M16 37h1M23 37h2M35 37h1M59 37h2M66 37h1M179 37h1M191 37h1M233 37h1M241 37h1M246 37h1M296 37h1M315 37h1M337 37h1M350 37h1M1 38h1M3 38h1M8 38h2M20 38h1M23 38h1M31 38h1M33 38h1M54 38h1M57 38h1M63 38h1M71 38h1M181 38h1M187 38h1M202 38h1M205 38h1M208 38h1M214 38h1M226 38h1M231 38h1M237 38h2M240 38h1M294 38h1M314 38h1M328 38h1M332 38h1M346 38h1M6 39h1M25 39h1M32 39h1M34 39h2M40 39h1M46 39h1M58 39h1M71 39h1M76 39h1M188 39h1M190 39h1M196 39h1M203 39h1M205 39h1M213 39h1M218 39h2M225 39h1M227 39h2M242 39h1M248 39h1M297 39h1M331 39h1M10 40h2M25 40h1M29 40h1M37 40h1M45 40h1M49 40h1M66 40h1M81 40h1M83 40h1M86 40h1M203 40h1M223 40h1M225 40h1M229 40h2M235 40h1M247 40h1M336 40h1M2 41h1M25 41h1M34 41h1M47 41h1M49 41h1M63 41h1M70 41h1M72 41h1M186 41h1M199 41h1M219 41h1M223 41h1M232 41h1M346 41h1M350 41h1M4 42h1M18 42h1M25 42h1M37 42h1M56 42h1M64 42h1M71 42h1M79 42h1M83 42h1M211 42h1M219 42h1M232 42h1M335 42h1M30 43h1M285 43h1M307 43h1M44 44h1M47 44h1M41 45h1M284 45h1M267 54h1M267 56h1"/>
<path stroke="#00fff2" d="M91 0h1M95 0h1M117 0h1M91 1h1M93 1h1M88 2h1M94 2h1M106 2h1M116 2h1M100 3h1M106 3h1M112 3h1M114 3h1M88 4h1M100 4h3M29 5h1M92 5h1M99 5h1M113 5h1M121 5h1M239 5h1M107 6h1M110 6h1M239 6h1M47 7h1M90 7h1M103 7h1M121 7h1M138 7h1M45 8h1M53 8h1M92 8h1M102 8h1M143 8h1M147 8h1M1 9h1M149 9h1M161 9h1M244 9h2M86 10h1M137 10h1M166 10h1M75 11h1M123 11h1M129 11h1M165 11h1M167 11h1M13 12h1M48 12h1M129 12h1M148 12h1M168 12h1M56 13h1M157 13h1M50 14h1M58 14h1M156 14h1M49 15h1M58 15h1M64 15h1M74 15h1M84 15h1M153 15h1M168 15h1M238 15h1M244 15h1M248 15h1M24 16h1M30 16h1M56 16h1M64 16h1M79 16h1M82 16h1M168 16h1M183 16h1M236 16h1M238 16h1M1 17h1M9 17h2M17 17h1M46 17h1M58 17h1M68 17h1M70 17h1M75 17h1M80 17h1M172 17h1M185 17h1M238 17h1M321 17h1M8 18h1M10 18h1M42 18h1M55 18h1M73 18h1M77 18h2M169 18h1M171 18h1M187 18h1M226 18h1M234 18h2M255 18h1M335 18h1M342 18h1M11 19h2M17 19h1M20 19h1M30 19h1M52 19h1M54 19h1M58 19h3M69 19h1M178 19h1M187 19h2M197 19h1M207 19h1M220 19h1M236 19h1M311 19h1M5 20h1M13 20h1M18 20h3M22 20h2M25 20h1M29 20h1M33 20h1M39 20h1M47 20h1M52 20h1M56 20h1M69 20h1M71 20h1M169 20h1M176 20h1M181 20h1M187 20h1M193 20h1M199 20h1M204 20h1M209 20h1M211 20h1M215 20h1M221 20h1M224 20h1M236 20h1M245 20h1M307 20h1M329 20h1M18 21h1M22 21h1M29 21h1M39 21h1M45 21h1M61 21h1M66 21h1M77 21h1M191 21h1M198 21h1M202 21h1M219 21h1M222 21h1M227 21h1M308 21h1M321 21h2M337 21h1M9 22h1M12 22h1M42 22h1M44 22h1M47 22h1M54 22h1M58 22h2M63 22h1M66 22h1M70 22h1M80 22h1M83 22h1M104 22h1M169 22h1M175 22h1M182 22h2M187 22h1M201 22h1M207 22h2M216 22h1M221 22h2M225 22h1M229 22h1M233 22h1M292 22h1M5 23h1M7 23h1M9 23h2M18 23h2M23 23h1M27 23h1M35 23h1M39 23h1M47 23h1M50 23h1M52 23h1M56 23h1M58 23h1M80 23h1M84 23h1M122 23h1M152 23h1M190 23h1M196 23h1M204 23h1M209 23h1M223 23h1M227 23h1M234 23h2M242 23h1M244 23h1M307 23h1M318 23h1M330 23h1M333 23h1M351 23h1M8 24h1M10 24h1M14 24h1M41 24h1M53 24h1M65 24h1M69 24h1M74 24h2M77 24h1M80 24h1M110 24h1M118 24h1M129 24h1M175 24h1M179 24h1M188 24h1M196 24h1M199 24h1M201 24h1M203 24h1M207 24h1M210 24h1M216 24h2M226 24h1M229 24h1M301 24h1M319 24h1M321 24h1M345 24h1M350 24h1M0 25h1M2 25h1M5 25h1M22 25h1M25 25h1M29 25h1M35 25h1M39 25h1M44 25h1M53 25h1M56 25h1M64 25h1M73 25h1M85 25h1M89 25h1M95 25h1M97 25h1M104 25h2M113 25h1M139 25h1M146 25h2M150 25h1M180 25h1M201 25h1M205 25h1M212 25h1M225 25h2M233 25h1M241 25h1M248 25h1M291 25h1M293 25h1M330 25h1M334 25h1M9 26h1M12 26h1M14 26h2M22 26h1M25 26h1M34 26h1M36 26h1M49 26h1M53 26h1M56 26h1M71 26h1M74 26h1M80 26h1M82 26h1M84 26h1M87 26h1M91 26h1M94 26h1M105 26h1M109 26h1M115 26h1M128 26h1M144 26h1M170 26h1M189 26h1M191 26h1M213 26h3M218 26h1M231 26h1M284 26h1M313 26h1M316 26h1M335 26h2M346 26h1M1 27h1M3 27h1M9 27h2M13 27h1M15 27h1M21 27h2M29 27h1M38 27h1M43 27h1M45 27h2M59 27h1M74 27h1M87 27h1M91 27h1M94 27h1M96 27h1M98 27h2M103 27h1M110 27h2M122 27h1M126 27h1M132 27h1M135 27h1M140 27h1M142 27h1M176 27h1M179 27h1M182 27h1M185 27h1M188 27h1M192 27h1M194 27h1M201 27h1M214 27h1M217 27h1M219 27h1M221 27h1M226 27h1M231 27h2M237 27h1M245 27h1M301 27h1M309 27h1M311 27h1M318 27h2M331 27h1M0 28h1M2 28h1M4 28h1M13 28h1M17 28h1M22 28h1M26 28h1M29 28h1M34 28h1M36 28h1M61 28h1M69 28h1M74 28h1M80 28h2M93 28h2M101 28h1M106 28h1M112 28h1M123 28h1M137 28h1M152 28h1M155 28h1M167 28h1M169 28h2M176 28h1M182 28h1M185 28h1M194 28h1M200 28h1M316 28h1M319 28h1M333 28h1M341 28h1M5 29h1M10 29h1M33 29h1M46 29h1M51 29h1M55 29h1M60 29h1M63 29h1M81 29h1M84 29h3M99 29h1M105 29h1M116 29h1M120 29h1M126 29h1M132 29h1M135 29h1M140 29h1M150 29h1M161 29h1M163 29h1M168 29h1M171 29h1M187 29h2M226 29h1M230 29h1M241 29h1M317 29h1M323 29h1M330 29h1M339 29h1M342 29h1M17 30h1M26 30h1M29 30h1M42 30h1M51 30h1M56 30h1M65 30h1M74 30h1M83 30h1M86 30h2M129 30h1M141 30h1M148 30h1M157 30h1M164 30h1M229 30h1M233 30h1M267 30h1M328 30h1M333 30h1M4 31h1M8 31h1M24 31h1M42 31h1M60 31h1M86 31h1M156 31h1M162 31h2M221 31h2M224 31h1M232 31h1M333 31h1M338 31h1M6 32h1M8 32h1M21 32h1M24 32h1M31 32h1M55 32h1M60 32h1M148 32h1M166 32h1M196 32h1M223 32h1M267 32h1M339 32h1M1 33h1M3 33h1M10 33h1M14 33h1M17 33h2M20 33h1M23 33h1M27 33h1M31 33h1M35 33h1M54 33h2M63 33h1M67 33h1M171 33h1M177 33h1M295 33h1M346 33h1M349 33h1M351 33h1M13 34h1M25 34h1M32 34h1M49 34h1M62 34h2M66 34h1M68 34h1M200 34h1M205 34h1M228 34h1M234 34h1M322 34h1M4 35h1M16 35h2M23 35h1M25 35h2M32 35h1M38 35h1M40 35h1M42 35h1M53 35h2M60 35h2M73 35h1M165 35h1M199 35h1M201 35h1M208 35h1M221 35h1M223 35h1M232 35h1M234 35h2M321 35h1M349 35h1M1 36h1M21 36h1M40 36h1M72 36h2M85 36h1M201 36h2M205 36h1M211 36h1M335 36h1M337 36h1M347 36h2M5 37h1M30 37h1M40 37h1M54 37h1M56 37h1M65 37h1M197 37h1M204 37h1M207 37h1M214 37h1M219 37h1M223 37h1M226 37h1M228 37h2M294 37h1M303 37h1M331 37h1M333 37h1M345 37h2M5 38h1M30 38h1M34 38h1M39 38h1M42 38h1M44 38h1M47 38h2M53 38h1M55 38h1M59 38h1M66 38h1M206 38h1M211 38h1M233 38h1M329 38h1M336 38h1M4 39h1M11 39h1M22 39h1M31 39h1M39 39h1M59 39h2M66 39h1M70 39h1M184 39h1M187 39h1M209 39h1M222 39h1M224 39h1M303 39h1M339 39h1M1 40h1M3 40h1M24 40h1M26 40h1M32 40h1M34 40h1M48 40h1M59 40h2M68 40h2M72 40h1M76 40h1M202 40h1M212 40h1M214 40h1M220 40h1M233 40h1M238 40h1M246 40h1M289 40h1M296 40h1M304 40h1M5 41h2M15 41h1M38 41h2M51 41h1M55 41h2M73 41h1M81 41h1M84 41h1M202 41h1M207 41h1M214 41h2M217 41h1M220 41h1M238 41h1M240 41h1M242 41h1M333 41h1M35 42h1M53 42h1M238 42h1M286 43h1M321 43h1M64 44h1M301 44h1M284 52h1M267 53h1"/>
<path stroke="#00ffd9" d="M111 0h1M88 1h1M97 1h1M118 1h1M101 2h1M105 2h1M119 2h1M18 3h1M92 3h1M97 3h1M104 3h1M109 3h1M117 3h2M240 3h1M91 4h1M93 4h1M99 4h1M109 4h1M120 4h1M74 5h1M96 5h1M110 5h1M112 5h1M243 5h1M21 6h1M92 6h1M99 6h1M103 6h1M242 6h1M101 7h1M115 7h1M160 7h1M238 7h1M99 8h1M162 8h1M127 9h2M162 9h2M166 9h1M238 9h1M124 10h1M127 10h1M85 11h1M158 11h1M237 11h1M75 12h1M86 12h1M131 12h1M165 12h1M167 12h1M237 12h3M48 13h2M75 13h1M129 13h1M147 13h1M149 13h1M155 13h1M237 13h2M48 14h1M56 14h1M82 14h1M84 14h1M93 14h1M151 14h1M157 14h1M13 15h1M56 15h1M73 15h1M76 15h1M78 15h1M154 15h1M156 15h1M165 15h1M17 16h1M19 16h1M39 16h1M76 16h1M80 16h1M85 16h1M141 16h1M244 16h2M247 16h1M249 16h1M347 16h1M4 17h1M42 17h1M76 17h1M167 17h1M169 17h1M244 17h2M248 17h1M29 18h2M56 18h2M87 18h1M177 18h1M229 18h1M330 18h1M7 19h1M9 19h2M22 19h1M25 19h1M29 19h1M56 19h1M78 19h1M84 19h1M173 19h1M186 19h1M196 19h1M201 19h1M226 19h1M238 19h1M330 19h1M340 19h1M2 20h1M21 20h1M30 20h1M41 20h1M60 20h1M64 20h1M67 20h1M75 20h1M87 20h1M170 20h2M173 20h1M178 20h1M182 20h1M203 20h1M225 20h1M229 20h1M248 20h1M303 20h1M323 20h1M333 20h1M337 20h1M11 21h1M13 21h1M19 21h1M24 21h1M35 21h2M52 21h2M57 21h1M59 21h1M64 21h1M71 21h1M169 21h2M173 21h1M175 21h1M180 21h1M187 21h1M190 21h1M196 21h1M203 21h1M205 21h1M229 21h1M309 21h1M323 21h1M330 21h1M345 21h2M1 22h1M5 22h1M10 22h1M15 22h1M25 22h1M53 22h1M55 22h1M60 22h1M82 22h1M93 22h1M190 22h1M192 22h1M195 22h1M204 22h1M217 22h1M247 22h1M331 22h1M350 22h1M11 23h1M14 23h1M22 23h1M29 23h2M41 23h1M45 23h2M54 23h1M66 23h1M74 23h2M82 23h2M90 23h1M118 23h1M138 23h1M175 23h1M217 23h1M222 23h1M228 23h3M232 23h1M236 23h1M241 23h1M245 23h1M319 23h1M331 23h1M346 23h1M2 24h1M12 24h1M21 24h1M25 24h1M27 24h1M29 24h1M40 24h1M56 24h1M84 24h1M87 24h1M97 24h1M119 24h1M131 24h1M134 24h1M142 24h1M149 24h1M176 24h2M185 24h1M198 24h1M200 24h1M227 24h1M232 24h2M284 24h1M342 24h1M344 24h1M1 25h1M9 25h1M24 25h1M30 25h1M58 25h1M87 25h2M92 25h1M106 25h2M110 25h1M121 25h1M124 25h1M177 25h1M179 25h1M183 25h1M191 25h1M206 25h1M208 25h1M231 25h2M246 25h1M297 25h1M301 25h1M328 25h1M344 25h1M347 25h1M351 25h1M1 26h1M8 26h1M10 26h1M26 26h2M41 26h1M43 26h1M73 26h1M77 26h1M98 26h2M101 26h1M104 26h1M131 26h1M169 26h1M230 26h1M246 26h1M318 26h1M351 26h1M0 27h1M23 27h1M30 27h1M39 27h1M44 27h1M60 27h1M68 27h1M79 27h1M82 27h4M90 27h1M109 27h1M117 27h1M121 27h1M129 27h2M155 27h1M161 27h1M167 27h1M173 27h1M177 27h1M195 27h2M203 27h1M222 27h1M323 27h1M351 27h1M9 28h1M16 28h1M21 28h1M23 28h1M25 28h1M32 28h2M35 28h1M38 28h3M46 28h2M73 28h1M75 28h1M79 28h1M84 28h1M91 28h1M105 28h1M116 28h1M121 28h1M125 28h1M128 28h1M135 28h1M147 28h1M157 28h1M161 28h1M171 28h1M181 28h1M188 28h1M193 28h1M197 28h1M222 28h1M320 28h1M6 29h1M12 29h1M14 29h1M17 29h1M25 29h1M30 29h1M38 29h1M40 29h1M54 29h1M59 29h1M71 29h1M75 29h1M78 29h1M87 29h1M136 29h1M146 29h1M152 29h1M154 29h1M157 29h1M160 29h1M174 29h1M199 29h1M308 29h1M347 29h1M0 30h2M18 30h1M20 30h1M24 30h1M55 30h1M62 30h1M67 30h1M78 30h1M147 30h1M159 30h1M162 30h2M166 30h1M258 30h1M292 30h1M316 30h1M339 30h1M349 30h1M1 31h1M10 31h1M12 31h1M16 31h2M21 31h1M46 31h1M51 31h1M65 31h1M70 31h1M178 31h1M223 31h1M229 31h1M287 31h1M343 31h1M4 32h1M10 32h1M20 32h1M23 32h1M43 32h1M70 32h1M172 32h1M199 32h1M287 32h1M289 32h1M292 32h1M295 32h1M315 32h1M336 32h1M345 32h1M349 32h1M6 33h2M19 33h1M21 33h1M40 33h1M232 33h1M287 33h1M316 33h1M337 33h1M339 33h1M16 34h1M21 34h1M34 34h1M48 34h1M65 34h1M219 34h1M222 34h3M304 34h1M329 34h1M333 34h1M346 34h1M1 35h1M8 35h1M22 35h1M43 35h1M62 35h1M204 35h1M206 35h1M209 35h1M218 35h1M228 35h1M231 35h1M292 35h1M337 35h1M17 36h1M19 36h2M35 36h1M49 36h1M51 36h1M199 36h1M218 36h1M224 36h1M227 36h1M345 36h1M8 37h1M13 37h1M31 37h1M42 37h1M200 37h1M203 37h1M205 37h1M211 37h1M220 37h1M222 37h1M224 37h1M235 37h1M238 37h1M347 37h1M25 38h1M60 38h1M81 38h1M204 38h1M209 38h1M219 38h2M227 38h1M17 39h1M44 39h1M47 39h2M56 39h1M65 39h1M67 39h1M86 39h1M207 39h1M220 39h1M233 39h1M304 39h1M20 40h1M35 40h1M42 40h1M44 40h1M65 40h1M184 40h1M191 40h1M208 40h1M211 40h1M213 40h1M215 40h1M232 40h1M240 40h1M1 41h1M8 41h1M31 41h1M44 41h1M83 41h1M209 41h1M211 41h1M218 41h1M8 42h1M323 42h1M232 43h1M255 45h1M284 50h1"/>
<path stroke="#00ffbf" d="M88 0h1M118 0h1M91 2h1M95 2h1M88 3h1M91 3h1M96 3h1M98 3h1M103 4h1M117 4h1M119 4h1M90 5h1M117 5h1M89 6h1M101 6h2M116 6h1M56 7h1M93 7h2M110 7h1M112 7h1M135 7h1M141 7h1M113 8h1M121 8h1M135 8h2M161 8h1M93 9h1M107 9h1M122 9h1M140 9h2M143 9h1M160 9h1M93 10h1M134 10h2M142 10h1M163 10h2M238 10h1M244 10h1M147 11h1M166 11h1M244 11h2M58 12h1M82 12h1M124 12h1M139 12h1M163 12h1M243 12h1M85 13h3M166 13h1M74 14h1M76 14h1M83 14h1M126 14h1M152 14h2M167 14h1M246 14h1M79 15h1M81 15h1M85 15h1M87 15h1M247 15h1M25 16h1M28 16h1M49 16h1M58 16h1M74 16h1M81 16h1M83 16h1M93 16h1M139 16h1M164 16h1M169 16h1M237 16h1M13 17h1M24 17h1M38 17h1M64 17h1M87 17h1M93 17h1M156 17h1M165 17h1M236 17h1M284 17h1M320 17h1M7 18h1M13 18h1M24 18h1M38 18h1M74 18h1M83 18h1M166 18h2M181 18h1M238 18h1M244 18h1M248 18h1M13 19h1M48 19h2M67 19h1M74 19h2M81 19h1M87 19h1M171 19h1M195 19h1M320 19h1M331 19h1M10 20h1M12 20h1M27 20h2M74 20h1M78 20h2M93 20h1M162 20h1M172 20h1M177 20h1M194 20h1M213 20h1M219 20h1M232 20h1M347 20h1M1 21h1M10 21h1M16 21h1M25 21h1M30 21h1M41 21h1M56 21h1M60 21h1M67 21h1M73 21h1M87 21h1M95 21h1M179 21h1M183 21h1M186 21h1M188 21h1M197 21h1M201 21h1M208 21h1M210 21h2M216 21h1M233 21h1M237 21h1M286 21h1M14 22h1M21 22h1M24 22h1M35 22h2M49 22h2M89 22h1M98 22h1M130 22h1M142 22h1M177 22h1M188 22h1M200 22h1M211 22h2M218 22h1M237 22h1M241 22h1M245 22h2M288 22h1M320 22h1M328 22h1M335 22h1M2 23h1M21 23h1M37 23h1M59 23h1M96 23h3M103 23h1M106 23h1M129 23h1M135 23h1M157 23h1M171 23h1M176 23h1M179 23h1M186 23h1M188 23h2M194 23h2M199 23h2M210 23h1M218 23h1M237 23h1M243 23h1M22 24h1M49 24h1M67 24h1M79 24h1M83 24h1M85 24h1M95 24h1M98 24h1M112 24h1M114 24h1M126 24h1M132 24h1M138 24h1M141 24h1M150 24h1M157 24h1M166 24h1M181 24h1M186 24h2M191 24h1M208 24h1M248 24h1M315 24h1M330 24h1M7 25h1M10 25h1M13 25h1M18 25h1M33 25h2M45 25h1M55 25h1M60 25h1M62 25h1M68 25h1M74 25h1M77 25h1M79 25h1M81 25h1M91 25h1M101 25h1M108 25h1M111 25h1M114 25h1M117 25h1M119 25h1M123 25h1M129 25h1M134 25h1M137 25h1M141 25h1M143 25h1M145 25h1M151 25h1M157 25h1M195 25h1M203 25h1M213 25h2M216 25h1M319 25h2M6 26h1M21 26h1M30 26h1M32 26h1M45 26h1M48 26h1M54 26h2M58 26h1M60 26h1M79 26h1M85 26h1M107 26h1M111 26h1M121 26h1M153 26h1M155 26h1M158 26h1M168 26h1M173 26h1M176 26h1M194 26h1M196 26h1M201 26h1M210 26h1M212 26h1M244 26h1M331 26h1M18 27h1M57 27h2M76 27h1M78 27h1M86 27h1M97 27h1M101 27h2M106 27h1M108 27h1M113 27h2M118 27h2M123 27h1M133 27h1M148 27h2M154 27h1M159 27h1M168 27h1M180 27h1M186 27h2M193 27h1M215 27h1M218 27h1M220 27h1M307 27h1M321 27h1M330 27h1M342 27h2M348 27h1M352 27h1M18 28h1M51 28h1M54 28h1M92 28h1M102 28h1M107 28h1M132 28h2M145 28h1M159 28h1M168 28h1M172 28h1M177 28h2M189 28h1M192 28h1M219 28h1M232 28h1M294 28h1M331 28h1M336 28h1M339 28h1M1 29h1M16 29h1M20 29h1M41 29h1M48 29h1M67 29h1M70 29h1M90 29h1M108 29h1M137 29h1M148 29h1M162 29h1M289 29h1M319 29h2M334 29h1M4 30h1M12 30h1M22 30h1M33 30h1M39 30h2M43 30h2M48 30h1M59 30h1M81 30h1M158 30h1M161 30h1M165 30h1M232 30h1M285 30h1M305 30h1M319 30h1M331 30h1M14 31h1M20 31h1M29 31h2M32 31h1M35 31h1M37 31h1M40 31h2M344 31h1M9 32h1M26 32h1M33 32h1M48 32h1M54 32h1M72 32h2M97 32h1M168 32h1M230 32h1M232 32h1M342 32h1M9 33h1M43 33h1M62 33h1M73 33h1M230 33h1M7 34h1M20 34h1M23 34h2M40 34h1M42 34h1M60 34h1M67 34h1M217 34h1M287 34h1M20 35h1M31 35h1M33 35h1M39 35h1M47 35h1M219 35h1M224 35h1M317 35h1M39 36h1M42 36h1M65 36h1M67 36h1M208 36h1M215 36h1M217 36h1M220 36h1M6 37h1M53 37h1M201 37h1M215 37h1M218 37h1M232 37h1M62 38h1M200 38h1M203 38h1M207 38h1M212 38h1M222 38h2M229 38h1M232 38h1M295 38h1M302 38h1M341 38h1M42 39h1M49 39h1M57 39h1M68 39h1M73 39h1M197 39h1M215 39h1M217 39h1M223 39h1M230 39h1M19 40h1M22 40h1M67 40h1M209 40h1M216 40h1M351 40h1M201 41h1M212 41h1M20 42h1M246 45h1M284 49h1"/>
<path stroke="#00ffa6" d="M116 0h1M111 1h1M109 2h1M19 3h1M111 3h1M116 3h1M94 4h2M118 4h1M95 5h1M101 5h1M105 5h1M109 5h1M111 5h1M115 5h2M119 5h2M100 6h1M104 6h2M108 6h1M112 6h1M95 7h1M97 7h1M99 7h1M109 7h1M240 7h1M243 7h1M89 8h1M95 8h1M100 8h1M139 8h1M141 8h1M160 8h1M244 8h1M89 9h1M97 9h1M124 9h1M164 9h1M92 10h1M122 10h1M126 10h1M133 10h1M140 10h1M143 10h1M145 10h1M161 10h1M237 10h1M239 10h1M130 11h1M146 11h1M238 11h1M77 12h1M126 12h1M146 12h1M166 12h1M64 13h1M76 13h1M82 13h1M130 13h2M246 13h1M64 14h1M75 14h1M79 14h2M86 14h1M116 14h1M147 14h1M149 14h2M238 14h1M244 14h2M48 15h1M75 15h1M106 15h1M142 15h1M164 15h1M236 15h1M48 16h1M86 16h1M152 16h1M156 16h1M167 16h1M246 16h1M255 16h1M332 16h1M29 17h1M82 17h2M85 17h1M143 17h1M151 17h1M153 17h1M332 17h1M1 18h1M48 18h1M64 18h1M84 18h2M122 18h1M194 18h1M243 18h1M33 19h1M64 19h1M77 19h1M86 19h1M167 19h1M185 19h1M204 19h1M208 19h1M213 19h1M249 19h1M284 19h1M16 20h1M81 20h1M86 20h1M121 20h1M192 20h1M195 20h1M200 20h1M218 20h1M220 20h1M222 20h1M344 20h1M7 21h1M48 21h2M75 21h2M84 21h1M146 21h1M171 21h1M176 21h2M184 21h2M194 21h1M200 21h1M245 21h1M249 21h1M255 21h1M288 21h1M307 21h1M320 21h1M331 21h1M333 21h1M343 21h1M352 21h1M16 22h1M18 22h1M29 22h1M73 22h1M75 22h1M78 22h2M118 22h1M170 22h1M176 22h1M179 22h1M186 22h1M191 22h1M193 22h1M197 22h2M214 22h2M226 22h1M244 22h1M286 22h1M333 22h1M346 22h1M0 23h2M25 23h1M48 23h1M55 23h1M81 23h1M95 23h1M102 23h1M105 23h1M121 23h1M125 23h2M128 23h1M136 23h1M162 23h1M166 23h2M172 23h2M182 23h1M201 23h1M203 23h1M207 23h1M220 23h1M226 23h1M231 23h1M248 23h1M335 23h1M348 23h2M7 24h1M18 24h1M34 24h1M47 24h1M51 24h1M61 24h1M92 24h1M101 24h2M117 24h1M120 24h1M139 24h1M147 24h1M151 24h2M155 24h1M160 24h1M162 24h1M173 24h1M204 24h1M222 24h1M230 24h2M243 24h1M249 24h1M349 24h1M351 24h1M27 25h1M37 25h1M66 25h1M90 25h1M96 25h1M102 25h1M118 25h1M120 25h1M126 25h1M136 25h1M144 25h1M171 25h1M173 25h4M193 25h2M197 25h1M200 25h1M211 25h1M215 25h1M220 25h2M230 25h1M240 25h1M244 25h2M333 25h1M345 25h1M348 25h1M350 25h1M0 26h1M13 26h1M24 26h1M35 26h1M40 26h1M67 26h1M76 26h1M88 26h1M100 26h1M102 26h1M113 26h1M127 26h1M132 26h1M139 26h1M147 26h1M150 26h1M166 26h1M171 26h2M179 26h1M181 26h1M187 26h1M192 26h1M197 26h1M200 26h1M216 26h1M220 26h1M233 26h1M286 26h1M300 26h1M321 26h1M330 26h1M7 27h1M16 27h1M34 27h1M40 27h1M54 27h1M116 27h1M120 27h1M124 27h2M128 27h1M134 27h1M163 27h2M166 27h1M171 27h1M189 27h1M197 27h1M289 27h1M305 27h1M320 27h1M344 27h1M55 28h1M62 28h1M86 28h1M99 28h1M115 28h1M117 28h1M131 28h1M144 28h1M148 28h1M150 28h1M166 28h1M174 28h1M284 28h1M312 28h1M348 28h1M8 29h1M24 29h1M39 29h1M43 29h1M62 29h1M76 29h1M153 29h1M164 29h1M172 29h1M185 29h1M344 29h1M3 30h1M8 30h1M21 30h1M76 30h2M226 30h1M255 30h1M317 30h1M6 31h1M59 31h1M165 31h1M226 31h1M345 31h1M51 32h1M96 32h1M222 32h1M224 32h1M312 32h1M330 32h1M343 32h1M39 33h1M320 33h1M350 33h1M39 34h1M285 34h1M344 34h1M65 35h1M215 35h1M217 35h1M222 35h1M346 35h1M232 36h1M344 36h1M217 37h1M221 37h1M234 37h1M201 38h1M217 38h2M224 38h1M230 38h1M234 38h1M13 39h1M19 39h2M23 39h1M37 39h1M62 39h1M211 39h1M232 39h1M234 39h1M5 40h1M64 40h1M201 40h1M218 40h2M221 40h1M20 41h1M62 41h1M224 41h1M267 43h1M221 44h1"/>
<path stroke="#00ff8c" d="M111 2h1M97 4h2M111 4h1M242 4h1M108 5h1M118 5h1M242 5h1M97 6h1M106 6h1M114 6h1M120 6h1M243 6h1M100 7h1M104 7h1M106 7h1M108 7h1M111 7h1M116 7h1M119 7h2M88 8h1M94 8h1M101 8h1M108 8h1M111 8h2M116 8h1M138 8h1M99 9h2M111 9h2M136 9h1M138 9h1M239 9h1M99 10h1M144 10h1M160 10h1M165 10h1M133 11h1M143 11h1M163 11h1M87 12h1M123 12h1M130 12h1M244 12h2M74 13h1M99 13h1M128 13h1M143 13h1M150 13h1M158 13h1M163 13h1M165 13h1M244 13h1M87 14h1M115 14h1M129 14h2M141 14h1M166 14h1M236 14h2M80 15h1M86 15h1M129 15h1M139 15h1M151 15h1M161 15h1M237 15h1M246 15h1M13 16h1M87 16h1M110 16h1M292 16h1M74 17h1M77 17h1M79 17h1M154 17h1M49 18h1M75 18h1M82 18h1M139 18h1M141 18h1M151 18h1M164 18h1M168 18h1M236 18h1M246 18h2M249 18h1M73 19h1M79 19h1M82 19h1M93 19h1M130 19h2M143 19h1M151 19h1M158 19h1M235 19h1M246 19h2M346 19h1M49 20h1M58 20h1M80 20h1M167 20h2M185 20h1M196 20h1M214 20h1M217 20h1M228 20h1M237 20h1M247 20h1M335 20h1M20 21h1M27 21h1M78 21h2M103 21h1M129 21h2M141 21h1M162 21h1M167 21h1M172 21h1M178 21h1M181 21h1M195 21h1M214 21h2M243 21h1M248 21h1M22 22h1M41 22h1M74 22h1M84 22h2M95 22h1M103 22h1M119 22h1M121 22h1M131 22h1M141 22h1M151 22h1M171 22h1M173 22h2M178 22h1M181 22h1M196 22h1M248 22h1M345 22h1M60 23h1M67 23h1M76 23h1M91 23h1M104 23h1M111 23h1M119 23h2M127 23h1M131 23h1M134 23h1M137 23h1M139 23h1M143 23h1M174 23h1M177 23h1M191 23h1M193 23h1M197 23h1M0 24h1M3 24h1M15 24h1M55 24h1M68 24h1M105 24h1M111 24h1M121 24h1M125 24h1M143 24h1M145 24h1M158 24h1M170 24h1M172 24h1M192 24h1M194 24h1M220 24h1M241 24h1M245 24h2M320 24h1M339 24h1M352 24h1M12 25h1M54 25h1M59 25h1M86 25h1M94 25h1M99 25h1M109 25h1M112 25h1M125 25h1M132 25h1M161 25h1M167 25h1M172 25h1M185 25h1M188 25h1M196 25h1M198 25h1M217 25h2M317 25h1M352 25h1M3 26h1M20 26h1M81 26h1M86 26h1M125 26h1M140 26h1M154 26h1M156 26h1M159 26h2M167 26h1M174 26h1M185 26h1M333 26h1M348 26h2M20 27h1M67 27h1M107 27h1M139 27h1M156 27h1M174 27h1M198 27h1M1 28h1M12 28h1M20 28h1M100 28h1M109 28h1M141 28h1M163 28h1M165 28h1M187 28h1M315 28h1M338 28h1M345 28h1M73 29h1M267 29h1M322 29h1M349 29h1M16 30h1M73 30h1M294 30h1M312 30h1M352 30h1M39 31h1M329 31h1M346 31h1M62 32h1M48 33h1M300 33h1M344 33h1M348 33h1M8 34h1M73 34h1M229 34h1M232 34h1M284 34h1M305 34h1M352 34h1M344 35h1M22 36h1M223 36h1M352 36h1M212 37h1M225 37h1M230 37h1M216 38h1M221 38h1M1 39h1M8 39h1M201 39h1M206 39h1M208 39h1M307 39h1M348 39h1M39 40h1M62 40h1M221 41h1M267 47h1M284 55h1"/>
<path stroke="#00ff73" d="M116 1h1M117 2h1M106 4h1M113 4h1M240 4h1M91 5h1M93 5h2M106 5h1M114 5h1M91 6h1M95 6h2M109 6h1M118 6h1M88 7h1M91 7h1M105 7h1M118 7h1M242 7h1M98 8h1M103 8h1M107 8h1M122 8h1M88 9h1M95 9h1M103 9h2M108 9h1M113 9h1M121 9h1M139 9h1M243 9h1M82 10h1M100 10h1M107 10h1M119 10h1M132 10h1M162 10h1M93 11h1M124 11h1M137 11h1M142 11h1M99 12h1M118 12h1M125 12h1M132 12h1M134 12h1M147 12h1M93 13h1M112 13h2M125 13h1M138 13h1M162 13h1M164 13h1M243 13h1M131 14h1M140 14h1M142 14h1M146 14h1M148 14h1M155 14h1M125 15h1M131 15h1M150 15h1M152 15h1M155 15h1M167 15h1M75 16h1M116 16h1M134 16h1M144 16h1M153 16h2M158 16h1M165 16h2M243 16h1M49 17h1M129 17h1M149 17h1M155 17h1M162 17h1M166 17h1M237 17h1M243 17h1M246 17h2M344 17h1M76 18h1M79 18h1M95 18h1M165 18h1M134 19h1M162 19h1M172 19h1M239 19h1M48 20h1M76 20h2M82 20h1M91 20h1M103 20h1M107 20h1M125 20h1M129 20h1M136 20h1M144 20h1M226 20h1M235 20h1M330 20h1M82 21h1M85 21h1M89 21h1M134 21h1M143 21h1M164 21h1M166 21h1M168 21h1M193 21h1M204 21h1M218 21h1M220 21h1M238 21h2M246 21h1M284 21h1M328 21h1M7 22h1M20 22h1M30 22h1M48 22h1M81 22h1M99 22h2M106 22h1M114 22h1M116 22h1M122 22h1M129 22h1M139 22h1M146 22h2M160 22h1M166 22h2M185 22h1M194 22h1M203 22h1M210 22h1M213 22h1M219 22h1M16 23h1M78 23h1M94 23h1M99 23h1M110 23h1M112 23h2M115 23h1M144 23h1M149 23h1M158 23h1M170 23h1M178 23h1M187 23h1M192 23h1M214 23h3M233 23h1M320 23h1M58 24h1M60 24h1M82 24h1M94 24h1M96 24h1M106 24h1M109 24h1M115 24h1M127 24h2M133 24h1M137 24h1M140 24h1M174 24h1M213 24h1M218 24h2M16 25h1M76 25h1M82 25h1M100 25h1M127 25h1M135 25h1M140 25h1M154 25h1M159 25h1M165 25h2M170 25h1M192 25h1M210 25h1M222 25h1M7 26h1M18 26h1M96 26h1M106 26h1M118 26h1M124 26h1M126 26h1M133 26h1M135 26h1M148 26h1M161 26h1M180 26h1M198 26h1M322 26h1M37 27h1M55 27h1M75 27h1M100 27h1M141 27h1M347 27h1M67 28h1M153 28h1M198 28h1M323 28h1M344 28h1M347 28h1M27 29h1M178 29h1M345 29h1M320 30h1M62 31h1M73 31h1M39 32h2M320 32h1M344 32h1M348 32h1M312 33h1M329 33h1M347 33h1M352 33h1M337 34h1M348 34h1M230 35h1M230 36h1M62 37h1M328 37h1M336 37h1M215 38h1M221 39h1M8 40h1M294 43h1"/>
<path stroke="#00ff59" d="M105 4h1M114 4h1M98 6h1M111 6h1M119 6h1M98 7h1M93 8h1M96 8h2M110 8h1M242 8h2M94 9h1M101 9h2M109 9h1M115 9h1M117 9h1M142 9h1M102 10h2M118 10h1M128 10h1M136 10h1M138 10h1M103 11h1M116 11h1M132 11h1M134 11h1M144 11h2M161 11h1M93 12h1M106 12h1M142 12h1M161 12h2M164 12h1M103 13h1M116 13h1M123 13h1M126 13h1M134 13h1M142 13h1M146 13h1M125 14h1M164 14h1M243 14h1M93 15h1M108 15h1M114 15h3M118 15h1M143 15h1M146 15h1M149 15h1M158 15h1M94 16h1M118 16h1M131 16h1M136 16h1M138 16h1M142 16h2M145 16h1M148 16h2M159 16h1M48 17h1M81 17h1M86 17h1M110 17h1M125 17h1M131 17h1M139 17h1M141 17h2M164 17h1M168 17h1M123 18h1M125 18h1M143 18h1M149 18h1M162 18h1M237 18h1M76 19h1M136 19h1M168 19h1M242 19h1M248 19h1M85 20h1M131 20h1M143 20h1M161 20h1M163 20h1M165 20h1M238 20h1M352 20h1M74 21h1M111 21h1M113 21h1M131 21h1M137 21h3M154 21h1M213 21h1M240 21h1M77 22h1M92 22h1M94 22h1M96 22h1M134 22h1M136 22h2M140 22h1M143 22h1M152 22h1M154 22h1M157 22h1M162 22h1M220 22h1M20 23h1M88 23h1M92 23h1M101 23h1M114 23h1M117 23h1M140 23h1M147 23h1M150 23h1M155 23h1M160 23h1M185 23h1M198 23h1M213 23h1M219 23h1M350 23h1M76 24h1M86 24h1M90 24h1M107 24h1M161 24h1M171 24h1M244 24h1M67 25h1M78 25h1M128 25h1M142 25h1M181 25h2M187 25h1M57 26h1M75 26h1M116 26h1M177 26h1M182 26h1M193 26h1M226 26h1M340 26h1M350 26h1M2 27h1M27 27h1M153 27h1M165 27h1M172 27h1M300 27h1M346 27h1M349 27h1M156 28h1M164 28h1M322 28h1M342 28h1M351 28h1M350 29h2M343 30h1M345 30h1M317 31h1M346 32h1M59 34h1M221 36h1M321 38h1M47 40h1M224 40h1"/>
<path stroke="#00ff40" d="M98 5h1M88 6h1M241 6h1M96 7h1M102 7h1M114 7h1M241 7h1M90 8h1M104 8h1M106 8h1M120 8h1M240 8h1M92 9h1M105 9h2M110 9h1M118 9h1M135 9h1M98 10h1M101 10h1M106 10h1M141 10h1M99 11h1M101 11h1M112 11h2M115 11h1M118 11h3M127 11h1M139 11h3M159 11h1M162 11h1M110 12h1M112 12h2M116 12h1M133 12h1M137 12h1M140 12h2M144 12h1M160 12h1M106 13h1M109 13h1M118 13h1M144 13h1M92 14h1M99 14h1M106 14h1M145 14h1M158 14h1M160 14h4M91 15h1M102 15h1M104 15h1M117 15h1M141 15h1M157 15h1M163 15h1M166 15h1M239 15h2M97 16h1M99 16h1M103 16h1M109 16h1M157 16h1M163 16h1M239 16h1M103 17h1M106 17h1M112 17h1M117 17h1M146 17h1M148 17h1M152 17h1M157 17h1M239 17h1M86 18h1M93 18h1M111 18h1M129 18h1M131 18h1M138 18h1M154 18h1M80 19h1M83 19h1M98 19h1M113 19h1M115 19h2M118 19h1M126 19h1M129 19h1M138 19h1M144 19h1M157 19h1M159 19h1M161 19h1M164 19h1M166 19h1M237 19h1M243 19h2M110 20h2M113 20h1M122 20h1M134 20h1M138 20h1M149 20h1M151 20h1M158 20h1M244 20h1M93 21h1M102 21h1M105 21h1M107 21h1M110 21h1M115 21h5M121 21h2M125 21h1M136 21h1M151 21h1M160 21h1M163 21h1M182 21h1M217 21h1M86 22h1M88 22h1M97 22h1M101 22h1M105 22h1M107 22h1M110 22h1M113 22h1M125 22h2M128 22h1M144 22h1M161 22h1M164 22h1M172 22h1M77 23h1M79 23h1M124 23h1M133 23h1M142 23h1M146 23h1M154 23h1M159 23h1M168 23h1M181 23h1M211 23h1M16 24h1M91 24h1M99 24h2M108 24h1M123 24h2M135 24h1M159 24h1M167 24h1M197 24h1M214 24h2M20 25h2M116 25h1M133 25h1M148 25h1M163 25h1M168 25h1M78 26h1M164 26h1M178 27h1M76 28h1M349 28h1M352 28h1M165 29h1M346 29h1M348 29h1M321 30h1M344 30h1M346 30h1M350 31h1M351 34h1M352 35h1"/>
<path stroke="#00ff26" d="M97 5h1M94 6h1M117 6h1M91 8h1M105 8h1M114 8h2M119 8h1M96 9h1M89 10h1M95 10h1M104 10h1M111 10h3M116 10h1M121 10h1M139 10h1M92 11h1M109 11h1M117 11h1M122 11h1M135 11h2M164 11h1M88 12h1M102 12h1M115 12h1M119 12h1M143 12h1M145 12h1M159 12h1M240 12h1M95 13h1M97 13h2M111 13h1M124 13h1M132 13h1M239 13h1M102 14h2M109 14h3M117 14h2M123 14h1M143 14h1M239 14h1M95 15h2M99 15h1M127 15h1M138 15h1M140 15h1M145 15h1M243 15h1M95 16h1M102 16h1M106 16h1M108 16h1M122 16h1M129 16h1M140 16h1M150 16h1M155 16h1M162 16h1M95 17h1M99 17h1M118 17h1M136 17h1M140 17h1M145 17h1M150 17h1M158 17h1M160 17h1M91 18h1M104 18h1M109 18h1M117 18h2M148 18h1M156 18h2M163 18h1M89 19h1M94 19h1M97 19h1M106 19h1M108 19h1M125 19h1M135 19h1M137 19h1M140 19h3M149 19h2M165 19h1M109 20h1M116 20h2M130 20h1M135 20h1M145 20h1M147 20h1M160 20h1M166 20h1M91 21h2M94 21h1M108 21h2M126 21h1M133 21h1M135 21h1M142 21h1M144 21h1M152 21h1M156 21h1M158 21h1M161 21h1M165 21h1M244 21h1M76 22h1M90 22h2M102 22h1M108 22h2M117 22h1M127 22h1M133 22h1M135 22h1M138 22h1M148 22h1M156 22h1M163 22h1M165 22h1M168 22h1M107 23h1M109 23h1M123 23h1M132 23h1M141 23h1M156 23h1M163 23h1M297 23h1M1 24h1M30 24h1M59 24h1M116 24h1M146 24h1M165 24h1M182 24h1M193 24h1M153 25h1M155 25h1M164 25h1M178 25h1M16 26h1M163 26h1M165 26h1M178 26h1M188 26h1M345 27h1M352 29h1M348 30h1M347 31h1"/>
<path stroke="#00ff0d" d="M240 6h1M89 7h1M117 7h1M109 8h1M118 8h1M241 8h1M90 9h2M240 9h1M242 9h1M90 10h2M105 10h1M241 10h2M95 11h1M110 11h1M92 12h1M97 12h1M100 12h1M103 12h1M107 12h1M117 12h1M121 12h1M127 12h2M136 12h1M92 13h1M94 13h1M101 13h2M105 13h1M115 13h1M133 13h1M136 13h1M159 13h1M94 14h2M112 14h2M119 14h2M122 14h1M127 14h1M138 14h2M144 14h1M165 14h1M89 15h1M97 15h1M107 15h1M109 15h1M111 15h2M122 15h1M130 15h1M134 15h1M147 15h2M160 15h1M91 16h1M112 16h1M115 16h1M121 16h1M125 16h1M130 16h1M135 16h1M146 16h1M160 16h1M240 16h1M242 16h1M91 17h2M98 17h1M102 17h1M111 17h1M113 17h1M116 17h1M123 17h1M126 17h1M130 17h1M134 17h1M137 17h1M144 17h1M161 17h1M240 17h1M242 17h1M92 18h1M97 18h3M101 18h1M105 18h1M116 18h1M121 18h1M126 18h1M133 18h2M137 18h1M140 18h1M142 18h1M144 18h1M152 18h2M158 18h4M239 18h2M90 19h1M92 19h1M99 19h2M110 19h1M112 19h1M117 19h1M120 19h1M122 19h1M139 19h1M148 19h1M152 19h1M155 19h1M160 19h1M89 20h1M95 20h2M101 20h1M112 20h1M115 20h1M118 20h1M120 20h1M123 20h1M126 20h2M137 20h1M140 20h1M152 20h1M154 20h1M156 20h2M164 20h1M243 20h1M88 21h1M90 21h1M98 21h2M104 21h1M106 21h1M145 21h1M157 21h1M111 22h2M123 22h1M158 22h1M100 23h1M108 23h1M116 23h1M145 23h1M161 23h1M20 24h1M78 24h1M148 24h1M154 24h1M164 24h1M156 25h1M346 25h1M347 30h1M320 31h1M352 31h1M350 32h1M352 32h1M350 34h1"/>
<path stroke="#0dff00" d="M241 4h1M117 8h1M119 9h1M88 10h1M97 10h1M108 10h1M115 10h1M117 10h1M88 11h1M94 11h1M100 11h1M102 11h1M105 11h1M107 11h2M121 11h1M160 11h1M242 11h1M95 12h1M108 12h1M120 12h1M138 12h1M241 12h2M90 13h1M104 13h1M107 13h2M127 13h1M139 13h1M141 13h1M145 13h1M160 13h2M96 14h2M124 14h1M128 14h1M132 14h1M134 14h1M137 14h1M242 14h1M98 15h1M103 15h1M105 15h1M123 15h1M126 15h1M132 15h2M159 15h1M162 15h1M242 15h1M98 16h1M100 16h1M107 16h1M113 16h1M126 16h1M133 16h1M137 16h1M161 16h1M89 17h1M100 17h1M104 17h2M115 17h1M122 17h1M133 17h1M138 17h1M147 17h1M163 17h1M103 18h1M106 18h2M110 18h1M112 18h1M114 18h1M120 18h1M124 18h1M136 18h1M145 18h3M155 18h1M95 19h1M101 19h1M103 19h1M111 19h1M114 19h1M123 19h1M145 19h2M153 19h1M156 19h1M163 19h1M92 20h1M97 20h1M102 20h1M105 20h1M108 20h1M119 20h1M133 20h1M150 20h1M239 20h2M97 21h1M112 21h1M114 21h1M120 21h1M124 21h1M140 21h1M147 21h1M155 21h1M241 21h2M115 22h1M120 22h1M124 22h1M145 22h1M149 22h2M155 22h1M159 22h1M164 23h1M153 24h1M156 24h1M163 24h1M168 24h1M178 24h1M344 26h2M350 28h1M350 30h2"/>
<path stroke="#26ff00" d="M241 5h1M98 9h1M114 9h1M120 9h1M241 9h1M94 10h1M110 10h1M240 10h1M91 11h1M98 11h1M104 11h1M106 11h1M111 11h1M114 11h1M91 12h1M94 12h1M104 12h2M117 13h1M119 13h1M121 13h2M137 13h1M240 13h2M98 14h1M100 14h1M107 14h1M121 14h1M135 14h2M94 15h1M110 15h1M113 15h1M124 15h1M144 15h1M101 16h1M104 16h2M111 16h1M132 16h1M147 16h1M241 16h1M94 17h1M96 17h1M107 17h1M119 17h1M121 17h1M89 18h1M94 18h1M96 18h1M100 18h1M102 18h1M105 19h1M107 19h1M109 19h1M121 19h1M128 19h1M147 19h1M154 19h1M240 19h1M90 20h1M94 20h1M106 20h1M128 20h1M139 20h1M141 20h1M148 20h1M153 20h1M155 20h1M241 20h1M123 21h1M127 21h2M148 21h3M132 22h1M165 23h1M346 28h1"/>
<path stroke="#40ff00" d="M96 10h1M120 10h1M90 11h1M138 11h1M240 11h1M98 12h1M101 12h1M111 12h1M122 12h1M135 12h1M89 13h1M100 13h1M135 13h1M140 13h1M242 13h1M104 14h2M108 14h1M133 14h1M240 14h2M92 15h1M100 15h2M121 15h1M135 15h1M89 16h2M92 16h1M117 16h1M119 16h1M123 16h2M127 16h1M101 17h1M114 17h1M124 17h1M135 17h1M159 17h1M90 18h1M108 18h1M119 18h1M130 18h1M135 18h1M150 18h1M91 19h1M96 19h1M102 19h1M104 19h1M119 19h1M132 19h1M88 20h1M98 20h1M104 20h1M124 20h1M142 20h1M146 20h1M96 21h1M100 21h1M132 21h1M153 22h1M350 27h1"/>
<path stroke="#59ff00" d="M109 10h1M114 10h1M97 11h1M241 11h1M91 14h1M101 14h1M159 14h1M137 15h1M114 16h1M108 17h2M120 17h1M132 17h1M113 18h1M115 18h1M241 18h2M124 19h1M99 20h1M132 20h1M242 20h1M101 21h1M159 21h1"/>
<path stroke="#73ff00" d="M96 12h1M109 12h1M88 13h1M91 13h1M96 13h1M110 13h1M120 13h1M89 14h1M120 15h1M128 15h1M241 15h1M120 16h1M97 17h1M241 17h1M127 18h1M127 19h1M100 20h1M114 20h1M153 21h1M148 23h1"/>
<path stroke="#8cff00" d="M89 12h1M114 12h1M114 13h1M90 14h1M114 14h1M90 15h1M136 15h1M96 16h1M128 16h1M88 18h1M128 18h1M132 18h1M241 19h1M153 23h1"/>
<path stroke="#a6ff00" d="M89 11h1M96 11h1M90 12h1M119 15h1M88 17h1M90 17h1M127 17h2M88 19h1M133 19h1M159 20h1"/>
<path stroke="#bfff00" d="M88 14h1M88 15h1M88 16h1"/>
</g>
<path d="M204.00 61.50L836.00 61.50M201.00 220.50L839.00 220.50M210.50 61.50L210.50 220.50M829.50 61.50L829.50 220.50" stroke="#fff" stroke-width="1" fill="none" shape-rendering="crispEdges"/>
<path d="M214.50 61.50L214.50 70.50M214.50 220.50L214.50 211.50M220.50 61.50L220.50 66.50M220.50 220.50L220.50 215.50M226.50 61.50L226.50 66.50M226.50 220.50L226.50 215.50M232.50 61.50L232.50 66.50M232.50 220.50L232.50 215.50M238.50 61.50L238.50 66.50M238.50 220.50L238.50 215.50M244.50 61.50L244.50 66.50M244.50 220.50L244.50 215.50M250.50 61.50L250.50 66.50M250.50 220.50L250.50 215.50M256.50 61.50L256.50 66.50M256.50 220.50L256.50 215.50M262.50 61.50L262.50 66.50M262.50 220.50L262.50 215.50M268.50 61.50L268.50 70.50M268.50 220.50L268.50 211.50M274.50 61.50L274.50 66.50M274.50 220.50L274.50 215.50M279.50 61.50L279.50 66.50M279.50 220.50L279.50 215.50M285.50 61.50L285.50 66.50M285.50 220.50L285.50 215.50M291.50 61.50L291.50 66.50M291.50 220.50L291.50 215.50M297.50 61.50L297.50 66.50M297.50 220.50L297.50 215.50M303.50 61.50L303.50 66.50M303.50 220.50L303.50 215.50M309.50 61.50L309.50 66.50M309.50 220.50L309.50 215.50M315.50 61.50L315.50 66.50M315.50 220.50L315.50 215.50M321.50 61.50L321.50 70.50M321.50 220.50L321.50 211.50M327.50 61.50L327.50 66.50M327.50 220.50L327.50 215.50M333.50 61.50L333.50 66.50M333.50 220.50L333.50 215.50M339.50 61.50L339.50 66.50M339.50 220.50L339.50 215.50M345.50 61.50L345.50 66.50M345.50 220.50L345.50 215.50M351.50 61.50L351.50 66.50M351.50 220.50L351.50 215.50M357.50 61.50L357.50 66.50M357.50 220.50L357.50 215.50M363.50 61.50L363.50 66.50M363.50 220.50L363.50 215.50M369.50 61.50L369.50 66.50M369.50 220.50L369.50 215.50M375.50 61.50L375.50 70.50M375.50 220.50L375.50 211.50M381.50 61.50L381.50 66.50M381.50 220.50L381.50 215.50M387.50 61.50L387.50 66.50M387.50 220.50L387.50 215.50M393.50 61.50L393.50 66.50M393.50 220.50L393.50 215.50M399.50 61.50L399.50 66.50M399.50 220.50L399.50 215.50M404.50 61.50L404.50 66.50M404.50 220.50L404.50 215.50M410.50 61.50L410.50 66.50M410.50 220.50L410.50 215.50M416.50 61.50L416.50 66.50M416.50 220.50L416.50 215.50M422.50 61.50L422.50 66.50M422.50 220.50L422.50 215.50M428.50 61.50L428.50 70.50M428.50 220.50L428.50 211.50M434.50 61.50L434.50 66.50M434.50 220.50L434.50 215.50M440.50 61.50L440.50 66.50M440.50 220.50L440.50 215.50M446.50 61.50L446.50 66.50M446.50 220.50L446.50 215.50M452.50 61.50L452.50 66.50M452.50 220.50L452.50 215.50M458.50 61.50L458.50 66.50M458.50 220.50L458.50 215.50M464.50 61.50L464.50 66.50M464.50 220.50L464.50 215.50M470.50 61.50L470.50 66.50M470.50 220.50L470.50 215.50M476.50 61.50L476.50 66.50M476.50 220.50L476.50 215.50M482.50 61.50L482.50 70.50M482.50 220.50L482.50 211.50M488.50 61.50L488.50 66.50M488.50 220.50L488.50 215.50M494.50 61.50L494.50 66.50M494.50 220.50L494.50 215.50M500.50 61.50L500.50 66.50M500.50 220.50L500.50 215.50M506.50 61.50L506.50 66.50M506.50 220.50L506.50 215.50M512.50 61.50L512.50 66.50M512.50 220.50L512.50 215.50M518.50 61.50L518.50 66.50M518.50 220.50L518.50 215.50M524.50 61.50L524.50 66.50M524.50 220.50L524.50 215.50M529.50 61.50L529.50 66.50M529.50 220.50L529.50 215.50M535.50 61.50L535.50 70.50M535.50 220.50L535.50 211.50M541.50 61.50L541.50 66.50M541.50 220.50L541.50 215.50M547.50 61.50L547.50 66.50M547.50 220.50L547.50 215.50M553.50 61.50L553.50 66.50M553.50 220.50L553.50 215.50M559.50 61.50L559.50 66.50M559.50 220.50L559.50 215.50M565.50 61.50L565.50 66.50M565.50 220.50L565.50 215.50M571.50 61.50L571.50 66.50M571.50 220.50L571.50 215.50M577.50 61.50L577.50 66.50M577.50 220.50L577.50 215.50M583.50 61.50L583.50 66.50M583.50 220.50L583.50 215.50M589.50 61.50L589.50 70.50M589.50 220.50L589.50 211.50M595.50 61.50L595.50 66.50M595.50 220.50L595.50 215.50M601.50 61.50L601.50 66.50M601.50 220.50L601.50 215.50M607.50 61.50L607.50 66.50M607.50 220.50L607.50 215.50M613.50 61.50L613.50 66.50M613.50 220.50L613.50 215.50M619.50 61.50L619.50 66.50M619.50 220.50L619.50 215.50M625.50 61.50L625.50 66.50M625.50 220.50L625.50 215.50M631.50 61.50L631.50 66.50M631.50 220.50L631.50 215.50M637.50 61.50L637.50 66.50M637.50 220.50L637.50 215.50M643.50 61.50L643.50 70.50M643.50 220.50L643.50 211.50M649.50 61.50L649.50 66.50M649.50 220.50L649.50 215.50M654.50 61.50L654.50 66.50M654.50 220.50L654.50 215.50M660.50 61.50L660.50 66.50M660.50 220.50L660.50 215.50M666.50 61.50L666.50 66.50M666.50 220.50L666.50 215.50M672.50 61.50L672.50 66.50M672.50 220.50L672.50 215.50M678.50 61.50L678.50 66.50M678.50 220.50L678.50 215.50M684.50 61.50L684.50 66.50M684.50 220.50L684.50 215.50M690.50 61.50L690.50 66.50M690.50 220.50L690.50 215.50M696.50 61.50L696.50 70.50M696.50 220.50L696.50 211.50M702.50 61.50L702.50 66.50M702.50 220.50L702.50 215.50M708.50 61.50L708.50 66.50M708.50 220.50L708.50 215.50M714.50 61.50L714.50 66.50M714.50 220.50L714.50 215.50M720.50 61.50L720.50 66.50M720.50 220.50L720.50 215.50M726.50 61.50L726.50 66.50M726.50 220.50L726.50 215.50M732.50 61.50L732.50 66.50M732.50 220.50L732.50 215.50M738.50 61.50L738.50 66.50M738.50 220.50L738.50 215.50M744.50 61.50L744.50 66.50M744.50 220.50L744.50 215.50M750.50 61.50L750.50 70.50M750.50 220.50L750.50 211.50M756.50 61.50L756.50 66.50M756.50 220.50L756.50 215.50M762.50 61.50L762.50 66.50M762.50 220.50L762.50 215.50M768.50 61.50L768.50 66.50M768.50 220.50L768.50 215.50M774.50 61.50L774.50 66.50M774.50 220.50L774.50 215.50M779.50 61.50L779.50 66.50M779.50 220.50L779.50 215.50M785.50 61.50L785.50 66.50M785.50 220.50L785.50 215.50M791.50 61.50L791.50 66.50M791.50 220.50L791.50 215.50M797.50 61.50L797.50 66.50M797.50 220.50L797.50 215.50M803.50 61.50L803.50 70.50M803.50 220.50L803.50 211.50M809.50 61.50L809.50 66.50M809.50 220.50L809.50 215.50M815.50 61.50L815.50 66.50M815.50 220.50L815.50 215.50M821.50 61.50L821.50 66.50M821.50 220.50L821.50 215.50M827.50 61.50L827.50 66.50M827.50 220.50L827.50 215.50" stroke="#fff" stroke-width="1" fill="none" shape-rendering="crispEdges"/>
<path d="M201.50 220.50L210.50 220.50M829.50 220.50L838.50 220.50M204.50 199.50L210.50 199.50M829.50 199.50L835.50 199.50M204.50 178.50L210.50 178.50M829.50 178.50L835.50 178.50M204.50 166.50L210.50 166.50M829.50 166.50L835.50 166.50M204.50 157.50L210.50 157.50M829.50 157.50L835.50 157.50M201.50 151.50L210.50 151.50M829.50 151.50L838.50 151.50M204.50 130.50L210.50 130.50M829.50 130.50L835.50 130.50M204.50 109.50L210.50 109.50M829.50 109.50L835.50 109.50M204.50 97.50L210.50 97.50M829.50 97.50L835.50 97.50M204.50 88.50L210.50 88.50M829.50 88.50L835.50 88.50M201.50 81.50L210.50 81.50M829.50 81.50L838.50 81.50" stroke="#fff" stroke-width="1" fill="none" shape-rendering="crispEdges"/>
<text x="176.5" y="86" font-size="13.5" text-anchor="start" fill="#fff" stroke="#000" stroke-width="0.2">10</text>
<text x="191.5" y="80.5" font-size="9" text-anchor="start" fill="#fff" stroke="#000" stroke-width="0.2">2</text>
<text x="176.5" y="155" font-size="13.5" text-anchor="start" fill="#fff" stroke="#000" stroke-width="0.2">10</text>
<text x="191.5" y="149.5" font-size="9" text-anchor="start" fill="#fff" stroke="#000" stroke-width="0.2">1</text>
<text x="176.5" y="224.5" font-size="13.5" text-anchor="start" fill="#fff" stroke="#000" stroke-width="0.2">10</text>
<text x="191.5" y="219.0" font-size="9" text-anchor="start" fill="#fff" stroke="#000" stroke-width="0.2">0</text>
<text x="215.0" y="239.3" font-size="14" text-anchor="middle" fill="#fff" stroke="#000" stroke-width="0.2">14:30</text>
<text x="268.6" y="239.3" font-size="14" text-anchor="middle" fill="#fff" stroke="#000" stroke-width="0.2">14:45</text>
<text x="322.1" y="239.3" font-size="14" text-anchor="middle" fill="#fff" stroke="#000" stroke-width="0.2">15:00</text>
<text x="375.7" y="239.3" font-size="14" text-anchor="middle" fill="#fff" stroke="#000" stroke-width="0.2">15:15</text>
<text x="429.3" y="239.3" font-size="14" text-anchor="middle" fill="#fff" stroke="#000" stroke-width="0.2">15:30</text>
<text x="482.8" y="239.3" font-size="14" text-anchor="middle" fill="#fff" stroke="#000" stroke-width="0.2">15:45</text>
<text x="536.4" y="239.3" font-size="14" text-anchor="middle" fill="#fff" stroke="#000" stroke-width="0.2">16:00</text>
<text x="590.0" y="239.3" font-size="14" text-anchor="middle" fill="#fff" stroke="#000" stroke-width="0.2">16:15</text>
<text x="643.6" y="239.3" font-size="14" text-anchor="middle" fill="#fff" stroke="#000" stroke-width="0.2">16:30</text>
<text x="697.1" y="239.3" font-size="14" text-anchor="middle" fill="#fff" stroke="#000" stroke-width="0.2">16:45</text>
<text x="750.7" y="239.3" font-size="14" text-anchor="middle" fill="#fff" stroke="#000" stroke-width="0.2">17:00</text>
<text x="804.3" y="239.3" font-size="14" text-anchor="middle" fill="#fff" stroke="#000" stroke-width="0.2">17:15</text>
<text x="117.5" y="239.3" font-size="14" text-anchor="start" fill="#fff" stroke="#000" stroke-width="0.2" textLength="63" lengthAdjust="spacingAndGlyphs">GMT(min)</text>
<text x="69.2" y="139.7" font-size="15" text-anchor="middle" fill="#fff" stroke="#000" stroke-width="0.2" textLength="131.4" lengthAdjust="spacingAndGlyphs" transform="rotate(-90 69.2 139.7)">Electron Energy</text>
<text x="89" y="140.4" font-size="15" text-anchor="middle" fill="#fff" stroke="#000" stroke-width="0.2" textLength="31" lengthAdjust="spacingAndGlyphs" transform="rotate(-90 89 140.4)">(eV)</text>
<rect x="850.5" y="77.5" width="32" height="127" fill="url(#cb)" stroke="#fff" stroke-width="1" shape-rendering="crispEdges"/>
<path d="M878.50 192.50L882.50 192.50M878.50 179.50L882.50 179.50M878.50 172.50L882.50 172.50M878.50 166.50L882.50 166.50M874.50 162.50L882.50 162.50M878.50 149.50L882.50 149.50M878.50 137.50L882.50 137.50M878.50 129.50L882.50 129.50M878.50 124.50L882.50 124.50M874.50 120.50L882.50 120.50M878.50 107.50L882.50 107.50M878.50 94.50L882.50 94.50M878.50 87.50L882.50 87.50M878.50 81.50L882.50 81.50" stroke="#fff" stroke-width="1" fill="none" shape-rendering="crispEdges"/>
<text x="894.5" y="82.5" font-size="16.5" text-anchor="start" fill="#fff" stroke="#000" stroke-width="0.2">10</text>
<text x="913.5" y="73.5" font-size="11" text-anchor="start" fill="#fff" stroke="#000" stroke-width="0.2">−3</text>
<text x="894.5" y="124.5" font-size="16.5" text-anchor="start" fill="#fff" stroke="#000" stroke-width="0.2">10</text>
<text x="913.5" y="115.5" font-size="11" text-anchor="start" fill="#fff" stroke="#000" stroke-width="0.2">−4</text>
<text x="894.5" y="166" font-size="16.5" text-anchor="start" fill="#fff" stroke="#000" stroke-width="0.2">10</text>
<text x="913.5" y="157" font-size="11" text-anchor="start" fill="#fff" stroke="#000" stroke-width="0.2">−5</text>
<text x="894.5" y="209" font-size="16.5" text-anchor="start" fill="#fff" stroke="#000" stroke-width="0.2">10</text>
<text x="913.5" y="200" font-size="11" text-anchor="start" fill="#fff" stroke="#000" stroke-width="0.2">−6</text>
<text x="851.5" y="60" font-size="16" text-anchor="start" fill="#fff" stroke="#000" stroke-width="0.2" textLength="29.5" lengthAdjust="spacingAndGlyphs">DEF</text>
<linearGradient id="pg0" gradientUnits="userSpaceOnUse" x1="231.3" y1="0" x2="810.2" y2="0"><stop offset="0.0000" stop-color="#1aff00"/><stop offset="0.3691" stop-color="#1aff00"/><stop offset="0.3951" stop-color="#1aff00"/><stop offset="0.4210" stop-color="#33ff00"/><stop offset="0.4339" stop-color="#4dff00"/><stop offset="0.4469" stop-color="#66ff00"/><stop offset="0.4728" stop-color="#99ff00"/><stop offset="0.4987" stop-color="#b2ff00"/><stop offset="0.5419" stop-color="#99ff00"/><stop offset="0.5937" stop-color="#66ff00"/><stop offset="0.6369" stop-color="#4dff00"/><stop offset="0.7060" stop-color="#26ff00"/><stop offset="0.7215" stop-color="#26ff00"/><stop offset="0.7342" stop-color="#4dff00"/><stop offset="0.7356" stop-color="#66ff00"/><stop offset="0.7370" stop-color="#80ff00"/><stop offset="0.7384" stop-color="#99ff00"/><stop offset="0.7398" stop-color="#b2ff00"/><stop offset="0.7412" stop-color="#ccff00"/><stop offset="0.7426" stop-color="#e5ff00"/><stop offset="0.7440" stop-color="#ffff00"/><stop offset="0.7466" stop-color="#e4ff00"/><stop offset="0.7492" stop-color="#c9ff00"/><stop offset="0.7518" stop-color="#aeff00"/><stop offset="0.7544" stop-color="#93ff00"/><stop offset="0.7566" stop-color="#78ff00"/><stop offset="0.7589" stop-color="#5cff00"/><stop offset="0.7611" stop-color="#41ff00"/><stop offset="0.7633" stop-color="#26ff00"/><stop offset="0.7722" stop-color="#1aff00"/><stop offset="0.7732" stop-color="#35ff00"/><stop offset="0.7742" stop-color="#50ff00"/><stop offset="0.7752" stop-color="#6bff00"/><stop offset="0.7762" stop-color="#86ff00"/><stop offset="0.7772" stop-color="#a1ff00"/><stop offset="0.7782" stop-color="#bcff00"/><stop offset="0.7793" stop-color="#d7ff00"/><stop offset="0.7803" stop-color="#f2ff00"/><stop offset="0.7811" stop-color="#fff100"/><stop offset="0.7819" stop-color="#ffd600"/><stop offset="0.7827" stop-color="#ffba00"/><stop offset="0.7836" stop-color="#ff9f00"/><stop offset="0.7844" stop-color="#ff8400"/><stop offset="0.7852" stop-color="#ff6900"/><stop offset="0.7860" stop-color="#ff4e00"/><stop offset="0.7868" stop-color="#ff3300"/><stop offset="0.7880" stop-color="#ff4f00"/><stop offset="0.7893" stop-color="#ff6a00"/><stop offset="0.7905" stop-color="#ff8600"/><stop offset="0.7917" stop-color="#ffa200"/><stop offset="0.7929" stop-color="#ffbd00"/><stop offset="0.7941" stop-color="#ffd900"/><stop offset="0.7955" stop-color="#fff400"/><stop offset="0.7969" stop-color="#eeff00"/><stop offset="0.7982" stop-color="#d2ff00"/><stop offset="0.7996" stop-color="#b7ff00"/><stop offset="0.8010" stop-color="#9bff00"/><stop offset="0.8024" stop-color="#7fff00"/><stop offset="0.8092" stop-color="#5eff00"/><stop offset="0.8161" stop-color="#3bff00"/><stop offset="0.8229" stop-color="#1aff00"/><stop offset="1.0000" stop-color="#1aff00"/></linearGradient>
<rect x="231.3" y="255.50" width="578.90" height="17.94" fill="url(#pg0)"/>
<linearGradient id="pg1" gradientUnits="userSpaceOnUse" x1="231.3" y1="0" x2="810.2" y2="0"><stop offset="0.0000" stop-color="#46ff00"/><stop offset="0.3691" stop-color="#46ff00"/><stop offset="0.3951" stop-color="#1aff00"/><stop offset="0.4210" stop-color="#00ff00"/><stop offset="0.4469" stop-color="#00ff00"/><stop offset="0.4987" stop-color="#00ff00"/><stop offset="0.5678" stop-color="#00ff0d"/><stop offset="0.6369" stop-color="#00ff1a"/><stop offset="0.7215" stop-color="#00ff1a"/><stop offset="0.7257" stop-color="#00ff00"/><stop offset="0.7299" stop-color="#1aff00"/><stop offset="0.7342" stop-color="#33ff00"/><stop offset="0.7391" stop-color="#4dff00"/><stop offset="0.7440" stop-color="#66ff00"/><stop offset="0.7544" stop-color="#40ff00"/><stop offset="0.7633" stop-color="#1aff00"/><stop offset="0.7722" stop-color="#1aff00"/><stop offset="0.7735" stop-color="#33ff00"/><stop offset="0.7749" stop-color="#4dff00"/><stop offset="0.7762" stop-color="#66ff00"/><stop offset="0.7776" stop-color="#7fff00"/><stop offset="0.7789" stop-color="#99ff00"/><stop offset="0.7803" stop-color="#b2ff00"/><stop offset="0.7814" stop-color="#ccff00"/><stop offset="0.7825" stop-color="#e5ff00"/><stop offset="0.7836" stop-color="#ffff00"/><stop offset="0.7846" stop-color="#ffe600"/><stop offset="0.7857" stop-color="#ffcc00"/><stop offset="0.7868" stop-color="#ffb300"/><stop offset="0.7887" stop-color="#ffcf00"/><stop offset="0.7905" stop-color="#ffec00"/><stop offset="0.7923" stop-color="#f5ff00"/><stop offset="0.7941" stop-color="#d9ff00"/><stop offset="0.7962" stop-color="#bcff00"/><stop offset="0.7982" stop-color="#9fff00"/><stop offset="0.8003" stop-color="#83ff00"/><stop offset="0.8024" stop-color="#66ff00"/><stop offset="0.8229" stop-color="#46ff00"/><stop offset="1.0000" stop-color="#46ff00"/></linearGradient>
<rect x="231.3" y="273.14" width="578.90" height="17.94" fill="url(#pg1)"/>
<linearGradient id="pg2" gradientUnits="userSpaceOnUse" x1="231.3" y1="0" x2="810.2" y2="0"><stop offset="0.0000" stop-color="#7fff00"/><stop offset="0.3691" stop-color="#7fff00"/><stop offset="0.3778" stop-color="#62ff00"/><stop offset="0.3864" stop-color="#44ff00"/><stop offset="0.3951" stop-color="#26ff00"/><stop offset="0.4037" stop-color="#0dff00"/><stop offset="0.4123" stop-color="#00ff0d"/><stop offset="0.4210" stop-color="#00ff26"/><stop offset="0.4469" stop-color="#00ff4c"/><stop offset="0.4987" stop-color="#00ff66"/><stop offset="0.5678" stop-color="#00ff8c"/><stop offset="0.6369" stop-color="#00ffbf"/><stop offset="0.6714" stop-color="#00ffd9"/><stop offset="0.7060" stop-color="#00fff2"/><stop offset="0.7215" stop-color="#00fff2"/><stop offset="0.7236" stop-color="#00ffd9"/><stop offset="0.7257" stop-color="#00ffbf"/><stop offset="0.7278" stop-color="#00ffa6"/><stop offset="0.7299" stop-color="#00ff8c"/><stop offset="0.7320" stop-color="#00ff73"/><stop offset="0.7342" stop-color="#00ff59"/><stop offset="0.7440" stop-color="#00ff33"/><stop offset="0.7544" stop-color="#00ff26"/><stop offset="0.7633" stop-color="#00ff1a"/><stop offset="0.7722" stop-color="#00ff00"/><stop offset="0.7749" stop-color="#1eff00"/><stop offset="0.7776" stop-color="#3bff00"/><stop offset="0.7803" stop-color="#59ff00"/><stop offset="0.7825" stop-color="#77ff00"/><stop offset="0.7846" stop-color="#95ff00"/><stop offset="0.7868" stop-color="#b2ff00"/><stop offset="0.7893" stop-color="#99ff00"/><stop offset="0.7917" stop-color="#7fff00"/><stop offset="0.7941" stop-color="#66ff00"/><stop offset="0.7982" stop-color="#40ff00"/><stop offset="0.8024" stop-color="#1aff00"/><stop offset="0.8092" stop-color="#3bff00"/><stop offset="0.8161" stop-color="#5eff00"/><stop offset="0.8229" stop-color="#7fff00"/><stop offset="1.0000" stop-color="#7fff00"/></linearGradient>
<rect x="231.3" y="290.77" width="578.90" height="17.94" fill="url(#pg2)"/>
<linearGradient id="pg3" gradientUnits="userSpaceOnUse" x1="231.3" y1="0" x2="810.2" y2="0"><stop offset="0.0000" stop-color="#aaff00"/><stop offset="0.3605" stop-color="#aaff00"/><stop offset="0.3691" stop-color="#8bff00"/><stop offset="0.3778" stop-color="#6cff00"/><stop offset="0.3864" stop-color="#4dff00"/><stop offset="0.3907" stop-color="#33ff00"/><stop offset="0.3951" stop-color="#1aff00"/><stop offset="0.3994" stop-color="#00ff00"/><stop offset="0.4037" stop-color="#00ff1a"/><stop offset="0.4080" stop-color="#00ff39"/><stop offset="0.4123" stop-color="#00ff59"/><stop offset="0.4167" stop-color="#00ff79"/><stop offset="0.4210" stop-color="#00ff99"/><stop offset="0.4296" stop-color="#00ffb7"/><stop offset="0.4382" stop-color="#00ffd5"/><stop offset="0.4469" stop-color="#00fff2"/><stop offset="0.4987" stop-color="#00f2ff"/><stop offset="0.5333" stop-color="#00d9ff"/><stop offset="0.5678" stop-color="#00bfff"/><stop offset="0.6369" stop-color="#008cff"/><stop offset="0.7060" stop-color="#0059ff"/><stop offset="0.7215" stop-color="#0059ff"/><stop offset="0.7236" stop-color="#0075ff"/><stop offset="0.7257" stop-color="#0090ff"/><stop offset="0.7278" stop-color="#00acff"/><stop offset="0.7299" stop-color="#00c8ff"/><stop offset="0.7320" stop-color="#00e3ff"/><stop offset="0.7342" stop-color="#00ffff"/><stop offset="0.7440" stop-color="#00fff2"/><stop offset="0.7492" stop-color="#00ffd6"/><stop offset="0.7544" stop-color="#00ffb9"/><stop offset="0.7589" stop-color="#00ff9c"/><stop offset="0.7633" stop-color="#00ff80"/><stop offset="0.7722" stop-color="#00ff66"/><stop offset="0.7762" stop-color="#00ff46"/><stop offset="0.7803" stop-color="#00ff26"/><stop offset="0.7836" stop-color="#00ff06"/><stop offset="0.7868" stop-color="#1aff00"/><stop offset="0.7941" stop-color="#0dff00"/><stop offset="0.8024" stop-color="#00ff00"/><stop offset="0.8058" stop-color="#1cff00"/><stop offset="0.8092" stop-color="#39ff00"/><stop offset="0.8127" stop-color="#55ff00"/><stop offset="0.8161" stop-color="#71ff00"/><stop offset="0.8195" stop-color="#8dff00"/><stop offset="0.8229" stop-color="#aaff00"/><stop offset="1.0000" stop-color="#aaff00"/></linearGradient>
<rect x="231.3" y="308.41" width="578.90" height="17.94" fill="url(#pg3)"/>
<linearGradient id="pg4" gradientUnits="userSpaceOnUse" x1="231.3" y1="0" x2="810.2" y2="0"><stop offset="0.0000" stop-color="#99ff00"/><stop offset="0.3605" stop-color="#99ff00"/><stop offset="0.3670" stop-color="#79ff00"/><stop offset="0.3735" stop-color="#59ff00"/><stop offset="0.3799" stop-color="#39ff00"/><stop offset="0.3864" stop-color="#1aff00"/><stop offset="0.3893" stop-color="#00ff00"/><stop offset="0.3922" stop-color="#00ff1a"/><stop offset="0.3951" stop-color="#00ff33"/><stop offset="0.3979" stop-color="#00ff4c"/><stop offset="0.4008" stop-color="#00ff66"/><stop offset="0.4037" stop-color="#00ff80"/><stop offset="0.4080" stop-color="#00ff9f"/><stop offset="0.4123" stop-color="#00ffbf"/><stop offset="0.4167" stop-color="#00ffdf"/><stop offset="0.4210" stop-color="#00ffff"/><stop offset="0.4256" stop-color="#00e1ff"/><stop offset="0.4302" stop-color="#00c3ff"/><stop offset="0.4348" stop-color="#00a6ff"/><stop offset="0.4388" stop-color="#008cff"/><stop offset="0.4429" stop-color="#0073ff"/><stop offset="0.4469" stop-color="#0059ff"/><stop offset="0.4987" stop-color="#0040ff"/><stop offset="0.5333" stop-color="#0026ff"/><stop offset="0.5678" stop-color="#000dff"/><stop offset="0.6369" stop-color="#0700ff"/><stop offset="0.7215" stop-color="#0e00ff"/><stop offset="0.7236" stop-color="#0000ff"/><stop offset="0.7257" stop-color="#0019ff"/><stop offset="0.7278" stop-color="#0033ff"/><stop offset="0.7299" stop-color="#004cff"/><stop offset="0.7320" stop-color="#0066ff"/><stop offset="0.7342" stop-color="#007fff"/><stop offset="0.7440" stop-color="#008cff"/><stop offset="0.7492" stop-color="#00afff"/><stop offset="0.7544" stop-color="#00d2ff"/><stop offset="0.7589" stop-color="#00f5ff"/><stop offset="0.7633" stop-color="#00ffe6"/><stop offset="0.7722" stop-color="#00ffd9"/><stop offset="0.7762" stop-color="#00ffbc"/><stop offset="0.7803" stop-color="#00ff9f"/><stop offset="0.7836" stop-color="#00ff83"/><stop offset="0.7868" stop-color="#00ff66"/><stop offset="0.7941" stop-color="#00ff40"/><stop offset="0.8024" stop-color="#00ff1a"/><stop offset="0.8053" stop-color="#00ff00"/><stop offset="0.8083" stop-color="#1aff00"/><stop offset="0.8112" stop-color="#33ff00"/><stop offset="0.8141" stop-color="#4cff00"/><stop offset="0.8171" stop-color="#66ff00"/><stop offset="0.8200" stop-color="#7fff00"/><stop offset="0.8229" stop-color="#99ff00"/><stop offset="1.0000" stop-color="#99ff00"/></linearGradient>
<rect x="231.3" y="326.05" width="578.90" height="17.94" fill="url(#pg4)"/>
<linearGradient id="pg5" gradientUnits="userSpaceOnUse" x1="231.3" y1="0" x2="810.2" y2="0"><stop offset="0.0000" stop-color="#59ff00"/><stop offset="0.3605" stop-color="#59ff00"/><stop offset="0.3670" stop-color="#40ff00"/><stop offset="0.3735" stop-color="#26ff00"/><stop offset="0.3799" stop-color="#0dff00"/><stop offset="0.3864" stop-color="#00ff0d"/><stop offset="0.3893" stop-color="#00ff2a"/><stop offset="0.3922" stop-color="#00ff48"/><stop offset="0.3951" stop-color="#00ff66"/><stop offset="0.3979" stop-color="#00ff84"/><stop offset="0.4008" stop-color="#00ffa2"/><stop offset="0.4037" stop-color="#00ffbf"/><stop offset="0.4095" stop-color="#00ffdd"/><stop offset="0.4152" stop-color="#00fffb"/><stop offset="0.4210" stop-color="#00e5ff"/><stop offset="0.4237" stop-color="#00c9ff"/><stop offset="0.4265" stop-color="#00adff"/><stop offset="0.4293" stop-color="#0091ff"/><stop offset="0.4320" stop-color="#0075ff"/><stop offset="0.4348" stop-color="#0059ff"/><stop offset="0.4388" stop-color="#003bff"/><stop offset="0.4429" stop-color="#001eff"/><stop offset="0.4469" stop-color="#0000ff"/><stop offset="0.4987" stop-color="#1500ff"/><stop offset="0.5333" stop-color="#2600ff"/><stop offset="0.5678" stop-color="#3800ff"/><stop offset="0.6023" stop-color="#4a00ff"/><stop offset="0.6369" stop-color="#5b00ff"/><stop offset="0.6801" stop-color="#6200ff"/><stop offset="0.7008" stop-color="#5400ff"/><stop offset="0.7215" stop-color="#4600ff"/><stop offset="0.7236" stop-color="#3600ff"/><stop offset="0.7257" stop-color="#2500ff"/><stop offset="0.7278" stop-color="#1500ff"/><stop offset="0.7299" stop-color="#0500ff"/><stop offset="0.7320" stop-color="#0015ff"/><stop offset="0.7342" stop-color="#0033ff"/><stop offset="0.7374" stop-color="#0019ff"/><stop offset="0.7407" stop-color="#0000ff"/><stop offset="0.7440" stop-color="#0e00ff"/><stop offset="0.7461" stop-color="#0003ff"/><stop offset="0.7481" stop-color="#001fff"/><stop offset="0.7502" stop-color="#003bff"/><stop offset="0.7523" stop-color="#0057ff"/><stop offset="0.7544" stop-color="#0073ff"/><stop offset="0.7562" stop-color="#008fff"/><stop offset="0.7580" stop-color="#00abff"/><stop offset="0.7598" stop-color="#00c7ff"/><stop offset="0.7615" stop-color="#00e3ff"/><stop offset="0.7633" stop-color="#00ffff"/><stop offset="0.7655" stop-color="#00ffdf"/><stop offset="0.7677" stop-color="#00ffbf"/><stop offset="0.7700" stop-color="#00ff9f"/><stop offset="0.7722" stop-color="#00ff80"/><stop offset="0.7762" stop-color="#00ff9f"/><stop offset="0.7803" stop-color="#00ffbf"/><stop offset="0.7836" stop-color="#00ffdf"/><stop offset="0.7868" stop-color="#00ffff"/><stop offset="0.7941" stop-color="#00ffd9"/><stop offset="0.8024" stop-color="#00ffb2"/><stop offset="0.8044" stop-color="#00ff98"/><stop offset="0.8065" stop-color="#00ff7d"/><stop offset="0.8086" stop-color="#00ff62"/><stop offset="0.8106" stop-color="#00ff47"/><stop offset="0.8127" stop-color="#00ff2d"/><stop offset="0.8147" stop-color="#00ff12"/><stop offset="0.8168" stop-color="#09ff00"/><stop offset="0.8188" stop-color="#24ff00"/><stop offset="0.8209" stop-color="#3eff00"/><stop offset="0.8229" stop-color="#59ff00"/><stop offset="1.0000" stop-color="#59ff00"/></linearGradient>
<rect x="231.3" y="343.68" width="578.90" height="17.94" fill="url(#pg5)"/>
<linearGradient id="pg6" gradientUnits="userSpaceOnUse" x1="231.3" y1="0" x2="810.2" y2="0"><stop offset="0.0000" stop-color="#00ff00"/><stop offset="0.3605" stop-color="#00ff00"/><stop offset="0.3691" stop-color="#00ff22"/><stop offset="0.3778" stop-color="#00ff44"/><stop offset="0.3864" stop-color="#00ff66"/><stop offset="0.3899" stop-color="#00ff80"/><stop offset="0.3933" stop-color="#00ff99"/><stop offset="0.3968" stop-color="#00ffb2"/><stop offset="0.4002" stop-color="#00ffcc"/><stop offset="0.4037" stop-color="#00ffe6"/><stop offset="0.4095" stop-color="#00fbff"/><stop offset="0.4152" stop-color="#00ddff"/><stop offset="0.4210" stop-color="#00bfff"/><stop offset="0.4237" stop-color="#00a3ff"/><stop offset="0.4265" stop-color="#0087ff"/><stop offset="0.4293" stop-color="#006bff"/><stop offset="0.4320" stop-color="#004fff"/><stop offset="0.4348" stop-color="#0033ff"/><stop offset="0.4388" stop-color="#0015ff"/><stop offset="0.4429" stop-color="#0500ff"/><stop offset="0.4469" stop-color="#1500ff"/><stop offset="0.4598" stop-color="#2600ff"/><stop offset="0.4728" stop-color="#3800ff"/><stop offset="0.4857" stop-color="#4a00ff"/><stop offset="0.4987" stop-color="#5b00ff"/><stop offset="0.5505" stop-color="#7000ff"/><stop offset="0.5937" stop-color="#6200ff"/><stop offset="0.6369" stop-color="#5400ff"/><stop offset="0.6651" stop-color="#4400ff"/><stop offset="0.6933" stop-color="#3300ff"/><stop offset="0.7215" stop-color="#2300ff"/><stop offset="0.7233" stop-color="#1400ff"/><stop offset="0.7251" stop-color="#0500ff"/><stop offset="0.7269" stop-color="#0012ff"/><stop offset="0.7287" stop-color="#002eff"/><stop offset="0.7305" stop-color="#0049ff"/><stop offset="0.7323" stop-color="#0064ff"/><stop offset="0.7342" stop-color="#007fff"/><stop offset="0.7356" stop-color="#0064ff"/><stop offset="0.7370" stop-color="#0049ff"/><stop offset="0.7384" stop-color="#002eff"/><stop offset="0.7398" stop-color="#0012ff"/><stop offset="0.7412" stop-color="#0500ff"/><stop offset="0.7426" stop-color="#1400ff"/><stop offset="0.7440" stop-color="#2300ff"/><stop offset="0.7461" stop-color="#1300ff"/><stop offset="0.7481" stop-color="#0300ff"/><stop offset="0.7502" stop-color="#0018ff"/><stop offset="0.7523" stop-color="#0036ff"/><stop offset="0.7544" stop-color="#0053ff"/><stop offset="0.7562" stop-color="#0070ff"/><stop offset="0.7580" stop-color="#008eff"/><stop offset="0.7598" stop-color="#00abff"/><stop offset="0.7615" stop-color="#00c8ff"/><stop offset="0.7633" stop-color="#00e5ff"/><stop offset="0.7648" stop-color="#00ffff"/><stop offset="0.7663" stop-color="#00ffe6"/><stop offset="0.7677" stop-color="#00ffcc"/><stop offset="0.7692" stop-color="#00ffb3"/><stop offset="0.7707" stop-color="#00ff99"/><stop offset="0.7722" stop-color="#00ff80"/><stop offset="0.7749" stop-color="#00ff9d"/><stop offset="0.7776" stop-color="#00ffbb"/><stop offset="0.7803" stop-color="#00ffd9"/><stop offset="0.7825" stop-color="#00fff6"/><stop offset="0.7846" stop-color="#00eaff"/><stop offset="0.7868" stop-color="#00ccff"/><stop offset="0.7941" stop-color="#00e5ff"/><stop offset="0.8024" stop-color="#00ffff"/><stop offset="0.8047" stop-color="#00ffe3"/><stop offset="0.8070" stop-color="#00ffc6"/><stop offset="0.8092" stop-color="#00ffaa"/><stop offset="0.8115" stop-color="#00ff8e"/><stop offset="0.8138" stop-color="#00ff71"/><stop offset="0.8161" stop-color="#00ff55"/><stop offset="0.8184" stop-color="#00ff39"/><stop offset="0.8207" stop-color="#00ff1c"/><stop offset="0.8229" stop-color="#00ff00"/><stop offset="1.0000" stop-color="#00ff00"/></linearGradient>
<rect x="231.3" y="361.32" width="578.90" height="17.94" fill="url(#pg6)"/>
<linearGradient id="pg7" gradientUnits="userSpaceOnUse" x1="231.3" y1="0" x2="810.2" y2="0"><stop offset="0.0000" stop-color="#00ff78"/><stop offset="0.3605" stop-color="#00ff78"/><stop offset="0.3735" stop-color="#00ff9c"/><stop offset="0.3864" stop-color="#00ffbf"/><stop offset="0.3922" stop-color="#00ffdd"/><stop offset="0.3979" stop-color="#00fffb"/><stop offset="0.4037" stop-color="#00e5ff"/><stop offset="0.4080" stop-color="#00ccff"/><stop offset="0.4123" stop-color="#00b2ff"/><stop offset="0.4167" stop-color="#0099ff"/><stop offset="0.4210" stop-color="#007fff"/><stop offset="0.4256" stop-color="#005dff"/><stop offset="0.4302" stop-color="#003bff"/><stop offset="0.4348" stop-color="#0019ff"/><stop offset="0.4469" stop-color="#0000ff"/><stop offset="0.4987" stop-color="#0700ff"/><stop offset="0.5678" stop-color="#1500ff"/><stop offset="0.6369" stop-color="#0700ff"/><stop offset="0.7215" stop-color="#000dff"/><stop offset="0.7257" stop-color="#002aff"/><stop offset="0.7299" stop-color="#0048ff"/><stop offset="0.7342" stop-color="#0066ff"/><stop offset="0.7356" stop-color="#004cff"/><stop offset="0.7370" stop-color="#0033ff"/><stop offset="0.7384" stop-color="#001aff"/><stop offset="0.7398" stop-color="#0000ff"/><stop offset="0.7412" stop-color="#0e00ff"/><stop offset="0.7426" stop-color="#1c00ff"/><stop offset="0.7440" stop-color="#2a00ff"/><stop offset="0.7466" stop-color="#1900ff"/><stop offset="0.7492" stop-color="#0900ff"/><stop offset="0.7518" stop-color="#000eff"/><stop offset="0.7544" stop-color="#002dff"/><stop offset="0.7566" stop-color="#004bff"/><stop offset="0.7589" stop-color="#0069ff"/><stop offset="0.7611" stop-color="#0087ff"/><stop offset="0.7633" stop-color="#00a6ff"/><stop offset="0.7644" stop-color="#00c1ff"/><stop offset="0.7655" stop-color="#00dcff"/><stop offset="0.7666" stop-color="#00f7ff"/><stop offset="0.7677" stop-color="#00ffec"/><stop offset="0.7689" stop-color="#00ffd1"/><stop offset="0.7700" stop-color="#00ffb6"/><stop offset="0.7711" stop-color="#00ff9b"/><stop offset="0.7722" stop-color="#00ff80"/><stop offset="0.7738" stop-color="#00ff9d"/><stop offset="0.7754" stop-color="#00ffba"/><stop offset="0.7770" stop-color="#00ffd7"/><stop offset="0.7786" stop-color="#00fff5"/><stop offset="0.7803" stop-color="#00ecff"/><stop offset="0.7816" stop-color="#00cfff"/><stop offset="0.7829" stop-color="#00b1ff"/><stop offset="0.7842" stop-color="#0094ff"/><stop offset="0.7855" stop-color="#0077ff"/><stop offset="0.7868" stop-color="#0059ff"/><stop offset="0.7941" stop-color="#0086ff"/><stop offset="0.8024" stop-color="#00b3ff"/><stop offset="0.8050" stop-color="#00cdff"/><stop offset="0.8075" stop-color="#00e7ff"/><stop offset="0.8101" stop-color="#00fffc"/><stop offset="0.8127" stop-color="#00ffe2"/><stop offset="0.8152" stop-color="#00ffc7"/><stop offset="0.8178" stop-color="#00ffad"/><stop offset="0.8204" stop-color="#00ff92"/><stop offset="0.8229" stop-color="#00ff78"/><stop offset="1.0000" stop-color="#00ff78"/></linearGradient>
<rect x="231.3" y="378.95" width="578.90" height="17.94" fill="url(#pg7)"/>
<linearGradient id="pg8" gradientUnits="userSpaceOnUse" x1="231.3" y1="0" x2="810.2" y2="0"><stop offset="0.0000" stop-color="#00ffdd"/><stop offset="0.3691" stop-color="#00ffdd"/><stop offset="0.3951" stop-color="#00f2ff"/><stop offset="0.4037" stop-color="#00d9ff"/><stop offset="0.4123" stop-color="#00bfff"/><stop offset="0.4210" stop-color="#00a6ff"/><stop offset="0.4339" stop-color="#0086ff"/><stop offset="0.4469" stop-color="#0066ff"/><stop offset="0.4987" stop-color="#0059ff"/><stop offset="0.5678" stop-color="#0066ff"/><stop offset="0.6369" stop-color="#007fff"/><stop offset="0.7215" stop-color="#00a6ff"/><stop offset="0.7342" stop-color="#007fff"/><stop offset="0.7374" stop-color="#005dff"/><stop offset="0.7407" stop-color="#003bff"/><stop offset="0.7440" stop-color="#0019ff"/><stop offset="0.7475" stop-color="#003bff"/><stop offset="0.7509" stop-color="#005dff"/><stop offset="0.7544" stop-color="#007fff"/><stop offset="0.7566" stop-color="#0099ff"/><stop offset="0.7589" stop-color="#00b2ff"/><stop offset="0.7611" stop-color="#00ccff"/><stop offset="0.7633" stop-color="#00e5ff"/><stop offset="0.7722" stop-color="#00ffe6"/><stop offset="0.7735" stop-color="#00fcff"/><stop offset="0.7749" stop-color="#00dfff"/><stop offset="0.7762" stop-color="#00c2ff"/><stop offset="0.7776" stop-color="#00a6ff"/><stop offset="0.7789" stop-color="#0089ff"/><stop offset="0.7803" stop-color="#006cff"/><stop offset="0.7814" stop-color="#0050ff"/><stop offset="0.7825" stop-color="#0033ff"/><stop offset="0.7836" stop-color="#0016ff"/><stop offset="0.7846" stop-color="#0400ff"/><stop offset="0.7857" stop-color="#1300ff"/><stop offset="0.7868" stop-color="#2300ff"/><stop offset="0.7905" stop-color="#1300ff"/><stop offset="0.7941" stop-color="#0400ff"/><stop offset="0.7982" stop-color="#0016ff"/><stop offset="0.8024" stop-color="#0033ff"/><stop offset="0.8047" stop-color="#004dff"/><stop offset="0.8070" stop-color="#0068ff"/><stop offset="0.8092" stop-color="#0082ff"/><stop offset="0.8115" stop-color="#009dff"/><stop offset="0.8138" stop-color="#00b7ff"/><stop offset="0.8161" stop-color="#00d2ff"/><stop offset="0.8184" stop-color="#00ecff"/><stop offset="0.8207" stop-color="#00fff7"/><stop offset="0.8229" stop-color="#00ffdd"/><stop offset="1.0000" stop-color="#00ffdd"/></linearGradient>
<rect x="231.3" y="396.59" width="578.90" height="17.94" fill="url(#pg8)"/>
<linearGradient id="pg9" gradientUnits="userSpaceOnUse" x1="231.3" y1="0" x2="810.2" y2="0"><stop offset="0.0000" stop-color="#00b9ff"/><stop offset="0.3778" stop-color="#00b9ff"/><stop offset="0.4123" stop-color="#00b3ff"/><stop offset="0.4469" stop-color="#00ccff"/><stop offset="0.4987" stop-color="#00e5ff"/><stop offset="0.5678" stop-color="#00ffff"/><stop offset="0.6369" stop-color="#00ffcc"/><stop offset="0.7215" stop-color="#00ff99"/><stop offset="0.7236" stop-color="#00ffb7"/><stop offset="0.7257" stop-color="#00ffd4"/><stop offset="0.7278" stop-color="#00fff2"/><stop offset="0.7299" stop-color="#00eeff"/><stop offset="0.7320" stop-color="#00d0ff"/><stop offset="0.7342" stop-color="#00b3ff"/><stop offset="0.7440" stop-color="#0099ff"/><stop offset="0.7544" stop-color="#00ccff"/><stop offset="0.7589" stop-color="#00e5ff"/><stop offset="0.7633" stop-color="#00ffff"/><stop offset="0.7722" stop-color="#00ffff"/><stop offset="0.7742" stop-color="#00dfff"/><stop offset="0.7762" stop-color="#00bfff"/><stop offset="0.7782" stop-color="#009fff"/><stop offset="0.7803" stop-color="#0080ff"/><stop offset="0.7816" stop-color="#0066ff"/><stop offset="0.7829" stop-color="#004cff"/><stop offset="0.7842" stop-color="#0033ff"/><stop offset="0.7855" stop-color="#001aff"/><stop offset="0.7868" stop-color="#0000ff"/><stop offset="0.7941" stop-color="#0026ff"/><stop offset="0.8024" stop-color="#004cff"/><stop offset="0.8075" stop-color="#0068ff"/><stop offset="0.8127" stop-color="#0083ff"/><stop offset="0.8178" stop-color="#009eff"/><stop offset="0.8229" stop-color="#00b9ff"/><stop offset="1.0000" stop-color="#00b9ff"/></linearGradient>
<rect x="231.3" y="414.23" width="578.90" height="17.94" fill="url(#pg9)"/>
<linearGradient id="pg10" gradientUnits="userSpaceOnUse" x1="231.3" y1="0" x2="810.2" y2="0"><stop offset="0.0000" stop-color="#006eff"/><stop offset="0.3605" stop-color="#006eff"/><stop offset="0.3864" stop-color="#007fff"/><stop offset="0.3916" stop-color="#0099ff"/><stop offset="0.3968" stop-color="#00b3ff"/><stop offset="0.4020" stop-color="#00ccff"/><stop offset="0.4072" stop-color="#00e5ff"/><stop offset="0.4123" stop-color="#00ffff"/><stop offset="0.4181" stop-color="#00ffe1"/><stop offset="0.4238" stop-color="#00ffc4"/><stop offset="0.4296" stop-color="#00ffa6"/><stop offset="0.4469" stop-color="#00ff80"/><stop offset="0.4987" stop-color="#00ff66"/><stop offset="0.5678" stop-color="#00ff4c"/><stop offset="0.6369" stop-color="#00ff1a"/><stop offset="0.6792" stop-color="#00ff00"/><stop offset="0.7215" stop-color="#1aff00"/><stop offset="0.7233" stop-color="#00ff04"/><stop offset="0.7251" stop-color="#00ff21"/><stop offset="0.7269" stop-color="#00ff3e"/><stop offset="0.7287" stop-color="#00ff5b"/><stop offset="0.7305" stop-color="#00ff78"/><stop offset="0.7323" stop-color="#00ff95"/><stop offset="0.7342" stop-color="#00ffb2"/><stop offset="0.7440" stop-color="#00ff80"/><stop offset="0.7492" stop-color="#00ff66"/><stop offset="0.7544" stop-color="#00ff4c"/><stop offset="0.7633" stop-color="#00ff1a"/><stop offset="0.7643" stop-color="#00ff36"/><stop offset="0.7653" stop-color="#00ff52"/><stop offset="0.7663" stop-color="#00ff6f"/><stop offset="0.7673" stop-color="#00ff8b"/><stop offset="0.7682" stop-color="#00ffa7"/><stop offset="0.7692" stop-color="#00ffc4"/><stop offset="0.7702" stop-color="#00ffe0"/><stop offset="0.7712" stop-color="#00fffc"/><stop offset="0.7722" stop-color="#00e5ff"/><stop offset="0.7749" stop-color="#00ccff"/><stop offset="0.7776" stop-color="#00b3ff"/><stop offset="0.7803" stop-color="#0099ff"/><stop offset="0.7825" stop-color="#007fff"/><stop offset="0.7846" stop-color="#0066ff"/><stop offset="0.7868" stop-color="#004cff"/><stop offset="0.7941" stop-color="#0066ff"/><stop offset="0.8024" stop-color="#007fff"/><stop offset="0.8229" stop-color="#006eff"/><stop offset="1.0000" stop-color="#006eff"/></linearGradient>
<rect x="231.3" y="431.86" width="578.90" height="17.94" fill="url(#pg10)"/>
<rect x="649" y="255.5" width="7.30" height="194.0" fill="#000"/>
<rect x="673.2" y="255.5" width="5.10" height="194.0" fill="#000"/>
<rect x="695.8" y="255.5" width="11.90" height="194.0" fill="#000"/>
<path d="M232.50 255.50L232.50 449.50M248.50 255.50L248.50 449.50M263.50 255.50L263.50 449.50M279.50 255.50L279.50 449.50M295.50 255.50L295.50 449.50M310.50 255.50L310.50 449.50M326.50 255.50L326.50 449.50M341.50 255.50L341.50 449.50M357.50 255.50L357.50 449.50M372.50 255.50L372.50 449.50M388.50 255.50L388.50 449.50M403.50 255.50L403.50 449.50M419.50 255.50L419.50 449.50M434.50 255.50L434.50 449.50M450.50 255.50L450.50 449.50M465.50 255.50L465.50 449.50M481.50 255.50L481.50 449.50M496.50 255.50L496.50 449.50M512.50 255.50L512.50 449.50M528.50 255.50L528.50 449.50M543.50 255.50L543.50 449.50M559.50 255.50L559.50 449.50M574.50 255.50L574.50 449.50M590.50 255.50L590.50 449.50M605.50 255.50L605.50 449.50M621.50 255.50L621.50 449.50M636.50 255.50L636.50 449.50M667.50 255.50L667.50 449.50M683.50 255.50L683.50 449.50M714.50 255.50L714.50 449.50M730.50 255.50L730.50 449.50M745.50 255.50L745.50 449.50M761.50 255.50L761.50 449.50M776.50 255.50L776.50 449.50M792.50 255.50L792.50 449.50M807.50 255.50L807.50 449.50M231.30 273.50L810.20 273.50M231.30 290.50L810.20 290.50M231.30 308.50L810.20 308.50M231.30 326.50L810.20 326.50M231.30 343.50L810.20 343.50M231.30 361.50L810.20 361.50M231.30 378.50L810.20 378.50M231.30 396.50L810.20 396.50M231.30 414.50L810.20 414.50M231.30 431.50L810.20 431.50" stroke="#000" stroke-width="1" fill="none" shape-rendering="crispEdges"/>
<path d="M210.50 255.50L829.50 255.50M210.50 449.50L829.50 449.50M210.50 255.50L210.50 449.50M829.50 255.50L829.50 449.50" stroke="#fff" stroke-width="1" fill="none" shape-rendering="crispEdges"/>
<path d="M214.50 255.50L214.50 264.50M214.50 449.50L214.50 440.50M220.50 255.50L220.50 260.50M220.50 449.50L220.50 444.50M226.50 255.50L226.50 260.50M226.50 449.50L226.50 444.50M232.50 255.50L232.50 260.50M232.50 449.50L232.50 444.50M238.50 255.50L238.50 260.50M238.50 449.50L238.50 444.50M244.50 255.50L244.50 260.50M244.50 449.50L244.50 444.50M250.50 255.50L250.50 260.50M250.50 449.50L250.50 444.50M256.50 255.50L256.50 260.50M256.50 449.50L256.50 444.50M262.50 255.50L262.50 260.50M262.50 449.50L262.50 444.50M268.50 255.50L268.50 264.50M268.50 449.50L268.50 440.50M274.50 255.50L274.50 260.50M274.50 449.50L274.50 444.50M279.50 255.50L279.50 260.50M279.50 449.50L279.50 444.50M285.50 255.50L285.50 260.50M285.50 449.50L285.50 444.50M291.50 255.50L291.50 260.50M291.50 449.50L291.50 444.50M297.50 255.50L297.50 260.50M297.50 449.50L297.50 444.50M303.50 255.50L303.50 260.50M303.50 449.50L303.50 444.50M309.50 255.50L309.50 260.50M309.50 449.50L309.50 444.50M315.50 255.50L315.50 260.50M315.50 449.50L315.50 444.50M321.50 255.50L321.50 264.50M321.50 449.50L321.50 440.50M327.50 255.50L327.50 260.50M327.50 449.50L327.50 444.50M333.50 255.50L333.50 260.50M333.50 449.50L333.50 444.50M339.50 255.50L339.50 260.50M339.50 449.50L339.50 444.50M345.50 255.50L345.50 260.50M345.50 449.50L345.50 444.50M351.50 255.50L351.50 260.50M351.50 449.50L351.50 444.50M357.50 255.50L357.50 260.50M357.50 449.50L357.50 444.50M363.50 255.50L363.50 260.50M363.50 449.50L363.50 444.50M369.50 255.50L369.50 260.50M369.50 449.50L369.50 444.50M375.50 255.50L375.50 264.50M375.50 449.50L375.50 440.50M381.50 255.50L381.50 260.50M381.50 449.50L381.50 444.50M387.50 255.50L387.50 260.50M387.50 449.50L387.50 444.50M393.50 255.50L393.50 260.50M393.50 449.50L393.50 444.50M399.50 255.50L399.50 260.50M399.50 449.50L399.50 444.50M404.50 255.50L404.50 260.50M404.50 449.50L404.50 444.50M410.50 255.50L410.50 260.50M410.50 449.50L410.50 444.50M416.50 255.50L416.50 260.50M416.50 449.50L416.50 444.50M422.50 255.50L422.50 260.50M422.50 449.50L422.50 444.50M428.50 255.50L428.50 264.50M428.50 449.50L428.50 440.50M434.50 255.50L434.50 260.50M434.50 449.50L434.50 444.50M440.50 255.50L440.50 260.50M440.50 449.50L440.50 444.50M446.50 255.50L446.50 260.50M446.50 449.50L446.50 444.50M452.50 255.50L452.50 260.50M452.50 449.50L452.50 444.50M458.50 255.50L458.50 260.50M458.50 449.50L458.50 444.50M464.50 255.50L464.50 260.50M464.50 449.50L464.50 444.50M470.50 255.50L470.50 260.50M470.50 449.50L470.50 444.50M476.50 255.50L476.50 260.50M476.50 449.50L476.50 444.50M482.50 255.50L482.50 264.50M482.50 449.50L482.50 440.50M488.50 255.50L488.50 260.50M488.50 449.50L488.50 444.50M494.50 255.50L494.50 260.50M494.50 449.50L494.50 444.50M500.50 255.50L500.50 260.50M500.50 449.50L500.50 444.50M506.50 255.50L506.50 260.50M506.50 449.50L506.50 444.50M512.50 255.50L512.50 260.50M512.50 449.50L512.50 444.50M518.50 255.50L518.50 260.50M518.50 449.50L518.50 444.50M524.50 255.50L524.50 260.50M524.50 449.50L524.50 444.50M529.50 255.50L529.50 260.50M529.50 449.50L529.50 444.50M535.50 255.50L535.50 264.50M535.50 449.50L535.50 440.50M541.50 255.50L541.50 260.50M541.50 449.50L541.50 444.50M547.50 255.50L547.50 260.50M547.50 449.50L547.50 444.50M553.50 255.50L553.50 260.50M553.50 449.50L553.50 444.50M559.50 255.50L559.50 260.50M559.50 449.50L559.50 444.50M565.50 255.50L565.50 260.50M565.50 449.50L565.50 444.50M571.50 255.50L571.50 260.50M571.50 449.50L571.50 444.50M577.50 255.50L577.50 260.50M577.50 449.50L577.50 444.50M583.50 255.50L583.50 260.50M583.50 449.50L583.50 444.50M589.50 255.50L589.50 264.50M589.50 449.50L589.50 440.50M595.50 255.50L595.50 260.50M595.50 449.50L595.50 444.50M601.50 255.50L601.50 260.50M601.50 449.50L601.50 444.50M607.50 255.50L607.50 260.50M607.50 449.50L607.50 444.50M613.50 255.50L613.50 260.50M613.50 449.50L613.50 444.50M619.50 255.50L619.50 260.50M619.50 449.50L619.50 444.50M625.50 255.50L625.50 260.50M625.50 449.50L625.50 444.50M631.50 255.50L631.50 260.50M631.50 449.50L631.50 444.50M637.50 255.50L637.50 260.50M637.50 449.50L637.50 444.50M643.50 255.50L643.50 264.50M643.50 449.50L643.50 440.50M649.50 255.50L649.50 260.50M649.50 449.50L649.50 444.50M654.50 255.50L654.50 260.50M654.50 449.50L654.50 444.50M660.50 255.50L660.50 260.50M660.50 449.50L660.50 444.50M666.50 255.50L666.50 260.50M666.50 449.50L666.50 444.50M672.50 255.50L672.50 260.50M672.50 449.50L672.50 444.50M678.50 255.50L678.50 260.50M678.50 449.50L678.50 444.50M684.50 255.50L684.50 260.50M684.50 449.50L684.50 444.50M690.50 255.50L690.50 260.50M690.50 449.50L690.50 444.50M696.50 255.50L696.50 264.50M696.50 449.50L696.50 440.50M702.50 255.50L702.50 260.50M702.50 449.50L702.50 444.50M708.50 255.50L708.50 260.50M708.50 449.50L708.50 444.50M714.50 255.50L714.50 260.50M714.50 449.50L714.50 444.50M720.50 255.50L720.50 260.50M720.50 449.50L720.50 444.50M726.50 255.50L726.50 260.50M726.50 449.50L726.50 444.50M732.50 255.50L732.50 260.50M732.50 449.50L732.50 444.50M738.50 255.50L738.50 260.50M738.50 449.50L738.50 444.50M744.50 255.50L744.50 260.50M744.50 449.50L744.50 444.50M750.50 255.50L750.50 264.50M750.50 449.50L750.50 440.50M756.50 255.50L756.50 260.50M756.50 449.50L756.50 444.50M762.50 255.50L762.50 260.50M762.50 449.50L762.50 444.50M768.50 255.50L768.50 260.50M768.50 449.50L768.50 444.50M774.50 255.50L774.50 260.50M774.50 449.50L774.50 444.50M779.50 255.50L779.50 260.50M779.50 449.50L779.50 444.50M785.50 255.50L785.50 260.50M785.50 449.50L785.50 444.50M791.50 255.50L791.50 260.50M791.50 449.50L791.50 444.50M797.50 255.50L797.50 260.50M797.50 449.50L797.50 444.50M803.50 255.50L803.50 264.50M803.50 449.50L803.50 440.50M809.50 255.50L809.50 260.50M809.50 449.50L809.50 444.50M815.50 255.50L815.50 260.50M815.50 449.50L815.50 444.50M821.50 255.50L821.50 260.50M821.50 449.50L821.50 444.50M827.50 255.50L827.50 260.50M827.50 449.50L827.50 444.50" stroke="#fff" stroke-width="1" fill="none" shape-rendering="crispEdges"/>
<text x="203.3" y="268.9" font-size="13.5" text-anchor="end" fill="#fff" stroke="#000" stroke-width="0.2" textLength="128.5" lengthAdjust="spacingAndGlyphs">ELS-11 Pitch Angle</text>
<text x="203.3" y="286.6" font-size="13.5" text-anchor="end" fill="#fff" stroke="#000" stroke-width="0.2" textLength="132.7" lengthAdjust="spacingAndGlyphs">ELS-10 Pitch Angle</text>
<text x="203.3" y="304.2" font-size="13.5" text-anchor="end" fill="#fff" stroke="#000" stroke-width="0.2" textLength="135.5" lengthAdjust="spacingAndGlyphs">ELS-09 Pitch Angle</text>
<text x="203.3" y="321.8" font-size="13.5" text-anchor="end" fill="#fff" stroke="#000" stroke-width="0.2" textLength="135.5" lengthAdjust="spacingAndGlyphs">ELS-08 Pitch Angle</text>
<text x="203.3" y="339.5" font-size="13.5" text-anchor="end" fill="#fff" stroke="#000" stroke-width="0.2" textLength="135.5" lengthAdjust="spacingAndGlyphs">ELS-07 Pitch Angle</text>
<text x="203.3" y="357.1" font-size="13.5" text-anchor="end" fill="#fff" stroke="#000" stroke-width="0.2" textLength="135.5" lengthAdjust="spacingAndGlyphs">ELS-06 Pitch Angle</text>
<text x="203.3" y="374.7" font-size="13.5" text-anchor="end" fill="#fff" stroke="#000" stroke-width="0.2" textLength="135.5" lengthAdjust="spacingAndGlyphs">ELS-05 Pitch Angle</text>
<text x="203.3" y="392.4" font-size="13.5" text-anchor="end" fill="#fff" stroke="#000" stroke-width="0.2" textLength="135.5" lengthAdjust="spacingAndGlyphs">ELS-04 Pitch Angle</text>
<text x="203.3" y="410.0" font-size="13.5" text-anchor="end" fill="#fff" stroke="#000" stroke-width="0.2" textLength="135.5" lengthAdjust="spacingAndGlyphs">ELS-03 Pitch Angle</text>
<text x="203.3" y="427.6" font-size="13.5" text-anchor="end" fill="#fff" stroke="#000" stroke-width="0.2" textLength="135.5" lengthAdjust="spacingAndGlyphs">ELS-02 Pitch Angle</text>
<text x="203.3" y="445.3" font-size="13.5" text-anchor="end" fill="#fff" stroke="#000" stroke-width="0.2" textLength="132.7" lengthAdjust="spacingAndGlyphs">ELS-01 Pitch Angle</text>
<text x="215.0" y="468" font-size="14" text-anchor="middle" fill="#fff" stroke="#000" stroke-width="0.2">14:30</text>
<text x="268.6" y="468" font-size="14" text-anchor="middle" fill="#fff" stroke="#000" stroke-width="0.2">14:45</text>
<text x="322.1" y="468" font-size="14" text-anchor="middle" fill="#fff" stroke="#000" stroke-width="0.2">15:00</text>
<text x="375.7" y="468" font-size="14" text-anchor="middle" fill="#fff" stroke="#000" stroke-width="0.2">15:15</text>
<text x="429.3" y="468" font-size="14" text-anchor="middle" fill="#fff" stroke="#000" stroke-width="0.2">15:30</text>
<text x="482.8" y="468" font-size="14" text-anchor="middle" fill="#fff" stroke="#000" stroke-width="0.2">15:45</text>
<text x="536.4" y="468" font-size="14" text-anchor="middle" fill="#fff" stroke="#000" stroke-width="0.2">16:00</text>
<text x="590.0" y="468" font-size="14" text-anchor="middle" fill="#fff" stroke="#000" stroke-width="0.2">16:15</text>
<text x="643.6" y="468" font-size="14" text-anchor="middle" fill="#fff" stroke="#000" stroke-width="0.2">16:30</text>
<text x="697.1" y="468" font-size="14" text-anchor="middle" fill="#fff" stroke="#000" stroke-width="0.2">16:45</text>
<text x="750.7" y="468" font-size="14" text-anchor="middle" fill="#fff" stroke="#000" stroke-width="0.2">17:00</text>
<text x="804.3" y="468" font-size="14" text-anchor="middle" fill="#fff" stroke="#000" stroke-width="0.2">17:15</text>
<text x="117.5" y="468" font-size="14" text-anchor="start" fill="#fff" stroke="#000" stroke-width="0.2" textLength="63" lengthAdjust="spacingAndGlyphs">GMT(min)</text>
<rect x="850.5" y="275.5" width="32" height="154" fill="url(#cb)" stroke="#fff" stroke-width="1" shape-rendering="crispEdges"/>
<path d="M878.50 422.50L882.50 422.50M878.50 414.50L882.50 414.50M878.50 407.50L882.50 407.50M878.50 399.50L882.50 399.50M874.50 391.50L882.50 391.50M878.50 384.50L882.50 384.50M878.50 376.50L882.50 376.50M878.50 368.50L882.50 368.50M878.50 360.50L882.50 360.50M874.50 352.50L882.50 352.50M878.50 345.50L882.50 345.50M878.50 337.50L882.50 337.50M878.50 329.50L882.50 329.50M878.50 322.50L882.50 322.50M874.50 314.50L882.50 314.50M878.50 306.50L882.50 306.50M878.50 298.50L882.50 298.50M878.50 290.50L882.50 290.50M878.50 283.50L882.50 283.50" stroke="#fff" stroke-width="1" fill="none" shape-rendering="crispEdges"/>
<text x="894.7" y="280.3" font-size="16.5" text-anchor="start" fill="#fff" stroke="#000" stroke-width="0.2">180</text>
<text x="894.7" y="318.8" font-size="16.5" text-anchor="start" fill="#fff" stroke="#000" stroke-width="0.2">135</text>
<text x="894.7" y="358.2" font-size="16.5" text-anchor="start" fill="#fff" stroke="#000" stroke-width="0.2">90</text>
<text x="894.7" y="396.8" font-size="16.5" text-anchor="start" fill="#fff" stroke="#000" stroke-width="0.2">45</text>
<text x="894.7" y="435.4" font-size="16.5" text-anchor="start" fill="#fff" stroke="#000" stroke-width="0.2">0</text>
<text x="851.4" y="258" font-size="16" text-anchor="start" fill="#fff" stroke="#000" stroke-width="0.2" textLength="31.4" lengthAdjust="spacingAndGlyphs">Deg</text>
<path d="M201.00 501.50L839.00 501.50M201.00 678.50L839.00 678.50M210.50 501.50L210.50 678.50M829.50 501.50L829.50 678.50" stroke="#fff" stroke-width="1" fill="none" shape-rendering="crispEdges"/>
<path d="M214.50 501.50L214.50 510.50M214.50 678.50L214.50 669.50M220.50 501.50L220.50 506.50M220.50 678.50L220.50 673.50M226.50 501.50L226.50 506.50M226.50 678.50L226.50 673.50M232.50 501.50L232.50 506.50M232.50 678.50L232.50 673.50M238.50 501.50L238.50 506.50M238.50 678.50L238.50 673.50M244.50 501.50L244.50 506.50M244.50 678.50L244.50 673.50M250.50 501.50L250.50 506.50M250.50 678.50L250.50 673.50M256.50 501.50L256.50 506.50M256.50 678.50L256.50 673.50M262.50 501.50L262.50 506.50M262.50 678.50L262.50 673.50M268.50 501.50L268.50 510.50M268.50 678.50L268.50 669.50M274.50 501.50L274.50 506.50M274.50 678.50L274.50 673.50M279.50 501.50L279.50 506.50M279.50 678.50L279.50 673.50M285.50 501.50L285.50 506.50M285.50 678.50L285.50 673.50M291.50 501.50L291.50 506.50M291.50 678.50L291.50 673.50M297.50 501.50L297.50 506.50M297.50 678.50L297.50 673.50M303.50 501.50L303.50 506.50M303.50 678.50L303.50 673.50M309.50 501.50L309.50 506.50M309.50 678.50L309.50 673.50M315.50 501.50L315.50 506.50M315.50 678.50L315.50 673.50M321.50 501.50L321.50 510.50M321.50 678.50L321.50 669.50M327.50 501.50L327.50 506.50M327.50 678.50L327.50 673.50M333.50 501.50L333.50 506.50M333.50 678.50L333.50 673.50M339.50 501.50L339.50 506.50M339.50 678.50L339.50 673.50M345.50 501.50L345.50 506.50M345.50 678.50L345.50 673.50M351.50 501.50L351.50 506.50M351.50 678.50L351.50 673.50M357.50 501.50L357.50 506.50M357.50 678.50L357.50 673.50M363.50 501.50L363.50 506.50M363.50 678.50L363.50 673.50M369.50 501.50L369.50 506.50M369.50 678.50L369.50 673.50M375.50 501.50L375.50 510.50M375.50 678.50L375.50 669.50M381.50 501.50L381.50 506.50M381.50 678.50L381.50 673.50M387.50 501.50L387.50 506.50M387.50 678.50L387.50 673.50M393.50 501.50L393.50 506.50M393.50 678.50L393.50 673.50M399.50 501.50L399.50 506.50M399.50 678.50L399.50 673.50M404.50 501.50L404.50 506.50M404.50 678.50L404.50 673.50M410.50 501.50L410.50 506.50M410.50 678.50L410.50 673.50M416.50 501.50L416.50 506.50M416.50 678.50L416.50 673.50M422.50 501.50L422.50 506.50M422.50 678.50L422.50 673.50M428.50 501.50L428.50 510.50M428.50 678.50L428.50 669.50M434.50 501.50L434.50 506.50M434.50 678.50L434.50 673.50M440.50 501.50L440.50 506.50M440.50 678.50L440.50 673.50M446.50 501.50L446.50 506.50M446.50 678.50L446.50 673.50M452.50 501.50L452.50 506.50M452.50 678.50L452.50 673.50M458.50 501.50L458.50 506.50M458.50 678.50L458.50 673.50M464.50 501.50L464.50 506.50M464.50 678.50L464.50 673.50M470.50 501.50L470.50 506.50M470.50 678.50L470.50 673.50M476.50 501.50L476.50 506.50M476.50 678.50L476.50 673.50M482.50 501.50L482.50 510.50M482.50 678.50L482.50 669.50M488.50 501.50L488.50 506.50M488.50 678.50L488.50 673.50M494.50 501.50L494.50 506.50M494.50 678.50L494.50 673.50M500.50 501.50L500.50 506.50M500.50 678.50L500.50 673.50M506.50 501.50L506.50 506.50M506.50 678.50L506.50 673.50M512.50 501.50L512.50 506.50M512.50 678.50L512.50 673.50M518.50 501.50L518.50 506.50M518.50 678.50L518.50 673.50M524.50 501.50L524.50 506.50M524.50 678.50L524.50 673.50M529.50 501.50L529.50 506.50M529.50 678.50L529.50 673.50M535.50 501.50L535.50 510.50M535.50 678.50L535.50 669.50M541.50 501.50L541.50 506.50M541.50 678.50L541.50 673.50M547.50 501.50L547.50 506.50M547.50 678.50L547.50 673.50M553.50 501.50L553.50 506.50M553.50 678.50L553.50 673.50M559.50 501.50L559.50 506.50M559.50 678.50L559.50 673.50M565.50 501.50L565.50 506.50M565.50 678.50L565.50 673.50M571.50 501.50L571.50 506.50M571.50 678.50L571.50 673.50M577.50 501.50L577.50 506.50M577.50 678.50L577.50 673.50M583.50 501.50L583.50 506.50M583.50 678.50L583.50 673.50M589.50 501.50L589.50 510.50M589.50 678.50L589.50 669.50M595.50 501.50L595.50 506.50M595.50 678.50L595.50 673.50M601.50 501.50L601.50 506.50M601.50 678.50L601.50 673.50M607.50 501.50L607.50 506.50M607.50 678.50L607.50 673.50M613.50 501.50L613.50 506.50M613.50 678.50L613.50 673.50M619.50 501.50L619.50 506.50M619.50 678.50L619.50 673.50M625.50 501.50L625.50 506.50M625.50 678.50L625.50 673.50M631.50 501.50L631.50 506.50M631.50 678.50L631.50 673.50M637.50 501.50L637.50 506.50M637.50 678.50L637.50 673.50M643.50 501.50L643.50 510.50M643.50 678.50L643.50 669.50M649.50 501.50L649.50 506.50M649.50 678.50L649.50 673.50M654.50 501.50L654.50 506.50M654.50 678.50L654.50 673.50M660.50 501.50L660.50 506.50M660.50 678.50L660.50 673.50M666.50 501.50L666.50 506.50M666.50 678.50L666.50 673.50M672.50 501.50L672.50 506.50M672.50 678.50L672.50 673.50M678.50 501.50L678.50 506.50M678.50 678.50L678.50 673.50M684.50 501.50L684.50 506.50M684.50 678.50L684.50 673.50M690.50 501.50L690.50 506.50M690.50 678.50L690.50 673.50M696.50 501.50L696.50 510.50M696.50 678.50L696.50 669.50M702.50 501.50L702.50 506.50M702.50 678.50L702.50 673.50M708.50 501.50L708.50 506.50M708.50 678.50L708.50 673.50M714.50 501.50L714.50 506.50M714.50 678.50L714.50 673.50M720.50 501.50L720.50 506.50M720.50 678.50L720.50 673.50M726.50 501.50L726.50 506.50M726.50 678.50L726.50 673.50M732.50 501.50L732.50 506.50M732.50 678.50L732.50 673.50M738.50 501.50L738.50 506.50M738.50 678.50L738.50 673.50M744.50 501.50L744.50 506.50M744.50 678.50L744.50 673.50M750.50 501.50L750.50 510.50M750.50 678.50L750.50 669.50M756.50 501.50L756.50 506.50M756.50 678.50L756.50 673.50M762.50 501.50L762.50 506.50M762.50 678.50L762.50 673.50M768.50 501.50L768.50 506.50M768.50 678.50L768.50 673.50M774.50 501.50L774.50 506.50M774.50 678.50L774.50 673.50M779.50 501.50L779.50 506.50M779.50 678.50L779.50 673.50M785.50 501.50L785.50 506.50M785.50 678.50L785.50 673.50M791.50 501.50L791.50 506.50M791.50 678.50L791.50 673.50M797.50 501.50L797.50 506.50M797.50 678.50L797.50 673.50M803.50 501.50L803.50 510.50M803.50 678.50L803.50 669.50M809.50 501.50L809.50 506.50M809.50 678.50L809.50 673.50M815.50 501.50L815.50 506.50M815.50 678.50L815.50 673.50M821.50 501.50L821.50 506.50M821.50 678.50L821.50 673.50M827.50 501.50L827.50 506.50M827.50 678.50L827.50 673.50" stroke="#fff" stroke-width="1" fill="none" shape-rendering="crispEdges"/>
<path d="M201.50 501.50L210.50 501.50M829.50 501.50L838.50 501.50M204.50 508.50L210.50 508.50M829.50 508.50L835.50 508.50M204.50 515.50L210.50 515.50M829.50 515.50L835.50 515.50M204.50 522.50L210.50 522.50M829.50 522.50L835.50 522.50M204.50 529.50L210.50 529.50M829.50 529.50L835.50 529.50M201.50 536.50L210.50 536.50M829.50 536.50L838.50 536.50M204.50 543.50L210.50 543.50M829.50 543.50L835.50 543.50M204.50 551.50L210.50 551.50M829.50 551.50L835.50 551.50M204.50 558.50L210.50 558.50M829.50 558.50L835.50 558.50M204.50 565.50L210.50 565.50M829.50 565.50L835.50 565.50M201.50 572.50L210.50 572.50M829.50 572.50L838.50 572.50M204.50 579.50L210.50 579.50M829.50 579.50L835.50 579.50M204.50 586.50L210.50 586.50M829.50 586.50L835.50 586.50M204.50 593.50L210.50 593.50M829.50 593.50L835.50 593.50M204.50 600.50L210.50 600.50M829.50 600.50L835.50 600.50M201.50 607.50L210.50 607.50M829.50 607.50L838.50 607.50M204.50 614.50L210.50 614.50M829.50 614.50L835.50 614.50M204.50 621.50L210.50 621.50M829.50 621.50L835.50 621.50M204.50 628.50L210.50 628.50M829.50 628.50L835.50 628.50M204.50 636.50L210.50 636.50M829.50 636.50L835.50 636.50M201.50 643.50L210.50 643.50M829.50 643.50L838.50 643.50M204.50 650.50L210.50 650.50M829.50 650.50L835.50 650.50M204.50 657.50L210.50 657.50M829.50 657.50L835.50 657.50M204.50 664.50L210.50 664.50M829.50 664.50L835.50 664.50M204.50 671.50L210.50 671.50M829.50 671.50L835.50 671.50M201.50 678.50L210.50 678.50M829.50 678.50L838.50 678.50" stroke="#fff" stroke-width="1" fill="none" shape-rendering="crispEdges"/>
<text x="194.6" y="506.0" font-size="13.5" text-anchor="end" fill="#fff" stroke="#000" stroke-width="0.2">4</text>
<text x="194.6" y="541.4" font-size="13.5" text-anchor="end" fill="#fff" stroke="#000" stroke-width="0.2">3</text>
<text x="194.6" y="576.8" font-size="13.5" text-anchor="end" fill="#fff" stroke="#000" stroke-width="0.2">2</text>
<text x="194.6" y="612.2" font-size="13.5" text-anchor="end" fill="#fff" stroke="#000" stroke-width="0.2">1</text>
<text x="194.6" y="647.6" font-size="13.5" text-anchor="end" fill="#fff" stroke="#000" stroke-width="0.2">0</text>
<text x="194.6" y="681.5" font-size="13.5" text-anchor="end" fill="#fff" stroke="#000" stroke-width="0.2">−1</text>
<text x="845.8" y="506.3" font-size="13.5" text-anchor="start" fill="#fff" stroke="#000" stroke-width="0.2" textLength="54.4" lengthAdjust="spacingAndGlyphs">1.0e+04</text>
<text x="845.8" y="541.7" font-size="13.5" text-anchor="start" fill="#fff" stroke="#000" stroke-width="0.2" textLength="57.7" lengthAdjust="spacingAndGlyphs">6.0e+03</text>
<text x="845.8" y="577.1" font-size="13.5" text-anchor="start" fill="#fff" stroke="#000" stroke-width="0.2" textLength="57.7" lengthAdjust="spacingAndGlyphs">2.0e+03</text>
<text x="845.8" y="612.5" font-size="13.5" text-anchor="start" fill="#fff" stroke="#000" stroke-width="0.2" textLength="67.8" lengthAdjust="spacingAndGlyphs">−2.0e+03</text>
<text x="845.8" y="647.9" font-size="13.5" text-anchor="start" fill="#fff" stroke="#000" stroke-width="0.2" textLength="67.8" lengthAdjust="spacingAndGlyphs">−6.0e+03</text>
<text x="845.8" y="683.3" font-size="13.5" text-anchor="start" fill="#fff" stroke="#000" stroke-width="0.2" textLength="65" lengthAdjust="spacingAndGlyphs">−1.0e+04</text>
<text x="215.0" y="697" font-size="14" text-anchor="middle" fill="#fff" stroke="#000" stroke-width="0.2">14:30</text>
<text x="268.6" y="697" font-size="14" text-anchor="middle" fill="#fff" stroke="#000" stroke-width="0.2">14:45</text>
<text x="322.1" y="697" font-size="14" text-anchor="middle" fill="#fff" stroke="#000" stroke-width="0.2">15:00</text>
<text x="375.7" y="697" font-size="14" text-anchor="middle" fill="#fff" stroke="#000" stroke-width="0.2">15:15</text>
<text x="429.3" y="697" font-size="14" text-anchor="middle" fill="#fff" stroke="#000" stroke-width="0.2">15:30</text>
<text x="482.8" y="697" font-size="14" text-anchor="middle" fill="#fff" stroke="#000" stroke-width="0.2">15:45</text>
<text x="536.4" y="697" font-size="14" text-anchor="middle" fill="#fff" stroke="#000" stroke-width="0.2">16:00</text>
<text x="590.0" y="697" font-size="14" text-anchor="middle" fill="#fff" stroke="#000" stroke-width="0.2">16:15</text>
<text x="643.6" y="697" font-size="14" text-anchor="middle" fill="#fff" stroke="#000" stroke-width="0.2">16:30</text>
<text x="697.1" y="697" font-size="14" text-anchor="middle" fill="#fff" stroke="#000" stroke-width="0.2">16:45</text>
<text x="750.7" y="697" font-size="14" text-anchor="middle" fill="#fff" stroke="#000" stroke-width="0.2">17:00</text>
<text x="804.3" y="697" font-size="14" text-anchor="middle" fill="#fff" stroke="#000" stroke-width="0.2">17:15</text>
<text x="117.5" y="697" font-size="14" text-anchor="start" fill="#fff" stroke="#000" stroke-width="0.2" textLength="63" lengthAdjust="spacingAndGlyphs">GMT(min)</text>
<text x="212" y="491.6" font-size="15" text-anchor="start" fill="#fff" stroke="#000" stroke-width="0.2" textLength="237" lengthAdjust="spacingAndGlyphs">SAF_BXuT/Data Quality (L)</text>
<text x="531" y="491.6" font-size="15" text-anchor="start" fill="#00f400" stroke="#000" stroke-width="0.2" textLength="298.5" lengthAdjust="spacingAndGlyphs">MEXORBMC/SPF X, Spacecraft (R)</text>
<text x="69.5" y="590" font-size="15" text-anchor="middle" fill="#fff" stroke="#000" stroke-width="0.2" textLength="142.4" lengthAdjust="spacingAndGlyphs" transform="rotate(-90 69.5 590)">Raw Data Quality</text>
<text x="89.7" y="590.3" font-size="15" text-anchor="middle" fill="#fff" stroke="#000" stroke-width="0.2" textLength="46.6" lengthAdjust="spacingAndGlyphs" transform="rotate(-90 89.7 590.3)">(Raw)</text>
<text x="970" y="590" font-size="15" text-anchor="middle" fill="#fff" stroke="#000" stroke-width="0.2" textLength="171.6" lengthAdjust="spacingAndGlyphs" transform="rotate(90 970 590)">Component Distance</text>
<text x="950.8" y="589.7" font-size="15" text-anchor="middle" fill="#fff" stroke="#000" stroke-width="0.2" textLength="39" lengthAdjust="spacingAndGlyphs" transform="rotate(90 950.8 589.7)">(km)</text>
<path d="M231.00 572.50L232.40 572.50M231.50 572.50L232.10 572.50M233.40 572.50L247.64 572.50M248.94 572.50L263.17 572.50M264.47 572.50L278.71 572.50M280.01 572.50L294.24 572.50M295.54 572.50L309.78 572.50M311.08 572.50L325.32 572.50M326.62 572.50L340.85 572.50M342.15 572.50L356.39 572.50M357.69 572.50L371.92 572.50M373.22 572.50L387.46 572.50M388.76 572.50L403.00 572.50M405.00 607.50L418.53 607.50M419.83 607.50L434.07 607.50M435.37 607.50L449.60 607.50M450.90 607.50L465.14 607.50M466.44 607.50L480.68 607.50M481.98 607.50L496.21 607.50M497.51 607.50L511.75 607.50M513.05 607.50L527.28 607.50M528.58 607.50L542.82 607.50M544.12 607.50L558.36 607.50M559.66 607.50L562.20 607.50M562.80 643.50L573.89 643.50M575.19 643.50L589.43 643.50M590.73 643.50L604.96 643.50M606.26 643.50L620.50 643.50M621.80 643.50L636.04 643.50M637.34 643.50L651.57 643.50M652.87 643.50L667.11 643.50M668.41 643.50L682.64 643.50M683.94 643.50L698.18 643.50M699.48 643.50L713.72 643.50M715.02 643.50L729.25 643.50M730.55 643.50L744.79 643.50M746.09 643.50L760.32 643.50M761.62 643.50L775.86 643.50M777.16 643.50L791.40 643.50M792.70 643.50L805.00 643.50M404.00 579.50L405.00 579.50M562.00 630.50L563.00 630.50M805.00 630.50L806.00 630.50M806.50 607.50L808.00 607.50M808.80 607.50L810.20 607.50" stroke="#fff" stroke-width="1" fill="none" shape-rendering="crispEdges"/>
<path d="M210.50 586.50L213.30 586.50M213.70 587.50L216.50 587.50M216.90 587.50L219.70 587.50M220.10 587.50L222.90 587.50M223.30 588.50L226.10 588.50M226.50 588.50L229.30 588.50M229.70 589.50L232.50 589.50M232.90 589.50L235.70 589.50M236.10 590.50L238.90 590.50M239.30 590.50L242.10 590.50M242.50 591.50L245.30 591.50M245.70 591.50L248.50 591.50M248.90 592.50L251.70 592.50M252.10 592.50L254.90 592.50M255.30 593.50L258.10 593.50M258.50 593.50L261.30 593.50M261.70 594.50L264.50 594.50M264.90 595.50L267.70 595.50M268.10 595.50L270.90 595.50M271.30 596.50L274.10 596.50M274.50 596.50L277.30 596.50M277.70 597.50L280.50 597.50M280.90 598.50L283.70 598.50M284.10 598.50L286.90 598.50M287.30 599.50L290.10 599.50M290.50 599.50L293.30 599.50M293.70 600.50L296.50 600.50M296.90 601.50L299.70 601.50M300.10 601.50L302.90 601.50M303.30 602.50L306.10 602.50M306.50 602.50L309.30 602.50M309.70 603.50L312.50 603.50M312.90 604.50L315.70 604.50M316.10 604.50L318.90 604.50M319.30 605.50L322.10 605.50M322.50 605.50L325.30 605.50M325.70 606.50L328.50 606.50M328.90 606.50L331.70 606.50M332.10 607.50L334.90 607.50M335.30 608.50L338.10 608.50M338.50 608.50L341.30 608.50M341.70 609.50L344.50 609.50M344.90 609.50L347.70 609.50M348.10 610.50L350.90 610.50M351.30 610.50L354.10 610.50M354.50 611.50L357.30 611.50M357.70 611.50L360.50 611.50M360.90 612.50L363.70 612.50M364.10 612.50L366.90 612.50M367.30 613.50L370.10 613.50M370.50 613.50L373.30 613.50M373.70 614.50L376.50 614.50M376.90 614.50L379.70 614.50M380.10 615.50L382.90 615.50M383.30 615.50L386.10 615.50M386.50 616.50L389.30 616.50M389.70 616.50L392.50 616.50M392.90 617.50L395.70 617.50M396.10 617.50L398.90 617.50M399.30 618.50L402.10 618.50M402.50 618.50L405.30 618.50M405.70 619.50L408.50 619.50M408.90 619.50L411.70 619.50M412.10 620.50L414.90 620.50M415.30 620.50L418.10 620.50M418.50 621.50L421.30 621.50M421.70 621.50L424.50 621.50M424.90 622.50L427.70 622.50M428.10 622.50L430.90 622.50M431.30 622.50L434.10 622.50M434.50 623.50L437.30 623.50M437.70 623.50L440.50 623.50M440.90 624.50L443.70 624.50M444.10 624.50L446.90 624.50M447.30 625.50L450.10 625.50M450.50 625.50L453.30 625.50M453.70 625.50L456.50 625.50M456.90 626.50L459.70 626.50M460.10 626.50L462.90 626.50M463.30 627.50L466.10 627.50M466.50 627.50L469.30 627.50M469.70 628.50L472.50 628.50M472.90 628.50L475.70 628.50M476.10 628.50L478.90 628.50M479.30 629.50L482.10 629.50M482.50 629.50L485.30 629.50M485.70 630.50L488.50 630.50M488.90 630.50L491.70 630.50M492.10 630.50L494.90 630.50M495.30 631.50L498.10 631.50M498.50 631.50L501.30 631.50M501.70 632.50L504.50 632.50M504.90 632.50L507.70 632.50M508.10 632.50L510.90 632.50M511.30 633.50L514.10 633.50M514.50 633.50L517.30 633.50M517.70 634.50L520.50 634.50M520.90 634.50L523.70 634.50M524.10 634.50L526.90 634.50M527.30 635.50L530.10 635.50M530.50 635.50L533.30 635.50M533.70 635.50L536.50 635.50M536.90 636.50L539.70 636.50M540.10 636.50L542.90 636.50M543.30 637.50L546.10 637.50M546.50 637.50L549.30 637.50M549.70 637.50L552.50 637.50M552.90 637.50L555.70 637.50M556.10 638.50L558.90 638.50M559.30 638.50L562.10 638.50M562.50 638.50L565.30 638.50M565.70 639.50L568.50 639.50M568.90 639.50L571.70 639.50M572.10 639.50L574.90 639.50M575.30 639.50L578.10 639.50M578.50 640.50L581.30 640.50M581.70 640.50L584.50 640.50M584.90 640.50L587.70 640.50M588.10 640.50L590.90 640.50M591.30 641.50L594.10 641.50M594.50 641.50L597.30 641.50M597.70 641.50L600.50 641.50M600.90 641.50L603.70 641.50M604.10 641.50L606.90 641.50M607.30 641.50L610.10 641.50M610.50 641.50L613.30 641.50M613.70 641.50L616.50 641.50M616.90 642.50L619.70 642.50M620.10 642.50L622.90 642.50M623.30 642.50L626.10 642.50M626.50 642.50L629.30 642.50M629.70 642.50L632.50 642.50M632.90 641.50L635.70 641.50M636.10 641.50L638.90 641.50M639.30 641.50L642.10 641.50M642.50 641.50L645.30 641.50M645.70 641.50L648.50 641.50M648.90 641.50L651.70 641.50M652.10 641.50L654.90 641.50M655.30 640.50L658.10 640.50M658.50 640.50L661.30 640.50M661.70 640.50L664.50 640.50M664.90 640.50L667.70 640.50M668.10 639.50L670.90 639.50M671.30 639.50L674.10 639.50M674.50 639.50L677.30 639.50M677.70 638.50L680.50 638.50M680.90 638.50L683.70 638.50M684.10 637.50L686.90 637.50M687.30 637.50L690.10 637.50M690.50 636.50L693.30 636.50M693.70 635.50L696.50 635.50M696.90 635.50L699.70 635.50M700.10 634.50L702.90 634.50M703.30 633.50L706.10 633.50M706.50 633.50L709.30 633.50M709.70 632.50L712.50 632.50M712.90 631.50L715.70 631.50M716.10 630.50L718.90 630.50M719.30 629.50L722.10 629.50M722.50 628.50L725.30 628.50M725.70 627.50L728.50 627.50M728.90 626.50L731.70 626.50M732.10 625.50L734.90 625.50M735.30 624.50L738.10 624.50M738.50 623.50L741.30 623.50M741.70 622.50L744.50 622.50M744.90 621.50L747.70 621.50M748.10 620.50L750.90 620.50M751.30 618.50L754.10 618.50M754.50 617.50L757.30 617.50M757.70 616.50L760.50 616.50M760.90 614.50L763.70 614.50M764.10 613.50L766.90 613.50M767.30 611.50L770.10 611.50M770.50 610.50L773.30 610.50M773.70 608.50L776.50 608.50M776.90 607.50L779.70 607.50M780.10 605.50L782.90 605.50M783.30 603.50L786.10 603.50M786.50 602.50L789.30 602.50M789.70 600.50L792.50 600.50M792.90 598.50L795.70 598.50M796.10 596.50L798.90 596.50M799.30 594.50L802.10 594.50M802.50 592.50L805.30 592.50M805.70 591.50L808.50 591.50M808.90 589.50L811.70 589.50M812.10 587.50L814.90 587.50M815.30 585.50L818.10 585.50M818.50 583.50L821.30 583.50M821.70 581.50L824.50 581.50M824.90 578.50L827.70 578.50M828.10 577.50L829.10 577.50" stroke="#00e000" stroke-width="1" fill="none" shape-rendering="crispEdges"/>
</svg>
</body></html>
